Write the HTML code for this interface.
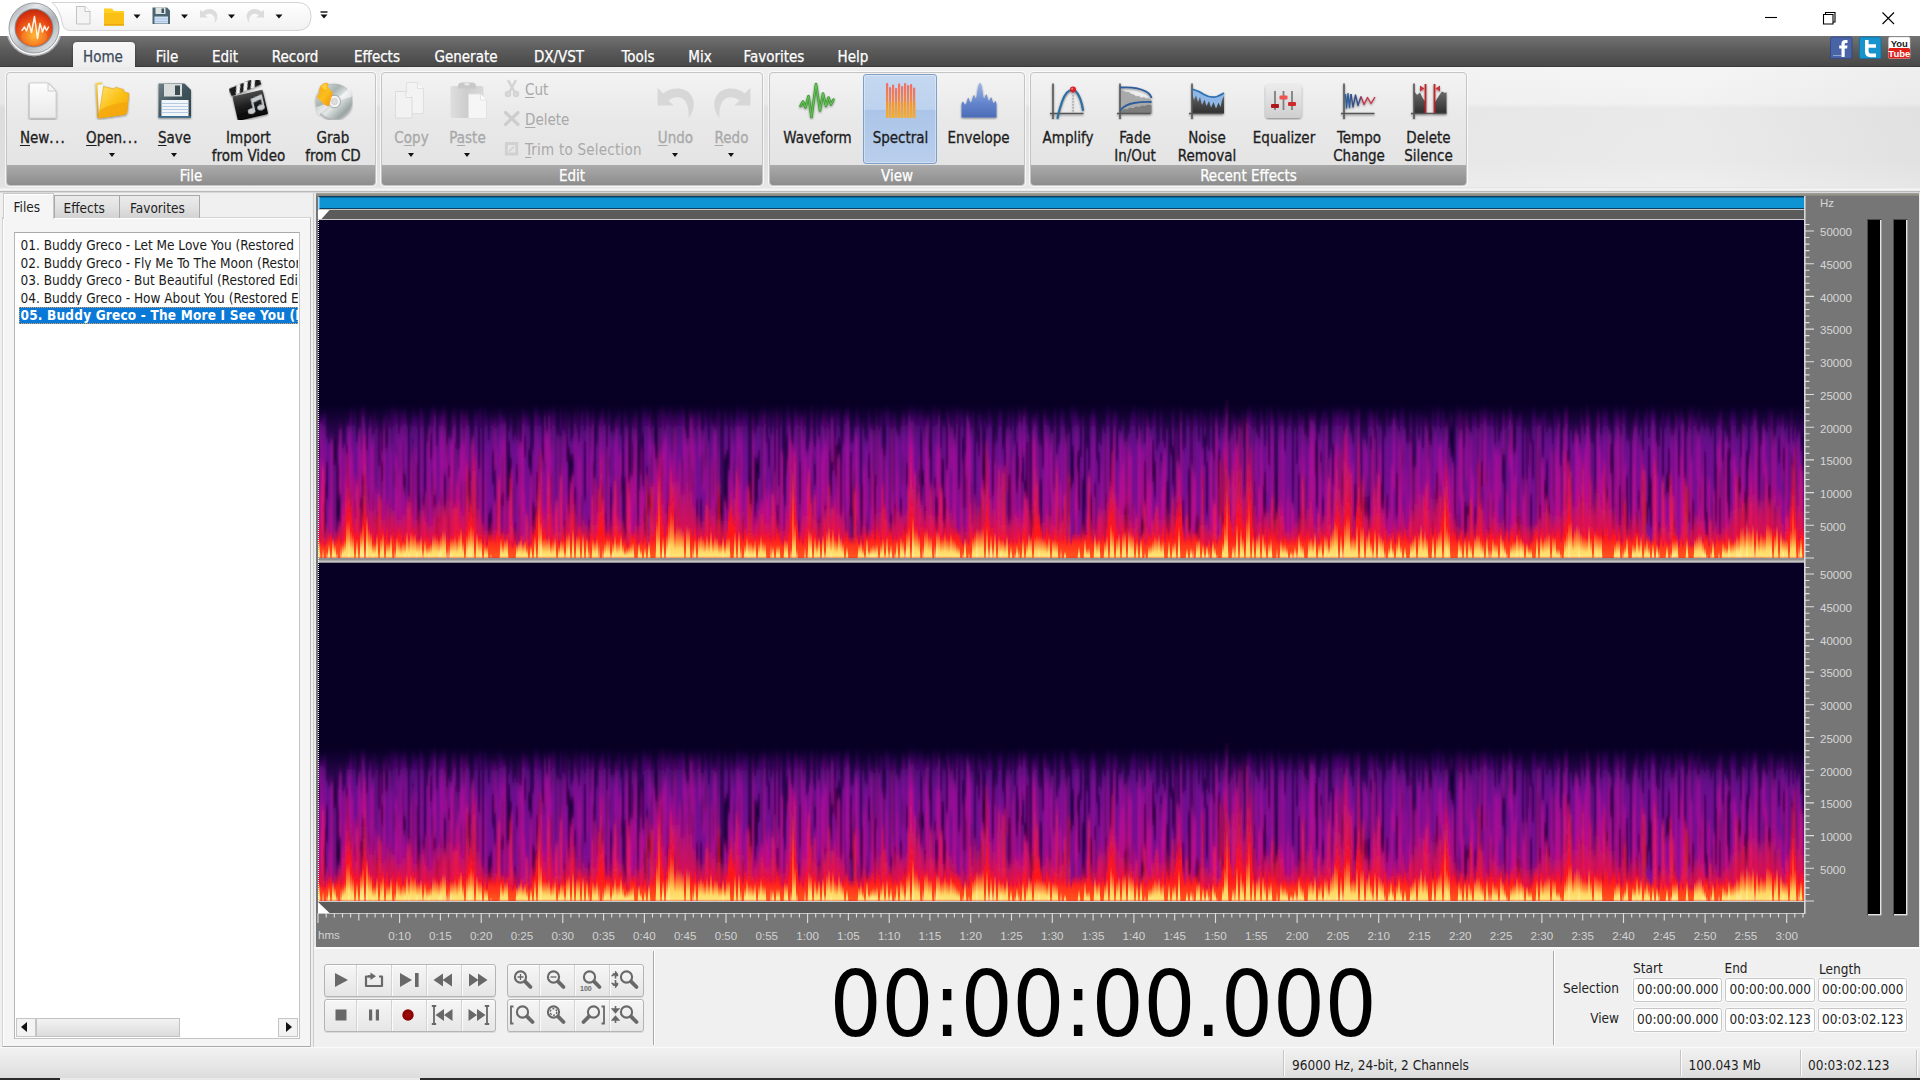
<!DOCTYPE html><html><head><meta charset='utf-8'><title>WavePad</title><style>
*{box-sizing:border-box}
html,body{margin:0;padding:0}
body{width:1920px;height:1080px;overflow:hidden;position:relative;background:#f0f0f0;font-family:'DejaVu Sans Condensed','Liberation Sans',sans-serif;font-size:15px;color:#1e1e1e}
.a{position:absolute}
.t{position:absolute;white-space:nowrap;line-height:1}
.c{transform:translateX(-50%);text-align:center}
.grp{position:absolute;top:72px;height:114px;border:1px solid #c4c4c4;border-radius:4px;background:linear-gradient(#f3f3f3,#e9e9e9 40%,#e2e2e2);overflow:hidden;box-shadow:0 0 0 1px rgba(255,255,255,.7)}
.grp .lb{-webkit-text-stroke:.25px #fff;position:absolute;left:0;right:0;bottom:0;height:20px;background:linear-gradient(#ababab,#8d8d8d);color:#fff;text-align:center;font-size:15px;line-height:22px}
.rl{-webkit-text-stroke:.3px currentColor;position:absolute;white-space:nowrap;line-height:17.5px;font-size:15px;text-align:center;transform:translateX(-50%);color:#1e1e1e}
.dis{color:#a9a9a9}
.arr{position:absolute;width:0;height:0;border-left:3.5px solid transparent;border-right:3.5px solid transparent;border-top:4px solid #111}
u{text-decoration-thickness:1px;text-underline-offset:2px}
</style></head><body>

<svg width='0' height='0' style='position:absolute'><defs>
<linearGradient id='gPage' x1='0' y1='0' x2='0' y2='1'><stop offset='0' stop-color='#fdfdfd'/><stop offset='1' stop-color='#e9e9e9'/></linearGradient>
<linearGradient id='gFold' x1='0' y1='0' x2='1' y2='1'><stop offset='0' stop-color='#ffe36a'/><stop offset='.5' stop-color='#fbc117'/><stop offset='1' stop-color='#f2a30c'/></linearGradient>
<linearGradient id='gFoldB' x1='0' y1='0' x2='0' y2='1'><stop offset='0' stop-color='#f6d25a'/><stop offset='1' stop-color='#d8960f'/></linearGradient>
<linearGradient id='gDisk' x1='0' y1='0' x2='1' y2='1'><stop offset='0' stop-color='#6d7f86'/><stop offset='.5' stop-color='#3f545c'/><stop offset='1' stop-color='#2f444c'/></linearGradient>
<linearGradient id='gClap' x1='0' y1='0' x2='0' y2='1'><stop offset='0' stop-color='#4a4a4a'/><stop offset='.5' stop-color='#1c1c1c'/><stop offset='1' stop-color='#050505'/></linearGradient>
<linearGradient id='gCD' x1='0' y1='0' x2='1' y2='1'><stop offset='0' stop-color='#e8eceb'/><stop offset='.35' stop-color='#a9b5b3'/><stop offset='.55' stop-color='#e3e7e6'/><stop offset='.8' stop-color='#9aa6a4'/><stop offset='1' stop-color='#cfd6d4'/></linearGradient>
<linearGradient id='gFlame' x1='0' y1='0' x2='1' y2='1'><stop offset='0' stop-color='#f6a016'/><stop offset='.5' stop-color='#fbbf1e'/><stop offset='1' stop-color='#f18e0e'/></linearGradient>
<linearGradient id='gSpec' x1='0' y1='0' x2='0' y2='1'><stop offset='0' stop-color='#ee6f66'/><stop offset='.5' stop-color='#f0884a'/><stop offset='1' stop-color='#f4b23a'/></linearGradient>
<linearGradient id='gEnv' x1='0' y1='0' x2='0' y2='1'><stop offset='0' stop-color='#9db4e4'/><stop offset='.6' stop-color='#6384cc'/><stop offset='1' stop-color='#4b6cb8'/></linearGradient>
<linearGradient id='gDark' x1='0' y1='0' x2='0' y2='1'><stop offset='0' stop-color='#6a6a6a'/><stop offset='1' stop-color='#2e2e2e'/></linearGradient>
<linearGradient id='gEq' x1='0' y1='0' x2='0' y2='1'><stop offset='0' stop-color='#ececec'/><stop offset='1' stop-color='#cfcfcf'/></linearGradient>
<linearGradient id='gClip' x1='0' y1='0' x2='1' y2='0'><stop offset='0' stop-color='#dedede'/><stop offset='.5' stop-color='#cdcdcd'/><stop offset='1' stop-color='#d9d9d9'/></linearGradient>
<radialGradient id='gLogo' cx='.5' cy='.7' r='.75'><stop offset='0' stop-color='#ffb52e'/><stop offset='.35' stop-color='#f4701a'/><stop offset='.7' stop-color='#e03c12'/><stop offset='1' stop-color='#b8240a'/></radialGradient>
<linearGradient id='gRing' x1='0' y1='0' x2='1' y2='1'><stop offset='0' stop-color='#8d9399'/><stop offset='.3' stop-color='#e6e8ea'/><stop offset='.6' stop-color='#aeb3b8'/><stop offset='1' stop-color='#f4f4f4'/></linearGradient>
<filter id='sh' x='-20%' y='-20%' width='140%' height='150%'><feGaussianBlur in='SourceAlpha' stdDeviation='1'/><feOffset dy='1.2'/><feComponentTransfer><feFuncA type='linear' slope='.45'/></feComponentTransfer><feMerge><feMergeNode/><feMergeNode in='SourceGraphic'/></feMerge></filter>
</defs></svg>

<div class='a' style='left:0;top:0;width:1920px;height:36px;background:#fff'></div>
<div class='a' style='left:0;top:36px;width:1920px;height:31px;background:linear-gradient(#727272,#5c5c5c 45%,#484848);border-bottom:1px solid #3a3a3a'></div>
<svg class='a' style='left:40px;top:0' width='300' height='36' viewBox='40 0 300 36'><defs><linearGradient id='gQ' x1='0' y1='0' x2='0' y2='1'><stop offset='0' stop-color='#ffffff'/><stop offset='1' stop-color='#f1f1f1'/></linearGradient></defs><path d='M52 2.500H297Q311 2.500 311 16.500Q311 30.500 297 30.500H70Q64 30.500 62.500 24Q60 9 52 2.500z' fill='url(#gQ)' stroke='#d3d3d3' stroke-width='1'/><path d='M76.500 6.500h8.500l5 5v12.500h-13.500z' fill='#f4f4f4' stroke='#c2c2c2'/><path d='M85 6.500v5h5' fill='#fff' stroke='#c2c2c2'/><path d='M104 8.500h8l2 2.500h10v14.500h-20z' fill='#ffcf24'/><path d='M104 13h20v12.500h-20z' fill='#fbc015'/><path d='M104 24h20v1.500h-20z' fill='#e9a90c'/><path d='M152.500 7.500h14.500l3 3v13.500h-17.500z' fill='#4a6470'/><rect x='155.500' y='7.500' width='10' height='6.500' fill='#dfe3e4'/><rect x='161.500' y='8.500' width='2.500' height='4.500' fill='#3f5560'/><rect x='154.500' y='16.500' width='13.500' height='7' fill='#cfe0f2'/><path d='M154.500 19h13.500M154.500 21.500h13.500' stroke='#9fbfe0' stroke-width='.8'/><path d='M200 10v7.500h8l-2.800-2.300q4-2.700 7.500-.3q3.300 2.500 1.800 8q4-4.500 2.500-9q-2-5-8-5q-4 0-6.500 2.800z' fill='#dcdcdc'/><path d='M264 10v7.500h-8l2.800-2.300q-4-2.700-7.500-.3q-3.300 2.500-1.800 8q-4-4.500-2.500-9q2-5 8-5q4 0 6.500 2.800z' fill='#dcdcdc'/><path d='M133.500 14.500h7l-3.500 4zM181 14.500h7l-3.500 4zM228 14.500h7l-3.500 4zM275.500 14.500h7l-3.500 4z' fill='#111'/><path d='M320.500 12h7' stroke='#111' stroke-width='1.400'/><path d='M320.500 14.500h7l-3.500 4z' fill='#111'/></svg>
<svg class='a' style='left:4px;top:0' width='62' height='60' viewBox='4 0 62 60'><circle cx='34' cy='28.500' r='28' fill='#fff' opacity='.5'/><circle cx='34' cy='28.500' r='26.500' fill='#fff' opacity='.9'/><circle cx='34' cy='28' r='25' fill='url(#gRing)' stroke='#8f959b' stroke-width='.9'/><circle cx='34' cy='28' r='19.500' fill='#858c93'/><circle cx='34' cy='28' r='18.500' fill='url(#gLogo)'/><ellipse cx='34' cy='37' rx='13' ry='8' fill='#ffc04a' opacity='.22'/><path d='M22 30.500l2.500-3.500 2 4 2.500-7.500 2.500 9 3-16 3 22 2.500-15 2.500 8.500 2-6 2 4.500 2-3.500' fill='none' stroke='#fff' stroke-width='1.500' stroke-linejoin='round' stroke-linecap='round' opacity='.9'/></svg>
<svg class='a' style='left:1750px;top:0' width='170' height='36' viewBox='1750 0 170 36'><g fill='none' stroke='#000' stroke-width='1.100'><path d='M1765 17.500h12'/><path d='M1823.500 14.500h9.500v9.500h-9.500zM1825.500 14.500v-2h9.500v9.500h-2'/><path d='M1882.500 12.500l11.500 11.500M1894 12.500l-11.500 11.500'/></g></svg>
<svg class='a' style='left:1826px;top:36px' width='90' height='26' viewBox='1826 36 90 26'><rect x='1830.500' y='37' width='21.500' height='21.500' rx='1.500' fill='#4863a6' stroke='#2f4785' stroke-width='.8'/><path d='M1841.500 57v-8.500h-2.300v-3h2.300v-2q0-3.500 3.800-3.500h2.200v3h-1.600q-1.200 0-1.200 1.200v1.300h2.800l-.4 3h-2.400v8.500z' fill='#fff'/><path d='M1833 55.500h8' stroke='#8fa2d0' stroke-width='1'/><rect x='1859.500' y='37' width='21.500' height='21.500' rx='1.500' fill='#1793cd' stroke='#0f6f9f' stroke-width='.8'/><path d='M1865 40h3.600v4.200h7.400v3.600h-7.400v3.200q0 2.600 2.600 2.600h4.800v3.600h-5.600q-5.400 0-5.400-5.400z' fill='#fff'/><rect x='1888.500' y='37' width='21.500' height='21.500' rx='1.500' fill='#fff' stroke='#c9c9c9' stroke-width='.6'/><rect x='1888.500' y='48' width='21.500' height='10.500' rx='1.500' fill='#e0211a'/><text x='1899.300' y='46.500' text-anchor='middle' font-family="'Liberation Sans',sans-serif" font-weight='bold' font-size='9.500' fill='#1a1a1a'>You</text><text x='1899.300' y='57' text-anchor='middle' font-family="'Liberation Sans',sans-serif" font-weight='bold' font-size='9.500' fill='#fff'>Tube</text></svg>
<div class='a' style='left:73px;top:42px;width:62px;height:27px;background:linear-gradient(#f7f7f7,#ededed);border-radius:4px 4px 0 0;box-shadow:0 0 2px rgba(0,0,0,.5)'></div>
<div class='a' style='left:71px;top:67px;width:66px;height:3px;background:#ebebeb'></div>
<div class='t c' style='left:103px;top:50px;font-size:15px;color:#3c4a5c;-webkit-text-stroke:.25px #3c4a5c'>Home</div>
<div class='t c' style='left:167px;top:50px;font-size:15px;color:#fff;-webkit-text-stroke:.25px #fff'>File</div>
<div class='t c' style='left:225px;top:50px;font-size:15px;color:#fff;-webkit-text-stroke:.25px #fff'>Edit</div>
<div class='t c' style='left:295px;top:50px;font-size:15px;color:#fff;-webkit-text-stroke:.25px #fff'>Record</div>
<div class='t c' style='left:377px;top:50px;font-size:15px;color:#fff;-webkit-text-stroke:.25px #fff'>Effects</div>
<div class='t c' style='left:466px;top:50px;font-size:15px;color:#fff;-webkit-text-stroke:.25px #fff'>Generate</div>
<div class='t c' style='left:559px;top:50px;font-size:15px;color:#fff;-webkit-text-stroke:.25px #fff'>DX/VST</div>
<div class='t c' style='left:638px;top:50px;font-size:15px;color:#fff;-webkit-text-stroke:.25px #fff'>Tools</div>
<div class='t c' style='left:700px;top:50px;font-size:15px;color:#fff;-webkit-text-stroke:.25px #fff'>Mix</div>
<div class='t c' style='left:774px;top:50px;font-size:15px;color:#fff;-webkit-text-stroke:.25px #fff'>Favorites</div>
<div class='t c' style='left:853px;top:50px;font-size:15px;color:#fff;-webkit-text-stroke:.25px #fff'>Help</div>
<div class='a' style='left:0;top:67px;width:1920px;height:125px;background:linear-gradient(90deg,rgba(0,0,0,.035),rgba(0,0,0,.01) 60%,rgba(255,255,255,.18) 88%,rgba(0,0,0,.02)),linear-gradient(180deg,#f3f3f3 0,#efefef 29%,#e5e5e5 33%,#e6e6e6 75%,#ececec 100%)'></div>
<div class='a' style='left:0;top:187px;width:1920px;height:6px;background:linear-gradient(#e2e2e2,#f6f6f6 45%,#e9e9e9 62%,#b2b2b2 70%,#c6c6c6 84%,#ededed 100%)'></div>
<div class='grp' style='left:6px;width:370px'><div class='lb'>File</div></div>
<div class='grp' style='left:381px;width:382px'><div class='lb'>Edit</div></div>
<div class='grp' style='left:769px;width:256px'><div class='lb'>View</div></div>
<div class='grp' style='left:1030px;width:437px'><div class='lb'>Recent Effects</div></div>
<div class='a' style='left:863px;top:74px;width:74px;height:90px;border:1px solid #7f9fc9;border-radius:3px;background:linear-gradient(#c5d8f0,#bdd2ee 39%,#abc5e8 40%,#b9ceec 100%);box-shadow:inset 0 0 0 1px rgba(255,255,255,.35)'></div>
<svg class='a' style='left:23px;top:80px' width='40' height='40' viewBox='0 0 40 40' ><g filter='url(#sh)'><path d='M6.500 3h18.500l8 8v27h-26.500z' fill='url(#gPage)' stroke='#c9c9c9' stroke-width='.8'/><path d='M25 3v8h8z' fill='#f6f6f6' stroke='#c4c4c4' stroke-width='.8' stroke-linejoin='round'/></g></svg>
<div class='rl' style='left:43px;top:130px'><u>N</u>ew<span style='letter-spacing:1.3px'>...</span></div>
<svg class='a' style='left:89.5px;top:80px' width='40' height='40' viewBox='0 0 40 40' ><g filter='url(#sh)'><path d='M5.5 3 L12 2.2 L14.5 37 L7.5 38z' fill='url(#gFoldB)'/><path d='M7.5 5 L13 4.3 L15 36 L9 37z' fill='#f5f5f5'/><path d='M13.5 6.5 L24 9 L25.5 7.2 L33.5 9.5 L34 12 L39 13.3 L37 32 Q36.7 34 35 34.4 L9.5 38 Q8.5 38 8.7 36.5z' fill='url(#gFold)' stroke='#e0a21a' stroke-width='.6'/><path d='M10 30 Q22 23 38 22 L37 32 Q36.7 34 35 34.4 L9.5 38 Q8.5 38 8.7 36.5z' fill='#f3a50f' opacity='.75'/></g></svg>
<div class='rl' style='left:112.5px;top:130px'><u>O</u>pen<span style='letter-spacing:1.3px'>...</span></div>
<div class='arr' style='left:109.0px;top:152.5px'></div>
<svg class='a' style='left:154.5px;top:80px' width='40' height='40' viewBox='0 0 40 40' ><g filter='url(#sh)'><path d='M3.5 3.5h26l6.5 6.5v27.5h-32.5z' fill='url(#gDisk)'/><rect x='9' y='4' width='18' height='12.5' fill='#d9dcdc'/><rect x='20' y='5.5' width='5' height='9.5' fill='#3c4c52'/><rect x='6.5' y='20' width='27' height='16' fill='#f2f6fa'/><path d='M6.5 23.5h27M6.5 26.5h27M6.5 29.5h27M6.5 32.5h27' stroke='#b5cbe3' stroke-width='1.2'/><rect x='3.5' y='36' width='32.5' height='1.5' fill='#3b6e93'/></g></svg>
<div class='rl' style='left:174.5px;top:130px'><u>S</u>ave</div>
<div class='arr' style='left:171.0px;top:152.5px'></div>
<svg class='a' style='left:228.5px;top:80px' width='40' height='40' viewBox='0 0 40 40' ><g filter='url(#sh)' transform='rotate(-13 20 22)'><rect x='5' y='13' width='31' height='25' rx='1.5' fill='url(#gClap)'/><g transform='rotate(-9 5 13)'><rect x='4.5' y='4.5' width='32' height='8' rx='1' fill='#1a1a1a'/><path d='M9 12.5l4-8h4l-4 8zM17 12.5l4-8h4l-4 8zM25 12.5l4-8h4l-4 8z' fill='#f2f2f2'/></g><g fill='#c9cdd2'><ellipse cx='20.5' cy='31.5' rx='3.6' ry='2.7'/><ellipse cx='30.5' cy='30' rx='3.6' ry='2.7'/><path d='M22.3 31.5V19.5l11.8-2.2v12.7h-1.8v-8.2l-8.2 1.6v8.1z'/></g></g></svg>
<div class='rl' style='left:248.5px;top:130px'>Import<br>from Video</div>
<svg class='a' style='left:313px;top:80px' width='40' height='40' viewBox='0 0 40 40' ><g filter='url(#sh)'><ellipse cx='21' cy='21.5' rx='18' ry='17.5' fill='url(#gCD)' stroke='#a9b1b0' stroke-width='.6'/><path d='M21 21.5L36 8A18 17.5 0 0 1 38.6 17z' fill='#fff' opacity='.55'/><path d='M21 21.5L6 35A18 17.5 0 0 1 3.6 27z' fill='#fff' opacity='.5'/><ellipse cx='21.5' cy='21.5' rx='6' ry='6.3' fill='#f4f4f4' stroke='#8d9795' stroke-width='.8'/><ellipse cx='21.5' cy='21.5' rx='3' ry='3.2' fill='#dcdcdc' stroke='#b9bfbe' stroke-width='.5'/><path d='M8 5.5Q12 1.5 15.5 3.5Q13.8 6.5 16.5 8.5Q17.3 11 20 12.5L17.5 21Q16.5 24.5 15.5 26.5Q10 24.5 8 21Q4.5 19.5 4 15.5Q6.8 14.5 6 11.5Q5.8 8 8 5.5z' fill='url(#gFlame)'/><path d='M8.5 6Q11 3.5 14 4Q12.5 7 14.5 9.5Q10 10 8.5 6z' fill='#ffd64a' opacity='.8'/></g></svg>
<div class='rl' style='left:333px;top:130px'>Grab<br>from CD</div>
<svg class='a' style='left:391.5px;top:80px' width='40' height='40' viewBox='0 0 40 40' ><g opacity='.9'><path d='M14.5 2.5h11l6 6v25h-17z' fill='#f4f4f4' stroke='#dcdcdc' stroke-width='.9'/><path d='M25.5 2.5v6h6' fill='#f9f9f9' stroke='#dcdcdc' stroke-width='.9'/><path d='M3.5 11.5h10.5l6 6v20.5h-16.5z' fill='#f3f3f3' stroke='#d8d8d8' stroke-width='.9'/><path d='M14 11.5v6h6' fill='#fafafa' stroke='#d8d8d8' stroke-width='.9'/></g></svg>
<div class='rl dis' style='left:411.5px;top:130px'>C<u>o</u>py</div>
<div class='arr' style='left:408.0px;top:152.5px'></div>
<svg class='a' style='left:447.5px;top:80px' width='40' height='40' viewBox='0 0 40 40' ><g><rect x='2.5' y='6' width='33' height='32' rx='2' fill='url(#gClip)'/><path d='M10 6Q10 2.5 14 2.5h10Q28 2.5 28 6v2.5h-18z' fill='#c8c8c8'/><rect x='16.5' y='3.3' width='5' height='2' rx='1' fill='#ececec'/><path d='M20.5 14h12l6 6v18.5h-18z' fill='#f6f6f6' stroke='#e0e0e0' stroke-width='.8'/><path d='M32.5 14v6h6' fill='#fcfcfc' stroke='#e0e0e0' stroke-width='.8'/></g></svg>
<div class='rl dis' style='left:467.5px;top:130px'>P<u>a</u>ste</div>
<div class='arr' style='left:464.0px;top:152.5px'></div>
<svg class='a' style='left:655.5px;top:80px' width='40' height='40' viewBox='0 0 40 40' ><path d='M1.600 8V25.600H17.800L12.300 20.600Q19.500 15 26.500 18.500Q33.500 22.500 32.600 38.100Q39.500 29 37.300 20.500Q34.500 9.800 23 8.600Q13.500 8 7.200 13.600z' fill='#d7d7d7'/></svg>
<div class='rl dis' style='left:675.5px;top:130px'><u>U</u>ndo</div>
<div class='arr' style='left:672.0px;top:152.5px'></div>
<svg class='a' style='left:711.5px;top:80px' width='40' height='40' viewBox='0 0 40 40' ><g transform='translate(40 0) scale(-1 1)'><path d='M1.600 8V25.600H17.800L12.300 20.600Q19.500 15 26.500 18.500Q33.500 22.500 32.600 38.100Q39.500 29 37.300 20.500Q34.500 9.800 23 8.600Q13.500 8 7.200 13.600z' fill='#d7d7d7'/></g></svg>
<div class='rl dis' style='left:731.5px;top:130px'><u>R</u>edo</div>
<div class='arr' style='left:728.0px;top:152.5px'></div>
<svg class='a' style='left:797.5px;top:80px' width='40' height='40' viewBox='0 0 40 40' ><g filter='url(#sh)'><path d='M2.5 26 L5 21.5 L7.5 27.5 L10.5 16 L13.5 37 L18 4 L22 30.5 L25 13.5 L28 26 L30.5 17.5 L33 24.5 L35.5 19.5' fill='none' stroke='#3f9b35' stroke-width='2.6' stroke-linejoin='round' stroke-linecap='round'/><path d='M2.5 26 L5 21.5 L7.5 27.5 L10.5 16 L13.5 37 L18 4 L22 30.5 L25 13.5 L28 26 L30.5 17.5 L33 24.5 L35.5 19.5' fill='none' stroke='#6cc25c' stroke-width='1' stroke-linejoin='round' stroke-linecap='round'/></g></svg>
<div class='rl' style='left:817.5px;top:130px'>Waveform</div>
<svg class='a' style='left:880.5px;top:80px' width='40' height='40' viewBox='0 0 40 40' ><g><rect x='5.0' y='3' width='2.2' height='35' rx='1' fill='url(#gSpec)'/><rect x='8.0' y='7' width='2.2' height='31' rx='1' fill='url(#gSpec)'/><rect x='11.0' y='4.5' width='2.2' height='33.5' rx='1' fill='url(#gSpec)'/><rect x='14.0' y='8' width='2.2' height='30' rx='1' fill='url(#gSpec)'/><rect x='17.0' y='3.5' width='2.2' height='34.5' rx='1' fill='url(#gSpec)'/><rect x='20.0' y='6' width='2.2' height='32' rx='1' fill='url(#gSpec)'/><rect x='23.0' y='3' width='2.2' height='35' rx='1' fill='url(#gSpec)'/><rect x='26.0' y='5' width='2.2' height='33' rx='1' fill='url(#gSpec)'/><rect x='29.0' y='4' width='2.2' height='34' rx='1' fill='url(#gSpec)'/><rect x='32.0' y='7.5' width='2.2' height='30.5' rx='1' fill='url(#gSpec)'/><rect x='5' y='22' width='30' height='16' fill='#f5a623' opacity='.35'/></g></svg>
<div class='rl' style='left:900.5px;top:130px'>Spectral</div>
<svg class='a' style='left:958.5px;top:80px' width='40' height='40' viewBox='0 0 40 40' ><g filter='url(#sh)'><path d='M2.5 37.5V24Q3.5 19.5 5 23Q6.5 27 8 21Q9.2 15 10.5 20.5Q11.8 25.5 13.5 18Q14.8 12.5 16 17.5Q17 21 18 13Q19.5 1.5 21.5 3Q23 5 24 15Q25 21 26.2 16Q27.5 12 28.6 17.5Q29.8 23 31 19Q32.3 15 33.3 20Q34.3 25 35.5 22Q36.8 19 37.5 24V37.5z' fill='url(#gEnv)'/></g></svg>
<div class='rl' style='left:978.5px;top:130px'>Envelope</div>
<svg class='a' style='left:1048px;top:80px' width='40' height='40' viewBox='0 0 40 40' ><g filter='url(#sh)'><path d='M5 3.5V39' stroke='#555' stroke-width='1.6'/><path d='M2 33.5H35.5' stroke='#555' stroke-width='1.6'/><path d='M9.5 38 Q14 18 19 12.5 Q24 7.5 28 11.5 Q33 17 35 30' fill='none' stroke='#2f6f9f' stroke-width='2.2' stroke-linecap='round'/><path d='M25 12V33' stroke='#888' stroke-width='1' stroke-dasharray='1.6 1.4'/><circle cx='25' cy='9.5' r='3' fill='#d8232a'/><circle cx='24.2' cy='8.7' r='1' fill='#f7777a'/></g></svg>
<div class='rl' style='left:1068px;top:130px'>Amplify</div>
<svg class='a' style='left:1115px;top:80px' width='40' height='40' viewBox='0 0 40 40' ><g filter='url(#sh)'><path d='M5 9.5 Q9 10.5 11 12 Q14 11 16 14 Q19 13.5 21 16.5 Q24 15 26 18 Q29 16.5 31 18.5 Q34 17.5 36.5 20 V33.5 H5z' fill='#a9a9a9'/><path d='M5 33.5 V31 Q9 28 12 29.5 Q15 26.5 18 28.5 Q21 25.500 24 27 Q27 24.5 30 26 Q33 24 36.5 25.5 V33.5z' fill='#7d7d7d'/><path d='M5 3.5V39' stroke='#555' stroke-width='1.6'/><path d='M2 33.5H35.5' stroke='#555' stroke-width='1.6'/><path d='M5 7.5 Q22 6.5 31 11.5 Q35.5 14 36.5 18' fill='none' stroke='#2e5d9a' stroke-width='1.8'/><path d='M5 30.5 Q10 24.5 19 23 Q28 21.5 36.5 22' fill='none' stroke='#2e5d9a' stroke-width='1.8'/></g></svg>
<div class='rl' style='left:1135px;top:130px'>Fade<br>In/Out</div>
<svg class='a' style='left:1187px;top:80px' width='40' height='40' viewBox='0 0 40 40' ><g filter='url(#sh)'><path d='M5 9 Q12 11 17 14.5 Q24 18.5 30 16.5 Q34 15 37 13 V33.5 H5z' fill='#8fb8e8'/><path d='M5 33.500 V13 L7 20 L9 15.5 L11 22 L13 17 L15 25 L17.5 19.500 L19.5 26 L22 21 L24 27.5 L26.500 22 L29 28.5 L31.500 22.5 L33.5 27 L35 20 L37 16 V33.5z' fill='url(#gDark)'/><path d='M5 3.5V39' stroke='#555' stroke-width='1.6'/><path d='M2 33.5H35.5' stroke='#555' stroke-width='1.6'/><path d='M5 9 Q12 11 17 14.5 Q24 18.5 30 16.5 Q34 15 37 13' fill='none' stroke='#2e6fb0' stroke-width='1.6'/></g></svg>
<div class='rl' style='left:1207px;top:130px'>Noise<br>Removal</div>
<svg class='a' style='left:1264px;top:80px' width='40' height='40' viewBox='0 0 40 40' ><g filter='url(#sh)'><rect x='1.5' y='4.5' width='36' height='33.500' rx='3.5' fill='url(#gEq)'/><path d='M11 11V30M19.5 11V30M28 11V30' stroke='#808080' stroke-width='1.8'/><rect x='7' y='24' width='8' height='4' rx='1' fill='#b0161a'/><rect x='15.500' y='15.500' width='8' height='4' rx='1' fill='#ee5350'/><rect x='24' y='22' width='8' height='4' rx='1' fill='#d02a2c'/></g></svg>
<div class='rl' style='left:1284px;top:130px'>Equalizer</div>
<svg class='a' style='left:1339px;top:80px' width='40' height='40' viewBox='0 0 40 40' ><g filter='url(#sh)'><path d='M5 3.5V39' stroke='#555' stroke-width='1.6'/><path d='M2 33.5H35.5' stroke='#555' stroke-width='1.6'/><path d='M6.5 14 L7.5 28 L9 13.500 L10.500 27.500 L12 14' fill='none' stroke='#2e5d9a' stroke-width='1.4' stroke-linejoin='round'/><path d='M12 14 L14 27 L16.5 15 L19 25.5 L22 16.500' fill='none' stroke='#3a4e86' stroke-width='1.4' stroke-linejoin='round'/><path d='M22 16.500 L25 24.500 L28.5 17.500 L32 23.500 L36 17' fill='none' stroke='#c03a4a' stroke-width='1.4' stroke-linejoin='round'/></g></svg>
<div class='rl' style='left:1359px;top:130px'>Tempo<br>Change</div>
<svg class='a' style='left:1408.5px;top:80px' width='40' height='40' viewBox='0 0 40 40' ><g filter='url(#sh)'><path d='M5 33.500 V11 L8 15 L11 12.500 L13.500 18 L16.5 22 V33.5z' fill='url(#gDark)'/><path d='M25.500 33.500 V23 L28 19 L30.500 15 L33 11.500 L36 13 L37.500 12 V33.5z' fill='url(#gDark)'/><path d='M5 3.500V39' stroke='#555' stroke-width='1.6'/><path d='M2 33.500H37.500' stroke='#555' stroke-width='1.6'/><path d='M16.5 4V33M25.500 4V33' stroke='#b8262c' stroke-width='1.8'/><path d='M11 5.500l4.500 3-4.500 3zM31 5.500l-4.500 3 4.500 3z' fill='#c8343a'/></g></svg>
<div class='rl' style='left:1428.5px;top:130px'>Delete<br>Silence</div>
<svg class='a' style='left:503px;top:79px' width='18' height='19' viewBox='0 0 18 19' ><g fill='none' stroke='#d3d3d3' stroke-width='2.500' stroke-linecap='round'><path d='M5.500 2L11 12M12.500 2L7 12'/><circle cx='5' cy='15' r='2'/><circle cx='13' cy='15' r='2'/></g></svg>
<div class='t dis' style='left:525px;top:83px'><u>C</u>ut</div>
<svg class='a' style='left:503px;top:110px' width='18' height='17' viewBox='0 0 18 17' ><path d='M2.5 2.500L15 14.500M15 2.500L2.500 14.500' stroke='#cdcdcd' stroke-width='3.200' stroke-linecap='round'/></svg>
<div class='t dis' style='left:525px;top:113px'><u>D</u>elete</div>
<svg class='a' style='left:503px;top:141px' width='18' height='17' viewBox='0 0 18 17' ><g fill='none' stroke='#d0d0d0'><rect x='3.300' y='2.500' width='10.500' height='10.500' stroke-width='2.800'/><path d='M6 10.500L11 5.500' stroke-width='1.500'/><path d='M1.500 14.500H15' stroke-width='1' stroke='#dcdcdc'/></g></svg>
<div class='t dis' style='left:525px;top:143px;letter-spacing:.23px'><u>T</u>rim to Selection</div>
<div class='a' style='left:0;top:193px;width:314px;height:854px;background:#f0f0f0'></div>
<div class='a' style='left:312px;top:193px;width:2px;height:854px;background:linear-gradient(90deg,#fdfdfd,#bdbdbd)'></div>
<div class='a' style='left:2px;top:217px;width:309px;height:830px;background:#f5f5f5;border:1px solid #d2d2d2;border-right-color:#b9b9b9;border-bottom-color:#a9a9a9;box-shadow:inset 1px 1px 0 #fff'></div>
<div class='a' style='left:54px;top:195px;width:66px;height:23px;background:linear-gradient(#ebebeb,#e2e2e2 50%,#d2d2d2);border:1px solid #a9a9a9;border-bottom:none'></div>
<div class='a' style='left:120px;top:195px;width:80px;height:23px;background:linear-gradient(#ebebeb,#e2e2e2 50%,#d2d2d2);border:1px solid #a9a9a9;border-left:none;border-bottom:none'></div>
<div class='a' style='left:3px;top:193px;width:51px;height:26px;background:#f5f5f5;border:1px solid #c9c9c9;border-bottom:none;box-shadow:inset 1px 1px 0 #fff'></div>
<div class='t' style='left:13.500px;top:200.500px;font-size:13.500px'>Files</div>
<div class='t' style='left:63.500px;top:201.700px;font-size:13.500px'>Effects</div>
<div class='t' style='left:130px;top:201.700px;font-size:13.500px'>Favorites</div>
<div class='a' style='left:14px;top:232px;width:286px;height:807px;background:#fff;border:1px solid #c3c3c3;border-top-color:#a9a9a9;border-left-color:#b5b5b5;overflow:hidden'></div>
<div class='t' style='left:20.500px;top:239.0px;font-size:13.500px;width:277.500px;overflow:hidden;color:#1a1a1a'>01. Buddy Greco - Let Me Love You (Restored Edit)</div>
<div class='t' style='left:20.500px;top:256.5px;font-size:13.500px;width:277.500px;overflow:hidden;color:#1a1a1a'>02. Buddy Greco - Fly Me To The Moon (Restored Edit)</div>
<div class='t' style='left:20.500px;top:274.0px;font-size:13.500px;width:277.500px;overflow:hidden;color:#1a1a1a'>03. Buddy Greco - But Beautiful (Restored Edit)</div>
<div class='t' style='left:20.500px;top:291.5px;font-size:13.500px;width:277.500px;overflow:hidden;color:#1a1a1a'>04. Buddy Greco - How About You (Restored Edit)</div>
<div class='a' style='left:19px;top:307px;width:279px;height:17px;background:#0a78d7;outline:1px dotted #e0a060;outline-offset:-1px'></div>
<div class='t' style='left:20.500px;top:309px;font-size:13.500px;width:277.500px;overflow:hidden;color:#fff;font-weight:bold;letter-spacing:.2px'>05. Buddy Greco - The More I See You (Restored Edit)</div>
<div class='a' style='left:15px;top:1017px;width:284px;height:21px;background:#fff'></div>
<div class='a' style='left:16px;top:1018px;width:20px;height:19px;background:#f3f3f3;border:1px solid #c6c6c6'></div>
<div class='a' style='left:278px;top:1018px;width:20px;height:19px;background:#f3f3f3;border:1px solid #c6c6c6'></div>
<div class='a' style='left:36px;top:1018px;width:144px;height:19px;background:linear-gradient(#f3f3f3,#dcdcdc);border:1px solid #c2c2c2'></div>
<div class='a' style='left:21px;top:1022px;width:0;height:0;border-top:5px solid transparent;border-bottom:5px solid transparent;border-right:6px solid #111'></div>
<div class='a' style='left:286px;top:1022px;width:0;height:0;border-top:5px solid transparent;border-bottom:5px solid transparent;border-left:6px solid #111'></div>
<div class='a' style='left:314px;top:193px;width:1606px;height:755px;background:#e9e9e9'></div>
<div class='a' style='left:316px;top:194px;width:1603px;height:753px;background:#767676'></div>
<div class='a' style='left:316px;top:193px;width:1603px;height:3px;background:linear-gradient(#a3a39b,#84847c)'></div>
<svg class='a' style='left:316px;top:193px' width='1603' height='754' viewBox='316 193 1603 754'><defs>
<linearGradient id='spHaze' gradientUnits='userSpaceOnUse' x1='0' y1='185' x2='0' y2='338'><stop offset='0' stop-color='#4a0a7a' stop-opacity='0'/><stop offset='.2' stop-color='#5c0c84' stop-opacity='.5'/><stop offset='.7' stop-color='#6c0e88' stop-opacity='.6'/><stop offset='.9' stop-color='#a01070' stop-opacity='.75'/><stop offset='1' stop-color='#e01030' stop-opacity='1'/></linearGradient>
<linearGradient id='spDim' gradientUnits='userSpaceOnUse' x1='0' y1='185' x2='0' y2='338'><stop offset='0' stop-color='#5a0c8c' stop-opacity='0'/><stop offset='.1' stop-color='#6a0c94' stop-opacity='.45'/><stop offset='.28' stop-color='#7a0e9c' stop-opacity='.82'/><stop offset='1' stop-color='#8c1096' stop-opacity='.9'/></linearGradient>
<linearGradient id='spMag' gradientUnits='userSpaceOnUse' x1='0' y1='185' x2='0' y2='338'><stop offset='0' stop-color='#900c98' stop-opacity='.15'/><stop offset='.25' stop-color='#a80c9c' stop-opacity='.8'/><stop offset='.8' stop-color='#c81088' stop-opacity='.95'/><stop offset='1' stop-color='#e81850' stop-opacity='1'/></linearGradient>
<linearGradient id='spHot' gradientUnits='userSpaceOnUse' x1='0' y1='185' x2='0' y2='338'><stop offset='0' stop-color='#c0148a' stop-opacity='.3'/><stop offset='.4' stop-color='#e0185a' stop-opacity='.85'/><stop offset='.75' stop-color='#ff2020' stop-opacity='1'/><stop offset='1' stop-color='#ff4020'/></linearGradient>
<linearGradient id='spGlow' gradientUnits='userSpaceOnUse' x1='0' y1='230' x2='0' y2='338'><stop offset='0' stop-color='#c01078' stop-opacity='.25'/><stop offset='.6' stop-color='#e0104a' stop-opacity='.6'/><stop offset='1' stop-color='#ff1428' stop-opacity='.85'/></linearGradient>
<linearGradient id='spRed' gradientUnits='userSpaceOnUse' x1='0' y1='240' x2='0' y2='338'><stop offset='0' stop-color='#d01060' stop-opacity='.6'/><stop offset='.45' stop-color='#f01030'/><stop offset='.8' stop-color='#ff1a1a'/><stop offset='1' stop-color='#ff5a1c'/></linearGradient>
<linearGradient id='spYel' gradientUnits='userSpaceOnUse' x1='0' y1='290' x2='0' y2='338'><stop offset='0' stop-color='#ff8a2a'/><stop offset='.6' stop-color='#ffc04a'/><stop offset='1' stop-color='#ffe878'/></linearGradient>
<filter id='spBlur' x='0' y='0' width='100%' height='100%' filterUnits='objectBoundingBox'><feGaussianBlur stdDeviation='0.8 4'/></filter>
<filter id='spBlur1' x='0' y='0' width='100%' height='100%'><feGaussianBlur stdDeviation='0.35 0.9'/></filter>
<filter id='spBlur2' x='0' y='0' width='100%' height='100%'><feGaussianBlur stdDeviation='1.5 4'/></filter>
<clipPath id='spClip'><rect width='1486' height='338'/></clipPath></defs><rect x='319' y='196' width='1486' height='13' fill='#0b3f60'/><rect x='319' y='197.500' width='1486' height='10.500' fill='#0e93d3'/><rect x='318' y='197' width='1.5' height='12' fill='#9fdcff'/><rect x='318' y='209' width='1487' height='11' fill='#c9c9c9'/><rect x='318' y='210' width='1486' height='9' fill='#5b5b5b'/><path d='M318 210h11.500l-8 9h-3.500z' fill='#fff'/><rect x='318' y='901' width='1487' height='13' fill='#c9c9c9'/><rect x='318' y='902' width='1486' height='11' fill='#5b5b5b'/><path d='M318 902v11h11.500z' fill='#fff'/><rect x='318' y='558' width='1487' height='5' fill='#8e8e8e'/><rect x='318' y='560.500' width='1487' height='1.500' fill='#c4c4c4'/><g id='spec' transform='translate(318 220)' clip-path='url(#spClip)'><rect width='1486' height='338' fill='#070024'/><rect y='185' width='1486' height='153' fill='url(#spHaze)'/><g filter='url(#spBlur)'><path fill='url(#spDim)' d='M0 193h2V338h-2zM2 203h2V338h-2zM4 197h2V338h-2zM6 194h2V338h-2zM8 218h2V338h-2zM10 223h2V338h-2zM12 219h2V338h-2zM16 220h2V338h-2zM20 225h2V338h-2zM24 228h2V338h-2zM26 224h2V338h-2zM28 204h2V338h-2zM30 205h2V338h-2zM32 188h2V338h-2zM34 206h2V338h-2zM36 190h2V338h-2zM38 222h2V338h-2zM40 208h2V338h-2zM44 196h2V338h-2zM46 190h2V338h-2zM48 230h2V338h-2zM50 208h2V338h-2zM52 197h2V338h-2zM54 214h2V338h-2zM58 203h2V338h-2zM60 227h2V338h-2zM64 231h2V338h-2zM66 231h2V338h-2zM68 193h2V338h-2zM70 204h2V338h-2zM72 230h2V338h-2zM74 186h2V338h-2zM76 186h2V338h-2zM78 193h2V338h-2zM80 213h2V338h-2zM82 192h2V338h-2zM84 192h2V338h-2zM86 188h2V338h-2zM88 204h2V338h-2zM92 205h2V338h-2zM94 190h2V338h-2zM96 198h2V338h-2zM98 196h2V338h-2zM102 190h2V338h-2zM104 193h2V338h-2zM108 222h2V338h-2zM112 190h2V338h-2zM114 186h2V338h-2zM116 189h2V338h-2zM118 226h2V338h-2zM120 194h2V338h-2zM122 194h2V338h-2zM124 187h2V338h-2zM126 218h2V338h-2zM128 229h2V338h-2zM130 217h2V338h-2zM132 219h2V338h-2zM134 216h2V338h-2zM136 202h2V338h-2zM138 229h2V338h-2zM142 191h2V338h-2zM144 223h2V338h-2zM148 199h2V338h-2zM150 205h2V338h-2zM154 218h2V338h-2zM156 193h2V338h-2zM158 196h2V338h-2zM160 191h2V338h-2zM162 187h2V338h-2zM166 189h2V338h-2zM168 200h2V338h-2zM170 220h2V338h-2zM172 197h2V338h-2zM174 203h2V338h-2zM178 205h2V338h-2zM180 188h2V338h-2zM182 196h2V338h-2zM184 198h2V338h-2zM186 203h2V338h-2zM190 211h2V338h-2zM192 199h2V338h-2zM194 220h2V338h-2zM196 216h2V338h-2zM198 220h2V338h-2zM200 222h2V338h-2zM202 227h2V338h-2zM204 204h2V338h-2zM206 196h2V338h-2zM208 195h2V338h-2zM210 202h2V338h-2zM214 230h2V338h-2zM216 187h2V338h-2zM218 186h2V338h-2zM220 195h2V338h-2zM222 200h2V338h-2zM224 218h2V338h-2zM226 194h2V338h-2zM228 211h2V338h-2zM230 190h2V338h-2zM232 230h2V338h-2zM234 193h2V338h-2zM236 186h2V338h-2zM240 216h2V338h-2zM242 186h2V338h-2zM244 210h2V338h-2zM246 216h2V338h-2zM248 214h2V338h-2zM250 196h2V338h-2zM252 221h2V338h-2zM254 218h2V338h-2zM256 201h2V338h-2zM258 213h2V338h-2zM260 222h2V338h-2zM262 193h2V338h-2zM264 187h2V338h-2zM266 210h2V338h-2zM268 186h2V338h-2zM270 198h2V338h-2zM272 231h2V338h-2zM274 190h2V338h-2zM278 224h2V338h-2zM280 201h2V338h-2zM284 189h2V338h-2zM286 203h2V338h-2zM290 189h2V338h-2zM292 212h2V338h-2zM294 212h2V338h-2zM296 219h2V338h-2zM298 208h2V338h-2zM300 192h2V338h-2zM302 215h2V338h-2zM306 194h2V338h-2zM308 207h2V338h-2zM310 222h2V338h-2zM314 199h2V338h-2zM316 214h2V338h-2zM324 189h2V338h-2zM326 189h2V338h-2zM328 192h2V338h-2zM330 199h2V338h-2zM332 220h2V338h-2zM334 204h2V338h-2zM336 216h2V338h-2zM338 207h2V338h-2zM340 189h2V338h-2zM344 186h2V338h-2zM346 215h2V338h-2zM348 199h2V338h-2zM350 187h2V338h-2zM352 190h2V338h-2zM354 212h2V338h-2zM358 187h2V338h-2zM360 195h2V338h-2zM362 188h2V338h-2zM364 187h2V338h-2zM366 220h2V338h-2zM368 218h2V338h-2zM372 198h2V338h-2zM374 224h2V338h-2zM376 220h2V338h-2zM378 189h2V338h-2zM380 196h2V338h-2zM382 210h2V338h-2zM384 221h2V338h-2zM386 189h2V338h-2zM388 200h2V338h-2zM392 191h2V338h-2zM394 205h2V338h-2zM396 211h2V338h-2zM400 187h2V338h-2zM406 191h2V338h-2zM408 202h2V338h-2zM410 213h2V338h-2zM412 194h2V338h-2zM414 222h2V338h-2zM416 202h2V338h-2zM418 186h2V338h-2zM420 187h2V338h-2zM422 219h2V338h-2zM424 190h2V338h-2zM426 194h2V338h-2zM428 192h2V338h-2zM434 225h2V338h-2zM436 213h2V338h-2zM438 205h2V338h-2zM440 199h2V338h-2zM442 190h2V338h-2zM446 188h2V338h-2zM448 223h2V338h-2zM450 193h2V338h-2zM452 214h2V338h-2zM454 189h2V338h-2zM462 190h2V338h-2zM464 211h2V338h-2zM468 188h2V338h-2zM470 186h2V338h-2zM472 224h2V338h-2zM474 224h2V338h-2zM476 187h2V338h-2zM478 196h2V338h-2zM482 194h2V338h-2zM484 218h2V338h-2zM486 190h2V338h-2zM488 231h2V338h-2zM490 229h2V338h-2zM492 186h2V338h-2zM494 222h2V338h-2zM496 227h2V338h-2zM498 189h2V338h-2zM500 221h2V338h-2zM502 198h2V338h-2zM504 200h2V338h-2zM506 224h2V338h-2zM508 189h2V338h-2zM512 190h2V338h-2zM514 197h2V338h-2zM516 191h2V338h-2zM518 194h2V338h-2zM520 189h2V338h-2zM522 218h2V338h-2zM524 225h2V338h-2zM526 193h2V338h-2zM528 194h2V338h-2zM530 200h2V338h-2zM532 223h2V338h-2zM534 222h2V338h-2zM536 207h2V338h-2zM538 186h2V338h-2zM540 203h2V338h-2zM544 206h2V338h-2zM546 218h2V338h-2zM548 221h2V338h-2zM550 193h2V338h-2zM552 209h2V338h-2zM556 210h2V338h-2zM558 204h2V338h-2zM560 210h2V338h-2zM562 194h2V338h-2zM566 192h2V338h-2zM568 186h2V338h-2zM570 192h2V338h-2zM574 197h2V338h-2zM576 197h2V338h-2zM578 213h2V338h-2zM580 216h2V338h-2zM582 206h2V338h-2zM584 193h2V338h-2zM586 196h2V338h-2zM588 205h2V338h-2zM590 186h2V338h-2zM592 186h2V338h-2zM594 189h2V338h-2zM596 187h2V338h-2zM598 198h2V338h-2zM600 191h2V338h-2zM602 189h2V338h-2zM604 193h2V338h-2zM606 220h2V338h-2zM608 196h2V338h-2zM610 197h2V338h-2zM614 186h2V338h-2zM616 188h2V338h-2zM618 202h2V338h-2zM620 195h2V338h-2zM624 201h2V338h-2zM626 206h2V338h-2zM628 186h2V338h-2zM630 194h2V338h-2zM632 227h2V338h-2zM634 186h2V338h-2zM636 225h2V338h-2zM638 192h2V338h-2zM640 194h2V338h-2zM642 189h2V338h-2zM644 194h2V338h-2zM648 194h2V338h-2zM650 194h2V338h-2zM652 217h2V338h-2zM654 191h2V338h-2zM658 222h2V338h-2zM660 195h2V338h-2zM662 199h2V338h-2zM664 230h2V338h-2zM666 200h2V338h-2zM668 208h2V338h-2zM670 187h2V338h-2zM672 200h2V338h-2zM674 227h2V338h-2zM678 221h2V338h-2zM680 193h2V338h-2zM682 189h2V338h-2zM684 208h2V338h-2zM688 207h2V338h-2zM690 193h2V338h-2zM694 191h2V338h-2zM696 223h2V338h-2zM698 201h2V338h-2zM700 189h2V338h-2zM702 202h2V338h-2zM704 196h2V338h-2zM706 194h2V338h-2zM708 189h2V338h-2zM714 219h2V338h-2zM716 199h2V338h-2zM718 193h2V338h-2zM722 225h2V338h-2zM724 212h2V338h-2zM726 197h2V338h-2zM728 202h2V338h-2zM730 203h2V338h-2zM732 230h2V338h-2zM736 186h2V338h-2zM740 224h2V338h-2zM742 193h2V338h-2zM744 191h2V338h-2zM750 213h2V338h-2zM752 186h2V338h-2zM754 186h2V338h-2zM756 188h2V338h-2zM758 191h2V338h-2zM760 202h2V338h-2zM762 221h2V338h-2zM764 198h2V338h-2zM768 228h2V338h-2zM770 224h2V338h-2zM772 196h2V338h-2zM774 187h2V338h-2zM776 197h2V338h-2zM778 221h2V338h-2zM780 223h2V338h-2zM782 225h2V338h-2zM784 207h2V338h-2zM788 189h2V338h-2zM790 186h2V338h-2zM792 218h2V338h-2zM794 197h2V338h-2zM796 188h2V338h-2zM798 197h2V338h-2zM800 211h2V338h-2zM802 211h2V338h-2zM804 203h2V338h-2zM806 226h2V338h-2zM810 213h2V338h-2zM812 197h2V338h-2zM814 186h2V338h-2zM816 186h2V338h-2zM818 219h2V338h-2zM820 191h2V338h-2zM822 226h2V338h-2zM824 186h2V338h-2zM826 223h2V338h-2zM828 207h2V338h-2zM830 203h2V338h-2zM832 209h2V338h-2zM834 195h2V338h-2zM836 189h2V338h-2zM838 230h2V338h-2zM840 224h2V338h-2zM842 186h2V338h-2zM844 221h2V338h-2zM846 211h2V338h-2zM848 209h2V338h-2zM852 218h2V338h-2zM854 189h2V338h-2zM862 202h2V338h-2zM864 230h2V338h-2zM866 228h2V338h-2zM868 194h2V338h-2zM870 199h2V338h-2zM876 190h2V338h-2zM878 199h2V338h-2zM880 221h2V338h-2zM882 192h2V338h-2zM884 228h2V338h-2zM886 198h2V338h-2zM888 226h2V338h-2zM890 230h2V338h-2zM892 191h2V338h-2zM896 198h2V338h-2zM898 186h2V338h-2zM900 219h2V338h-2zM902 200h2V338h-2zM904 218h2V338h-2zM906 188h2V338h-2zM908 191h2V338h-2zM910 221h2V338h-2zM912 218h2V338h-2zM914 230h2V338h-2zM916 199h2V338h-2zM918 224h2V338h-2zM920 210h2V338h-2zM922 221h2V338h-2zM924 228h2V338h-2zM928 215h2V338h-2zM930 186h2V338h-2zM932 188h2V338h-2zM936 194h2V338h-2zM938 215h2V338h-2zM940 218h2V338h-2zM942 186h2V338h-2zM944 203h2V338h-2zM946 226h2V338h-2zM948 190h2V338h-2zM950 209h2V338h-2zM952 191h2V338h-2zM954 200h2V338h-2zM960 190h2V338h-2zM962 201h2V338h-2zM964 197h2V338h-2zM966 231h2V338h-2zM968 207h2V338h-2zM970 197h2V338h-2zM972 194h2V338h-2zM976 206h2V338h-2zM978 215h2V338h-2zM980 193h2V338h-2zM982 202h2V338h-2zM984 224h2V338h-2zM986 214h2V338h-2zM988 217h2V338h-2zM990 229h2V338h-2zM992 196h2V338h-2zM994 199h2V338h-2zM996 197h2V338h-2zM998 214h2V338h-2zM1000 214h2V338h-2zM1002 202h2V338h-2zM1004 196h2V338h-2zM1006 187h2V338h-2zM1008 197h2V338h-2zM1012 229h2V338h-2zM1014 189h2V338h-2zM1016 192h2V338h-2zM1018 194h2V338h-2zM1020 191h2V338h-2zM1022 187h2V338h-2zM1024 187h2V338h-2zM1026 211h2V338h-2zM1028 194h2V338h-2zM1030 191h2V338h-2zM1032 213h2V338h-2zM1034 223h2V338h-2zM1036 186h2V338h-2zM1040 187h2V338h-2zM1044 218h2V338h-2zM1046 220h2V338h-2zM1048 229h2V338h-2zM1050 191h2V338h-2zM1052 191h2V338h-2zM1054 230h2V338h-2zM1058 191h2V338h-2zM1060 206h2V338h-2zM1062 203h2V338h-2zM1064 219h2V338h-2zM1066 217h2V338h-2zM1068 186h2V338h-2zM1070 207h2V338h-2zM1072 202h2V338h-2zM1074 198h2V338h-2zM1076 189h2V338h-2zM1078 200h2V338h-2zM1080 229h2V338h-2zM1082 191h2V338h-2zM1084 186h2V338h-2zM1086 209h2V338h-2zM1088 203h2V338h-2zM1090 223h2V338h-2zM1092 192h2V338h-2zM1098 195h2V338h-2zM1100 223h2V338h-2zM1102 196h2V338h-2zM1104 228h2V338h-2zM1106 198h2V338h-2zM1112 222h2V338h-2zM1114 187h2V338h-2zM1116 208h2V338h-2zM1118 186h2V338h-2zM1120 186h2V338h-2zM1122 209h2V338h-2zM1124 186h2V338h-2zM1126 220h2V338h-2zM1128 205h2V338h-2zM1130 228h2V338h-2zM1132 196h2V338h-2zM1134 231h2V338h-2zM1138 186h2V338h-2zM1140 218h2V338h-2zM1142 214h2V338h-2zM1146 227h2V338h-2zM1148 199h2V338h-2zM1150 209h2V338h-2zM1152 197h2V338h-2zM1154 195h2V338h-2zM1156 195h2V338h-2zM1158 208h2V338h-2zM1160 208h2V338h-2zM1162 188h2V338h-2zM1164 204h2V338h-2zM1166 194h2V338h-2zM1168 186h2V338h-2zM1170 203h2V338h-2zM1172 187h2V338h-2zM1174 196h2V338h-2zM1176 224h2V338h-2zM1178 193h2V338h-2zM1180 221h2V338h-2zM1182 211h2V338h-2zM1184 191h2V338h-2zM1188 199h2V338h-2zM1190 200h2V338h-2zM1192 192h2V338h-2zM1194 227h2V338h-2zM1196 214h2V338h-2zM1198 201h2V338h-2zM1200 197h2V338h-2zM1202 195h2V338h-2zM1206 208h2V338h-2zM1210 221h2V338h-2zM1212 223h2V338h-2zM1214 189h2V338h-2zM1216 189h2V338h-2zM1220 205h2V338h-2zM1222 198h2V338h-2zM1224 199h2V338h-2zM1226 192h2V338h-2zM1228 212h2V338h-2zM1230 204h2V338h-2zM1232 207h2V338h-2zM1234 221h2V338h-2zM1236 186h2V338h-2zM1238 214h2V338h-2zM1240 196h2V338h-2zM1244 230h2V338h-2zM1248 189h2V338h-2zM1250 222h2V338h-2zM1252 210h2V338h-2zM1254 223h2V338h-2zM1256 214h2V338h-2zM1258 221h2V338h-2zM1260 223h2V338h-2zM1262 225h2V338h-2zM1264 204h2V338h-2zM1266 214h2V338h-2zM1268 206h2V338h-2zM1274 223h2V338h-2zM1278 210h2V338h-2zM1280 196h2V338h-2zM1282 215h2V338h-2zM1284 186h2V338h-2zM1286 192h2V338h-2zM1288 187h2V338h-2zM1292 214h2V338h-2zM1296 187h2V338h-2zM1298 186h2V338h-2zM1300 220h2V338h-2zM1304 187h2V338h-2zM1306 188h2V338h-2zM1308 220h2V338h-2zM1310 221h2V338h-2zM1314 220h2V338h-2zM1316 207h2V338h-2zM1318 187h2V338h-2zM1320 215h2V338h-2zM1322 206h2V338h-2zM1324 230h2V338h-2zM1326 197h2V338h-2zM1328 186h2V338h-2zM1330 218h2V338h-2zM1332 189h2V338h-2zM1334 186h2V338h-2zM1336 191h2V338h-2zM1338 215h2V338h-2zM1340 226h2V338h-2zM1342 204h2V338h-2zM1344 191h2V338h-2zM1346 208h2V338h-2zM1348 197h2V338h-2zM1350 191h2V338h-2zM1352 218h2V338h-2zM1354 215h2V338h-2zM1356 209h2V338h-2zM1358 197h2V338h-2zM1360 200h2V338h-2zM1362 189h2V338h-2zM1364 203h2V338h-2zM1368 212h2V338h-2zM1370 199h2V338h-2zM1374 186h2V338h-2zM1376 201h2V338h-2zM1378 212h2V338h-2zM1380 187h2V338h-2zM1382 202h2V338h-2zM1384 204h2V338h-2zM1386 209h2V338h-2zM1388 200h2V338h-2zM1390 207h2V338h-2zM1392 216h2V338h-2zM1394 208h2V338h-2zM1398 202h2V338h-2zM1400 198h2V338h-2zM1406 211h2V338h-2zM1408 216h2V338h-2zM1410 222h2V338h-2zM1412 195h2V338h-2zM1414 188h2V338h-2zM1416 194h2V338h-2zM1418 217h2V338h-2zM1420 213h2V338h-2zM1424 193h2V338h-2zM1426 205h2V338h-2zM1428 187h2V338h-2zM1430 225h2V338h-2zM1432 204h2V338h-2zM1434 193h2V338h-2zM1436 192h2V338h-2zM1438 210h2V338h-2zM1442 225h2V338h-2zM1444 206h2V338h-2zM1446 210h2V338h-2zM1448 212h2V338h-2zM1450 186h2V338h-2zM1454 225h2V338h-2zM1458 201h2V338h-2zM1460 198h2V338h-2zM1462 206h2V338h-2zM1464 196h2V338h-2zM1466 210h2V338h-2zM1468 202h2V338h-2zM1470 223h2V338h-2zM1472 206h2V338h-2zM1474 221h2V338h-2zM1476 206h2V338h-2zM1480 211h2V338h-2zM1482 231h2V338h-2zM1484 204h2V338h-2z'/><path fill='#0c022e' opacity='.85' d='M0 220h2v19h-2zM2 298h2v52h-2zM6 266h2v50h-2zM8 242h2v37h-2zM14 283h2v17h-2zM16 215h2v30h-2zM18 277h2v25h-2zM20 244h2v58h-2zM26 290h2v34h-2zM28 225h2v55h-2zM30 268h2v46h-2zM32 256h2v50h-2zM34 257h2v70h-2zM36 281h2v17h-2zM38 261h2v59h-2zM40 250h2v16h-2zM42 278h2v44h-2zM44 253h2v51h-2zM50 270h2v16h-2zM54 273h2v38h-2zM56 305h2v15h-2zM58 295h2v34h-2zM60 207h2v39h-2zM62 237h2v22h-2zM64 242h2v20h-2zM68 204h2v24h-2zM70 289h2v32h-2zM74 305h2v25h-2zM76 248h2v19h-2zM78 226h2v47h-2zM84 224h2v48h-2zM86 253h2v24h-2zM92 272h2v32h-2zM94 219h2v75h-2zM98 243h2v69h-2zM100 276h2v65h-2zM104 277h2v68h-2zM106 221h2v65h-2zM108 274h2v47h-2zM110 288h2v34h-2zM112 214h2v25h-2zM114 252h2v40h-2zM116 264h2v24h-2zM118 297h2v40h-2zM120 296h2v44h-2zM122 248h2v56h-2zM126 255h2v50h-2zM128 208h2v28h-2zM130 245h2v75h-2zM132 268h2v35h-2zM134 268h2v59h-2zM136 222h2v70h-2zM138 301h2v26h-2zM140 273h2v49h-2zM142 262h2v29h-2zM146 285h2v39h-2zM150 251h2v33h-2zM156 281h2v41h-2zM158 255h2v44h-2zM160 197h2v52h-2zM164 260h2v23h-2zM170 293h2v47h-2zM172 289h2v58h-2zM174 231h2v33h-2zM176 221h2v27h-2zM178 281h2v36h-2zM180 283h2v21h-2zM182 277h2v64h-2zM184 237h2v49h-2zM186 303h2v68h-2zM188 277h2v46h-2zM190 221h2v56h-2zM192 238h2v40h-2zM194 264h2v34h-2zM196 303h2v42h-2zM198 244h2v20h-2zM200 285h2v36h-2zM202 243h2v45h-2zM206 215h2v22h-2zM210 229h2v19h-2zM212 227h2v57h-2zM214 282h2v33h-2zM216 287h2v58h-2zM218 252h2v52h-2zM220 235h2v18h-2zM224 220h2v20h-2zM226 227h2v21h-2zM228 274h2v30h-2zM232 252h2v57h-2zM242 211h2v72h-2zM246 300h2v57h-2zM248 216h2v26h-2zM250 227h2v69h-2zM252 234h2v70h-2zM254 234h2v64h-2zM256 267h2v57h-2zM262 275h2v42h-2zM266 221h2v59h-2zM270 300h2v60h-2zM274 242h2v70h-2zM276 203h2v26h-2zM278 262h2v60h-2zM280 298h2v37h-2zM284 261h2v44h-2zM286 293h2v51h-2zM290 235h2v20h-2zM292 267h2v58h-2zM296 254h2v69h-2zM298 289h2v58h-2zM300 265h2v31h-2zM302 255h2v19h-2zM304 227h2v24h-2zM306 257h2v63h-2zM308 298h2v64h-2zM310 211h2v71h-2zM314 222h2v33h-2zM318 262h2v22h-2zM320 223h2v29h-2zM324 213h2v53h-2zM326 288h2v74h-2zM328 246h2v70h-2zM330 273h2v17h-2zM332 235h2v64h-2zM336 206h2v60h-2zM338 200h2v55h-2zM340 252h2v49h-2zM342 215h2v74h-2zM344 242h2v52h-2zM348 285h2v34h-2zM350 266h2v63h-2zM352 281h2v34h-2zM354 209h2v25h-2zM356 207h2v56h-2zM358 284h2v66h-2zM360 276h2v46h-2zM364 236h2v40h-2zM370 210h2v70h-2zM372 292h2v38h-2zM374 210h2v60h-2zM378 280h2v32h-2zM382 279h2v29h-2zM384 233h2v30h-2zM386 220h2v27h-2zM390 289h2v24h-2zM394 246h2v31h-2zM396 238h2v24h-2zM398 272h2v55h-2zM400 273h2v26h-2zM402 279h2v24h-2zM406 235h2v72h-2zM408 230h2v59h-2zM410 215h2v35h-2zM414 240h2v25h-2zM418 288h2v62h-2zM420 233h2v38h-2zM424 299h2v53h-2zM428 281h2v58h-2zM430 256h2v48h-2zM432 244h2v49h-2zM434 229h2v57h-2zM436 237h2v72h-2zM438 238h2v45h-2zM440 230h2v29h-2zM444 265h2v74h-2zM446 260h2v60h-2zM450 218h2v29h-2zM454 248h2v25h-2zM456 290h2v47h-2zM460 272h2v63h-2zM464 206h2v69h-2zM466 288h2v70h-2zM468 214h2v40h-2zM470 299h2v30h-2zM474 292h2v55h-2zM480 204h2v22h-2zM482 242h2v42h-2zM490 282h2v50h-2zM492 259h2v62h-2zM494 233h2v15h-2zM496 244h2v21h-2zM500 299h2v57h-2zM504 270h2v47h-2zM506 243h2v49h-2zM512 230h2v45h-2zM514 220h2v30h-2zM516 195h2v61h-2zM518 225h2v42h-2zM520 217h2v71h-2zM522 222h2v75h-2zM528 298h2v72h-2zM530 289h2v62h-2zM532 232h2v64h-2zM534 265h2v64h-2zM536 252h2v56h-2zM538 292h2v38h-2zM540 269h2v26h-2zM542 226h2v19h-2zM544 264h2v57h-2zM548 293h2v39h-2zM550 234h2v24h-2zM552 253h2v35h-2zM554 260h2v19h-2zM556 255h2v73h-2zM558 209h2v57h-2zM564 266h2v64h-2zM566 200h2v36h-2zM572 281h2v66h-2zM574 201h2v73h-2zM576 284h2v22h-2zM582 278h2v39h-2zM584 235h2v28h-2zM586 305h2v73h-2zM588 243h2v23h-2zM590 303h2v71h-2zM594 202h2v23h-2zM598 270h2v30h-2zM600 250h2v15h-2zM602 211h2v70h-2zM604 250h2v16h-2zM606 263h2v38h-2zM610 211h2v27h-2zM612 222h2v40h-2zM616 258h2v63h-2zM618 257h2v55h-2zM624 239h2v63h-2zM626 277h2v71h-2zM628 198h2v68h-2zM636 300h2v20h-2zM640 198h2v71h-2zM642 291h2v40h-2zM644 217h2v71h-2zM646 305h2v62h-2zM648 247h2v41h-2zM650 280h2v45h-2zM652 261h2v48h-2zM656 266h2v60h-2zM660 207h2v29h-2zM662 277h2v34h-2zM664 232h2v28h-2zM666 208h2v67h-2zM668 302h2v74h-2zM674 207h2v69h-2zM680 292h2v15h-2zM684 201h2v28h-2zM686 250h2v54h-2zM688 244h2v28h-2zM690 255h2v50h-2zM692 232h2v69h-2zM694 277h2v66h-2zM698 223h2v50h-2zM700 236h2v22h-2zM702 253h2v36h-2zM704 229h2v33h-2zM706 260h2v39h-2zM708 222h2v68h-2zM710 284h2v70h-2zM712 269h2v66h-2zM714 290h2v40h-2zM718 268h2v71h-2zM722 259h2v66h-2zM724 198h2v50h-2zM728 256h2v49h-2zM732 281h2v24h-2zM734 211h2v67h-2zM740 289h2v67h-2zM744 289h2v55h-2zM746 206h2v69h-2zM750 262h2v36h-2zM752 198h2v70h-2zM754 226h2v37h-2zM756 300h2v19h-2zM758 233h2v48h-2zM760 230h2v60h-2zM762 201h2v36h-2zM764 259h2v60h-2zM766 216h2v69h-2zM768 299h2v33h-2zM770 217h2v71h-2zM772 275h2v49h-2zM776 263h2v69h-2zM778 218h2v22h-2zM780 232h2v31h-2zM786 234h2v39h-2zM788 274h2v39h-2zM790 272h2v45h-2zM792 219h2v52h-2zM794 204h2v49h-2zM798 204h2v37h-2zM802 276h2v23h-2zM806 288h2v52h-2zM808 262h2v56h-2zM812 253h2v36h-2zM814 283h2v24h-2zM820 284h2v55h-2zM822 283h2v61h-2zM824 291h2v25h-2zM826 241h2v74h-2zM828 228h2v48h-2zM832 230h2v16h-2zM834 220h2v42h-2zM836 241h2v36h-2zM842 233h2v21h-2zM844 291h2v73h-2zM846 211h2v26h-2zM848 261h2v63h-2zM850 298h2v56h-2zM852 202h2v33h-2zM854 226h2v39h-2zM856 290h2v35h-2zM858 267h2v15h-2zM862 234h2v70h-2zM864 280h2v29h-2zM870 249h2v62h-2zM872 302h2v46h-2zM874 226h2v45h-2zM878 296h2v36h-2zM880 300h2v42h-2zM884 254h2v57h-2zM886 215h2v30h-2zM888 242h2v53h-2zM892 287h2v71h-2zM896 198h2v42h-2zM898 236h2v25h-2zM900 229h2v68h-2zM902 301h2v41h-2zM904 238h2v70h-2zM906 242h2v40h-2zM910 280h2v48h-2zM912 221h2v42h-2zM914 239h2v35h-2zM920 251h2v26h-2zM922 207h2v53h-2zM926 196h2v24h-2zM930 214h2v69h-2zM936 261h2v74h-2zM942 248h2v21h-2zM944 266h2v66h-2zM946 252h2v64h-2zM950 204h2v41h-2zM952 301h2v32h-2zM954 280h2v73h-2zM958 252h2v51h-2zM960 300h2v58h-2zM964 240h2v47h-2zM974 239h2v30h-2zM978 220h2v24h-2zM980 253h2v69h-2zM982 288h2v56h-2zM984 213h2v55h-2zM986 256h2v55h-2zM992 262h2v50h-2zM996 220h2v35h-2zM998 218h2v69h-2zM1000 299h2v39h-2zM1002 232h2v25h-2zM1004 277h2v25h-2zM1006 197h2v66h-2zM1010 303h2v15h-2zM1012 271h2v24h-2zM1014 225h2v39h-2zM1018 238h2v21h-2zM1022 238h2v58h-2zM1024 206h2v74h-2zM1026 305h2v58h-2zM1030 270h2v35h-2zM1032 293h2v59h-2zM1036 264h2v36h-2zM1042 268h2v58h-2zM1044 285h2v16h-2zM1046 277h2v30h-2zM1048 258h2v41h-2zM1050 276h2v48h-2zM1052 216h2v63h-2zM1054 223h2v62h-2zM1058 211h2v68h-2zM1062 263h2v71h-2zM1064 217h2v72h-2zM1066 290h2v65h-2zM1068 275h2v24h-2zM1078 253h2v43h-2zM1080 205h2v61h-2zM1082 227h2v56h-2zM1084 229h2v18h-2zM1088 201h2v22h-2zM1092 214h2v53h-2zM1094 235h2v27h-2zM1096 290h2v58h-2zM1100 281h2v30h-2zM1110 211h2v51h-2zM1112 206h2v19h-2zM1114 301h2v62h-2zM1116 271h2v39h-2zM1118 253h2v51h-2zM1120 259h2v53h-2zM1122 276h2v70h-2zM1126 198h2v19h-2zM1128 225h2v35h-2zM1132 204h2v33h-2zM1134 201h2v41h-2zM1136 266h2v28h-2zM1138 294h2v42h-2zM1142 294h2v63h-2zM1144 197h2v45h-2zM1146 282h2v42h-2zM1148 287h2v43h-2zM1150 282h2v49h-2zM1152 198h2v48h-2zM1156 287h2v50h-2zM1158 215h2v39h-2zM1160 252h2v75h-2zM1162 242h2v47h-2zM1164 206h2v60h-2zM1168 249h2v15h-2zM1170 276h2v41h-2zM1172 304h2v26h-2zM1174 278h2v48h-2zM1184 227h2v36h-2zM1186 270h2v32h-2zM1188 298h2v69h-2zM1190 209h2v15h-2zM1192 217h2v16h-2zM1194 205h2v29h-2zM1196 202h2v30h-2zM1198 266h2v54h-2zM1200 296h2v41h-2zM1204 242h2v27h-2zM1206 279h2v44h-2zM1210 217h2v29h-2zM1212 275h2v62h-2zM1214 220h2v39h-2zM1218 207h2v72h-2zM1220 229h2v69h-2zM1222 285h2v52h-2zM1224 202h2v52h-2zM1226 260h2v19h-2zM1228 240h2v53h-2zM1230 285h2v61h-2zM1234 226h2v56h-2zM1238 273h2v42h-2zM1242 238h2v17h-2zM1244 301h2v51h-2zM1248 231h2v58h-2zM1250 226h2v62h-2zM1252 258h2v39h-2zM1258 295h2v28h-2zM1262 277h2v57h-2zM1266 282h2v47h-2zM1270 291h2v46h-2zM1272 251h2v51h-2zM1276 295h2v66h-2zM1280 270h2v49h-2zM1282 293h2v46h-2zM1284 303h2v41h-2zM1286 256h2v16h-2zM1288 269h2v34h-2zM1290 289h2v60h-2zM1292 224h2v64h-2zM1294 292h2v71h-2zM1296 238h2v33h-2zM1300 266h2v47h-2zM1302 251h2v47h-2zM1304 273h2v40h-2zM1306 260h2v51h-2zM1308 255h2v67h-2zM1312 301h2v73h-2zM1318 295h2v44h-2zM1320 271h2v18h-2zM1322 218h2v54h-2zM1324 260h2v55h-2zM1326 303h2v64h-2zM1328 282h2v21h-2zM1330 226h2v62h-2zM1332 258h2v49h-2zM1338 210h2v46h-2zM1340 303h2v73h-2zM1344 202h2v56h-2zM1346 270h2v29h-2zM1348 254h2v18h-2zM1350 228h2v49h-2zM1356 299h2v51h-2zM1360 208h2v48h-2zM1366 212h2v71h-2zM1370 268h2v34h-2zM1372 261h2v51h-2zM1374 280h2v40h-2zM1380 200h2v18h-2zM1382 263h2v23h-2zM1386 232h2v68h-2zM1388 292h2v44h-2zM1390 276h2v69h-2zM1394 281h2v35h-2zM1398 245h2v57h-2zM1400 258h2v58h-2zM1404 297h2v40h-2zM1408 231h2v52h-2zM1410 229h2v69h-2zM1412 205h2v34h-2zM1418 296h2v68h-2zM1420 257h2v74h-2zM1422 264h2v45h-2zM1424 196h2v23h-2zM1426 272h2v41h-2zM1428 231h2v69h-2zM1430 221h2v28h-2zM1432 280h2v62h-2zM1434 295h2v26h-2zM1436 208h2v30h-2zM1438 237h2v60h-2zM1440 228h2v24h-2zM1442 303h2v53h-2zM1444 235h2v67h-2zM1450 265h2v46h-2zM1452 264h2v55h-2zM1460 218h2v25h-2zM1462 273h2v58h-2zM1464 228h2v22h-2zM1466 223h2v56h-2zM1468 286h2v71h-2zM1472 230h2v66h-2zM1474 239h2v49h-2zM1482 293h2v36h-2zM1484 209h2v42h-2z'/><path fill='url(#spMag)' d='M0 272h2V318h-2zM2 206h1V338h-1zM2 201h2V311h-2zM5 247h1V338h-1zM6 201h1V284h-1zM11 284h1V338h-1zM13 220h2V329h-2zM21 208h2V274h-2zM23 208h1V338h-1zM23 231h1V338h-1zM24 285h2V338h-2zM27 261h1V312h-1zM26 227h1V338h-1zM29 282h1V338h-1zM30 210h2V338h-2zM30 283h1V338h-1zM32 194h1V269h-1zM33 233h2V305h-2zM35 257h2V338h-2zM39 266h1V338h-1zM39 268h2V335h-2zM40 214h2V299h-2zM42 190h1V240h-1zM42 230h2V278h-2zM44 188h2V255h-2zM46 213h2V257h-2zM46 221h2V265h-2zM51 201h1V307h-1zM53 223h2V329h-2zM53 262h2V338h-2zM54 259h1V302h-1zM57 269h1V338h-1zM56 192h1V317h-1zM62 211h1V334h-1zM65 199h2V338h-2zM66 289h1V338h-1zM66 235h1V338h-1zM70 282h1V338h-1zM73 293h2V338h-2zM72 188h1V285h-1zM77 235h2V338h-2zM79 190h1V293h-1zM81 253h2V338h-2zM81 287h1V338h-1zM82 204h1V270h-1zM84 205h1V338h-1zM86 267h1V338h-1zM87 196h1V255h-1zM89 277h2V338h-2zM91 293h1V338h-1zM92 242h2V325h-2zM93 233h1V322h-1zM95 225h1V300h-1zM97 278h2V338h-2zM98 232h1V314h-1zM102 189h1V275h-1zM104 281h1V338h-1zM105 286h1V338h-1zM107 273h2V338h-2zM106 295h2V338h-2zM110 206h2V338h-2zM113 272h1V338h-1zM115 233h1V336h-1zM116 190h2V275h-2zM120 285h1V338h-1zM123 207h1V275h-1zM122 207h1V338h-1zM124 195h1V338h-1zM126 190h2V252h-2zM129 224h1V302h-1zM131 257h1V298h-1zM132 227h1V338h-1zM132 221h2V312h-2zM135 224h1V304h-1zM134 193h2V338h-2zM137 188h1V290h-1zM138 263h2V338h-2zM141 229h1V338h-1zM140 249h2V338h-2zM143 193h2V257h-2zM142 224h1V338h-1zM145 223h2V338h-2zM144 219h1V325h-1zM146 194h2V262h-2zM149 189h1V338h-1zM149 195h1V261h-1zM153 224h2V272h-2zM154 263h1V338h-1zM158 230h1V338h-1zM161 250h1V338h-1zM163 252h1V296h-1zM163 234h1V338h-1zM167 235h1V338h-1zM176 281h2V331h-2zM176 198h2V250h-2zM179 227h1V338h-1zM181 281h2V338h-2zM182 217h1V337h-1zM183 198h1V272h-1zM185 219h2V273h-2zM186 201h2V336h-2zM189 281h2V338h-2zM193 249h2V338h-2zM200 199h1V321h-1zM202 222h2V338h-2zM202 282h1V338h-1zM204 192h2V293h-2zM205 273h2V338h-2zM212 255h2V338h-2zM217 194h1V283h-1zM218 288h1V338h-1zM218 280h1V338h-1zM220 214h1V254h-1zM225 251h1V338h-1zM224 291h2V338h-2zM226 194h2V243h-2zM226 286h1V338h-1zM229 212h2V300h-2zM228 211h1V338h-1zM230 194h2V338h-2zM231 197h2V280h-2zM232 258h1V338h-1zM234 189h1V315h-1zM236 291h2V338h-2zM239 214h1V319h-1zM243 226h1V305h-1zM243 217h1V293h-1zM244 245h1V320h-1zM247 189h1V287h-1zM248 276h1V338h-1zM252 263h2V324h-2zM253 277h2V338h-2zM254 255h2V338h-2zM256 190h1V242h-1zM259 189h1V270h-1zM261 239h2V328h-2zM262 217h1V330h-1zM269 191h1V272h-1zM273 203h2V338h-2zM276 258h2V338h-2zM279 293h1V338h-1zM278 264h1V338h-1zM282 196h2V271h-2zM283 285h1V338h-1zM285 234h1V335h-1zM286 205h1V326h-1zM289 227h2V338h-2zM290 205h1V338h-1zM294 285h2V338h-2zM297 238h1V319h-1zM297 201h2V338h-2zM299 270h1V337h-1zM301 233h2V338h-2zM309 204h1V313h-1zM308 220h1V338h-1zM311 275h1V338h-1zM312 256h2V338h-2zM314 209h1V315h-1zM317 194h2V338h-2zM316 241h2V287h-2zM321 270h1V338h-1zM322 254h1V338h-1zM323 229h1V338h-1zM324 269h2V338h-2zM331 200h1V244h-1zM332 188h1V283h-1zM335 225h2V276h-2zM337 238h2V338h-2zM339 249h2V304h-2zM338 260h1V338h-1zM341 230h1V330h-1zM343 189h1V241h-1zM344 254h1V338h-1zM344 226h2V338h-2zM346 189h1V306h-1zM347 217h1V258h-1zM348 195h1V338h-1zM351 223h1V327h-1zM351 235h2V338h-2zM353 245h1V317h-1zM355 195h2V293h-2zM356 207h2V290h-2zM359 258h1V338h-1zM358 268h1V338h-1zM361 241h2V338h-2zM365 194h2V338h-2zM365 225h1V338h-1zM367 209h1V253h-1zM369 221h1V338h-1zM369 224h2V327h-2zM371 191h2V232h-2zM372 226h2V333h-2zM373 195h2V247h-2zM375 195h2V265h-2zM376 230h1V338h-1zM381 193h2V238h-2zM385 210h1V257h-1zM385 217h2V270h-2zM389 243h2V317h-2zM390 221h1V323h-1zM393 242h2V338h-2zM396 207h2V333h-2zM398 194h1V283h-1zM400 231h1V338h-1zM406 282h2V338h-2zM411 259h1V338h-1zM413 239h2V338h-2zM414 204h1V286h-1zM417 274h2V338h-2zM419 206h2V308h-2zM421 261h1V338h-1zM420 208h1V338h-1zM422 202h2V294h-2zM422 267h1V338h-1zM426 272h1V338h-1zM428 285h1V333h-1zM428 267h2V338h-2zM434 196h2V338h-2zM437 297h2V338h-2zM442 285h2V338h-2zM443 282h2V338h-2zM445 193h2V299h-2zM446 267h2V338h-2zM448 279h2V338h-2zM450 269h2V318h-2zM455 252h2V313h-2zM455 213h1V338h-1zM457 280h1V338h-1zM458 190h2V285h-2zM460 266h1V338h-1zM462 232h2V319h-2zM464 234h1V338h-1zM467 286h2V338h-2zM469 240h2V329h-2zM471 202h2V248h-2zM473 280h1V338h-1zM475 233h2V300h-2zM477 276h1V338h-1zM477 190h1V267h-1zM480 195h1V301h-1zM483 198h2V338h-2zM484 199h1V240h-1zM487 234h2V338h-2zM486 207h1V331h-1zM488 266h2V328h-2zM488 289h1V338h-1zM491 221h2V303h-2zM494 189h1V247h-1zM499 217h2V285h-2zM499 233h1V311h-1zM500 224h1V288h-1zM503 233h2V296h-2zM505 204h1V315h-1zM505 190h2V259h-2zM506 221h2V285h-2zM509 208h1V307h-1zM509 203h2V338h-2zM513 196h2V242h-2zM516 217h1V338h-1zM516 295h2V338h-2zM519 238h2V338h-2zM520 235h2V338h-2zM524 243h1V326h-1zM526 196h1V239h-1zM528 221h1V277h-1zM529 189h2V338h-2zM534 238h1V291h-1zM537 214h2V333h-2zM539 216h1V300h-1zM540 268h2V338h-2zM545 248h2V332h-2zM548 230h1V305h-1zM553 207h2V336h-2zM555 255h1V338h-1zM558 190h1V323h-1zM560 210h1V293h-1zM563 229h2V338h-2zM567 296h2V338h-2zM569 250h1V338h-1zM568 229h1V293h-1zM573 206h2V294h-2zM575 288h1V338h-1zM578 211h1V320h-1zM578 251h2V298h-2zM580 296h1V338h-1zM582 297h2V338h-2zM585 195h1V338h-1zM588 294h1V338h-1zM590 194h2V315h-2zM593 201h1V303h-1zM592 204h2V286h-2zM595 269h1V338h-1zM594 200h2V330h-2zM599 276h2V338h-2zM599 297h1V338h-1zM601 260h1V338h-1zM601 236h1V338h-1zM602 291h2V338h-2zM607 201h2V287h-2zM608 207h1V309h-1zM609 232h2V338h-2zM610 198h1V309h-1zM613 297h2V338h-2zM615 268h1V338h-1zM616 268h1V338h-1zM618 227h2V277h-2zM621 208h1V338h-1zM620 191h2V338h-2zM622 228h1V338h-1zM623 272h2V338h-2zM628 250h2V338h-2zM630 220h1V338h-1zM630 196h1V238h-1zM632 207h2V249h-2zM635 218h2V306h-2zM637 290h1V338h-1zM638 189h1V288h-1zM642 291h2V338h-2zM642 264h1V338h-1zM644 241h1V303h-1zM647 234h1V316h-1zM648 194h2V256h-2zM649 200h2V322h-2zM651 203h2V315h-2zM652 234h1V338h-1zM656 275h1V338h-1zM663 223h1V287h-1zM669 289h1V338h-1zM669 272h1V338h-1zM670 239h2V338h-2zM676 224h1V338h-1zM677 243h1V338h-1zM678 270h1V338h-1zM681 281h2V326h-2zM682 240h1V280h-1zM684 288h2V328h-2zM688 217h2V272h-2zM692 210h1V338h-1zM695 229h1V275h-1zM694 239h2V338h-2zM697 263h1V338h-1zM698 295h2V338h-2zM701 189h1V338h-1zM702 194h1V312h-1zM704 295h2V338h-2zM705 189h2V237h-2zM706 273h2V338h-2zM708 279h2V338h-2zM710 245h1V338h-1zM710 214h1V259h-1zM714 198h2V293h-2zM716 205h1V310h-1zM719 249h2V322h-2zM719 267h1V338h-1zM720 222h1V315h-1zM726 262h1V338h-1zM726 192h1V275h-1zM728 217h2V308h-2zM732 224h1V269h-1zM733 213h2V320h-2zM735 269h2V338h-2zM738 234h2V338h-2zM741 294h1V338h-1zM741 265h2V338h-2zM743 220h1V297h-1zM742 291h2V338h-2zM744 295h1V338h-1zM747 223h1V318h-1zM746 206h1V338h-1zM748 215h1V338h-1zM757 268h1V338h-1zM759 251h1V294h-1zM758 205h1V335h-1zM768 293h2V338h-2zM771 250h1V338h-1zM770 291h2V338h-2zM775 196h1V338h-1zM776 277h1V338h-1zM781 296h2V338h-2zM780 295h2V338h-2zM783 247h1V337h-1zM786 213h1V303h-1zM789 276h2V338h-2zM789 212h1V295h-1zM791 266h2V336h-2zM791 282h1V336h-1zM795 207h2V338h-2zM800 277h1V338h-1zM801 253h2V338h-2zM802 253h1V338h-1zM802 218h2V338h-2zM804 243h2V321h-2zM806 221h2V287h-2zM809 219h1V284h-1zM810 230h2V285h-2zM812 235h2V317h-2zM815 285h2V338h-2zM820 223h2V307h-2zM821 209h2V338h-2zM824 228h2V299h-2zM828 195h2V335h-2zM829 237h1V334h-1zM830 264h2V312h-2zM830 259h1V338h-1zM832 218h2V315h-2zM839 287h2V338h-2zM839 242h1V336h-1zM843 269h2V338h-2zM843 241h1V338h-1zM845 246h2V338h-2zM846 228h2V282h-2zM846 268h1V312h-1zM857 276h1V338h-1zM858 210h1V338h-1zM859 241h2V283h-2zM861 247h1V338h-1zM862 189h2V308h-2zM869 275h1V338h-1zM873 244h2V338h-2zM874 252h2V338h-2zM874 197h1V280h-1zM876 255h2V302h-2zM883 232h1V338h-1zM893 232h2V315h-2zM892 236h1V326h-1zM894 282h2V338h-2zM897 198h2V338h-2zM899 205h1V308h-1zM905 198h1V293h-1zM907 211h1V254h-1zM913 214h1V266h-1zM914 194h1V280h-1zM914 235h2V338h-2zM916 208h2V299h-2zM923 205h2V256h-2zM924 195h1V308h-1zM926 274h1V324h-1zM929 193h2V338h-2zM934 200h1V284h-1zM936 229h1V312h-1zM938 213h1V276h-1zM941 271h1V337h-1zM940 267h2V338h-2zM943 201h1V281h-1zM942 227h2V313h-2zM944 245h1V296h-1zM946 297h2V338h-2zM949 292h1V338h-1zM949 222h1V272h-1zM953 189h1V324h-1zM955 200h1V295h-1zM961 216h1V338h-1zM962 287h2V338h-2zM964 207h2V310h-2zM969 280h1V338h-1zM970 271h1V338h-1zM973 283h2V338h-2zM974 294h1V338h-1zM974 289h2V338h-2zM982 236h1V338h-1zM984 198h2V298h-2zM986 238h1V338h-1zM991 195h2V317h-2zM993 201h2V308h-2zM995 205h1V278h-1zM996 190h1V338h-1zM1001 220h1V330h-1zM1002 242h1V300h-1zM1007 206h2V338h-2zM1007 227h2V284h-2zM1008 204h1V306h-1zM1011 238h2V338h-2zM1016 235h2V310h-2zM1017 248h2V338h-2zM1019 192h1V304h-1zM1019 293h1V338h-1zM1024 200h1V252h-1zM1025 240h1V290h-1zM1027 195h2V337h-2zM1026 226h1V338h-1zM1028 276h2V338h-2zM1028 256h2V338h-2zM1030 229h1V330h-1zM1032 217h1V338h-1zM1034 244h2V299h-2zM1039 193h2V302h-2zM1041 231h1V278h-1zM1046 297h2V338h-2zM1046 223h1V270h-1zM1048 224h1V325h-1zM1053 229h1V338h-1zM1054 195h2V337h-2zM1056 219h1V328h-1zM1058 199h1V335h-1zM1059 253h1V338h-1zM1061 230h2V338h-2zM1063 287h1V336h-1zM1065 291h2V338h-2zM1067 276h1V338h-1zM1070 295h2V338h-2zM1070 289h1V338h-1zM1073 246h2V338h-2zM1073 247h1V338h-1zM1075 196h2V269h-2zM1080 211h2V338h-2zM1082 225h2V306h-2zM1085 209h1V275h-1zM1088 250h1V338h-1zM1091 280h1V338h-1zM1092 211h1V338h-1zM1092 222h2V338h-2zM1095 247h1V338h-1zM1097 247h2V320h-2zM1098 268h1V320h-1zM1100 219h2V310h-2zM1103 273h1V314h-1zM1105 229h1V310h-1zM1107 264h1V311h-1zM1108 204h2V309h-2zM1109 253h2V338h-2zM1111 221h1V295h-1zM1110 242h2V338h-2zM1117 213h1V338h-1zM1116 296h1V338h-1zM1119 283h1V338h-1zM1120 276h1V338h-1zM1120 227h2V315h-2zM1122 223h2V264h-2zM1125 251h1V306h-1zM1124 239h1V338h-1zM1127 207h2V338h-2zM1127 252h2V338h-2zM1128 279h2V338h-2zM1130 250h1V338h-1zM1130 253h2V300h-2zM1132 265h1V338h-1zM1134 247h2V338h-2zM1138 246h1V314h-1zM1141 190h2V279h-2zM1143 210h2V323h-2zM1145 275h1V338h-1zM1144 195h1V323h-1zM1147 194h1V258h-1zM1149 189h1V262h-1zM1149 295h2V338h-2zM1152 212h2V338h-2zM1154 256h2V338h-2zM1158 193h1V252h-1zM1162 192h1V307h-1zM1162 249h1V338h-1zM1165 189h2V267h-2zM1167 202h1V323h-1zM1169 248h1V338h-1zM1171 239h1V307h-1zM1172 272h2V338h-2zM1175 207h1V288h-1zM1175 290h2V338h-2zM1177 231h1V338h-1zM1178 231h2V338h-2zM1181 232h2V278h-2zM1185 194h2V235h-2zM1188 274h2V338h-2zM1189 272h1V338h-1zM1191 188h2V247h-2zM1193 211h2V338h-2zM1194 198h1V265h-1zM1194 283h2V338h-2zM1196 257h2V338h-2zM1198 230h1V338h-1zM1205 276h2V338h-2zM1204 259h1V303h-1zM1207 260h2V338h-2zM1210 211h1V329h-1zM1219 202h2V338h-2zM1219 274h1V338h-1zM1223 240h2V338h-2zM1223 290h1V338h-1zM1224 281h2V331h-2zM1225 237h1V338h-1zM1231 293h1V338h-1zM1233 230h2V293h-2zM1237 232h2V338h-2zM1239 200h2V330h-2zM1241 245h2V338h-2zM1245 208h2V338h-2zM1246 191h2V320h-2zM1248 189h1V273h-1zM1249 245h2V308h-2zM1250 258h2V338h-2zM1257 209h2V338h-2zM1259 214h2V336h-2zM1258 258h1V320h-1zM1261 236h2V338h-2zM1261 263h2V338h-2zM1263 193h1V242h-1zM1265 268h2V323h-2zM1266 265h2V338h-2zM1266 228h2V338h-2zM1268 215h1V325h-1zM1268 188h2V338h-2zM1270 198h2V335h-2zM1272 219h1V338h-1zM1275 293h2V338h-2zM1279 191h2V313h-2zM1280 207h1V278h-1zM1281 229h2V338h-2zM1283 255h2V311h-2zM1285 239h1V299h-1zM1286 215h1V307h-1zM1289 278h2V338h-2zM1290 209h2V338h-2zM1292 254h2V330h-2zM1296 220h2V284h-2zM1296 220h2V281h-2zM1299 200h2V338h-2zM1300 197h2V263h-2zM1303 215h2V312h-2zM1304 199h1V307h-1zM1306 244h2V332h-2zM1311 292h1V338h-1zM1315 243h1V302h-1zM1314 210h1V338h-1zM1316 201h2V338h-2zM1316 237h2V338h-2zM1322 223h2V289h-2zM1334 193h1V290h-1zM1335 201h1V338h-1zM1337 223h2V338h-2zM1338 254h2V338h-2zM1338 293h2V338h-2zM1345 266h1V338h-1zM1346 276h2V338h-2zM1351 271h1V318h-1zM1353 258h1V338h-1zM1353 207h1V338h-1zM1357 189h1V317h-1zM1358 220h1V331h-1zM1362 258h2V338h-2zM1362 235h2V307h-2zM1364 200h2V321h-2zM1366 292h1V338h-1zM1371 190h1V292h-1zM1372 193h1V323h-1zM1373 238h1V317h-1zM1378 198h1V258h-1zM1380 213h2V338h-2zM1381 211h1V338h-1zM1383 256h2V338h-2zM1385 238h1V334h-1zM1390 260h2V328h-2zM1395 270h2V334h-2zM1399 224h2V338h-2zM1401 221h1V278h-1zM1403 204h1V332h-1zM1402 192h2V251h-2zM1404 241h1V338h-1zM1406 259h2V337h-2zM1407 220h2V320h-2zM1408 283h2V338h-2zM1413 203h1V250h-1zM1415 237h2V300h-2zM1416 237h2V338h-2zM1421 273h2V331h-2zM1423 237h1V287h-1zM1424 203h2V298h-2zM1431 235h2V338h-2zM1433 282h1V338h-1zM1434 275h1V338h-1zM1434 250h1V338h-1zM1437 192h2V338h-2zM1436 201h2V315h-2zM1439 218h1V336h-1zM1441 285h2V326h-2zM1444 218h1V330h-1zM1445 204h2V255h-2zM1447 243h2V338h-2zM1453 192h2V338h-2zM1453 244h1V338h-1zM1456 216h2V287h-2zM1460 269h1V338h-1zM1462 274h2V338h-2zM1464 197h1V260h-1zM1467 221h2V327h-2zM1468 230h1V338h-1zM1469 293h2V338h-2zM1473 189h1V308h-1zM1479 218h2V338h-2zM1484 261h1V338h-1z'/><path fill='url(#spHot)' d='M4 244h1.5V338h-1.5zM28 233h1.5V338h-1.5zM38 260h1.5V338h-1.5zM46 219h1.5V338h-1.5zM60 274h1.5V338h-1.5zM62 279h1.5V338h-1.5zM90 282h1.5V338h-1.5zM126 291h1.5V338h-1.5zM136 287h1.5V338h-1.5zM138 287h1.5V338h-1.5zM148 243h1.5V338h-1.5zM154 217h1.5V338h-1.5zM156 239h1.5V338h-1.5zM180 259h1.5V338h-1.5zM192 258h1.5V338h-1.5zM208 295h1.5V338h-1.5zM220 338L221 232L222 338zM222 232h1.5V338h-1.5zM230 256h1.5V338h-1.5zM238 281h1.5V338h-1.5zM242 257h1.5V338h-1.5zM252 299h1.5V338h-1.5zM254 294h1.5V338h-1.5zM274 277h1.5V338h-1.5zM280 269h1.5V338h-1.5zM282 234h1.5V338h-1.5zM284 280h1.5V338h-1.5zM296 261h1.5V338h-1.5zM298 299h1.5V338h-1.5zM310 262h1.5V338h-1.5zM328 255h1.5V338h-1.5zM332 265h1.5V338h-1.5zM334 267h1.5V338h-1.5zM340 258h1.5V338h-1.5zM340 338L341 209L342 338zM342 236h1.5V338h-1.5zM352 251h1.5V338h-1.5zM354 266h1.5V338h-1.5zM358 297h1.5V338h-1.5zM388 286h1.5V338h-1.5zM400 263h1.5V338h-1.5zM418 252h1.5V338h-1.5zM430 267h1.5V338h-1.5zM432 284h1.5V338h-1.5zM444 300h1.5V338h-1.5zM454 274h1.5V338h-1.5zM472 221h1.5V338h-1.5zM474 338L475 197L476 338zM476 231h1.5V338h-1.5zM490 251h1.5V338h-1.5zM492 282h1.5V338h-1.5zM496 275h1.5V338h-1.5zM506 299h1.5V338h-1.5zM510 265h1.5V338h-1.5zM514 288h1.5V338h-1.5zM536 270h1.5V338h-1.5zM564 265h1.5V338h-1.5zM566 287h1.5V338h-1.5zM590 268h1.5V338h-1.5zM592 225h1.5V338h-1.5zM596 253h1.5V338h-1.5zM612 266h1.5V338h-1.5zM622 268h1.5V338h-1.5zM652 284h1.5V338h-1.5zM664 267h1.5V338h-1.5zM668 222h1.5V338h-1.5zM680 248h1.5V338h-1.5zM684 252h1.5V338h-1.5zM686 246h1.5V338h-1.5zM706 278h1.5V338h-1.5zM716 218h1.5V338h-1.5zM718 264h1.5V338h-1.5zM738 248h1.5V338h-1.5zM742 304h1.5V338h-1.5zM746 275h1.5V338h-1.5zM750 255h1.5V338h-1.5zM770 257h1.5V338h-1.5zM794 231h1.5V338h-1.5zM796 280h1.5V338h-1.5zM818 298h1.5V338h-1.5zM826 284h1.5V338h-1.5zM834 301h1.5V338h-1.5zM838 287h1.5V338h-1.5zM854 277h1.5V338h-1.5zM868 296h1.5V338h-1.5zM884 250h1.5V338h-1.5zM896 284h1.5V338h-1.5zM902 240h1.5V338h-1.5zM906 229h1.5V338h-1.5zM908 180h1.5V338h-1.5zM908 338L909 215L910 338zM910 257h1.5V338h-1.5zM914 250h1.5V338h-1.5zM918 226h1.5V338h-1.5zM920 202h1.5V338h-1.5zM922 248h1.5V338h-1.5zM928 203h1.5V338h-1.5zM930 245h1.5V338h-1.5zM930 338L931 233L932 338zM932 228h1.5V338h-1.5zM954 278h1.5V338h-1.5zM958 294h1.5V338h-1.5zM984 258h1.5V338h-1.5zM1000 294h1.5V338h-1.5zM1010 258h1.5V338h-1.5zM1018 224h1.5V338h-1.5zM1022 232h1.5V338h-1.5zM1026 214h1.5V338h-1.5zM1028 208h1.5V338h-1.5zM1030 247h1.5V338h-1.5zM1032 253h1.5V338h-1.5zM1040 221h1.5V338h-1.5zM1044 259h1.5V338h-1.5zM1056 268h1.5V338h-1.5zM1058 297h1.5V338h-1.5zM1060 255h1.5V338h-1.5zM1092 302h1.5V338h-1.5zM1106 277h1.5V338h-1.5zM1108 264h1.5V338h-1.5zM1122 276h1.5V338h-1.5zM1126 338L1127 223L1128 338zM1128 242h1.5V338h-1.5zM1130 293h1.5V338h-1.5zM1152 279h1.5V338h-1.5zM1160 244h1.5V338h-1.5zM1162 284h1.5V338h-1.5zM1218 309h1.5V338h-1.5zM1228 279h1.5V338h-1.5zM1246 233h1.5V338h-1.5zM1250 241h1.5V338h-1.5zM1252 251h1.5V338h-1.5zM1264 244h1.5V338h-1.5zM1272 258h1.5V338h-1.5zM1286 246h1.5V338h-1.5zM1306 281h1.5V338h-1.5zM1324 247h1.5V338h-1.5zM1326 251h1.5V338h-1.5zM1336 241h1.5V338h-1.5zM1344 260h1.5V338h-1.5zM1352 255h1.5V338h-1.5zM1354 276h1.5V338h-1.5zM1366 258h1.5V338h-1.5zM1368 266h1.5V338h-1.5zM1392 301h1.5V338h-1.5zM1418 253h1.5V338h-1.5zM1424 283h1.5V338h-1.5zM1432 281h1.5V338h-1.5zM1450 285h1.5V338h-1.5zM1468 297h1.5V338h-1.5zM1474 245h1.5V338h-1.5zM1474 338L1475 244L1476 338zM1476 227h1.5V338h-1.5zM1482 247h1.5V338h-1.5z'/></g><path fill='url(#spGlow)' filter='url(#spBlur2)' d='M-4 338L1 295L6 338zM0 338L5 316L10 338zM4 338L9 302L14 338zM8 338L13 319L18 338zM12 338L17 309L22 338zM16 338L21 303L26 338zM20 338L25 288L30 338zM24 338L29 252L34 338zM28 338L33 242L38 338zM32 338L37 293L42 338zM36 338L41 279L46 338zM40 338L45 263L50 338zM44 338L49 247L54 338zM48 338L53 285L58 338zM52 338L57 279L62 338zM56 338L61 290L66 338zM60 338L65 294L70 338zM64 338L69 275L74 338zM68 338L73 279L78 338zM72 338L77 285L82 338zM76 338L81 295L86 338zM80 338L85 288L90 338zM84 338L89 279L94 338zM88 338L93 272L98 338zM92 338L97 296L102 338zM96 338L101 283L106 338zM100 338L105 283L110 338zM104 338L109 298L114 338zM108 338L113 303L118 338zM112 338L117 276L122 338zM116 338L121 272L126 338zM120 338L125 275L130 338zM124 338L129 270L134 338zM128 338L133 270L138 338zM132 338L137 279L142 338zM136 338L141 270L146 338zM140 338L145 291L150 338zM144 338L149 265L154 338zM148 338L153 235L158 338zM152 338L157 271L162 338zM156 338L161 281L166 338zM160 338L165 299L170 338zM164 338L169 308L174 338zM168 338L173 299L178 338zM172 338L177 307L182 338zM176 338L181 306L186 338zM180 338L185 310L190 338zM184 338L189 312L194 338zM188 338L193 303L198 338zM192 338L197 305L202 338zM196 338L201 324L206 338zM200 338L205 315L210 338zM204 338L209 320L214 338zM208 338L213 302L218 338zM212 338L217 289L222 338zM216 338L221 238L226 338zM220 338L225 293L230 338zM224 338L229 287L234 338zM228 338L233 276L238 338zM232 338L237 311L242 338zM236 338L241 309L246 338zM240 338L245 303L250 338zM244 338L249 277L254 338zM248 338L253 259L258 338zM252 338L257 274L262 338zM256 338L261 302L266 338zM260 338L265 294L270 338zM264 338L269 301L274 338zM268 338L273 298L278 338zM272 338L277 300L282 338zM276 338L281 284L286 338zM280 338L285 281L290 338zM284 338L289 309L294 338zM288 338L293 296L298 338zM292 338L297 302L302 338zM296 338L301 296L306 338zM300 338L305 296L310 338zM304 338L309 312L314 338zM308 338L313 320L318 338zM312 338L317 303L322 338zM316 338L321 302L326 338zM320 338L325 298L330 338zM324 338L329 314L334 338zM328 338L333 310L338 338zM332 338L337 291L342 338zM336 338L341 236L346 338zM340 338L345 274L350 338zM344 338L349 286L354 338zM348 338L353 232L358 338zM352 338L357 241L362 338zM356 338L361 238L366 338zM360 338L365 262L370 338zM364 338L369 242L374 338zM368 338L373 258L378 338zM372 338L377 280L382 338zM376 338L381 290L386 338zM380 338L385 297L390 338zM384 338L389 276L394 338zM388 338L393 281L398 338zM392 338L397 289L402 338zM396 338L401 294L406 338zM400 338L405 297L410 338zM404 338L409 297L414 338zM408 338L413 261L418 338zM412 338L417 267L422 338zM416 338L421 284L426 338zM420 338L425 284L430 338zM424 338L429 305L434 338zM428 338L433 311L438 338zM432 338L437 300L442 338zM436 338L441 282L446 338zM440 338L445 287L450 338zM444 338L449 300L454 338zM448 338L453 290L458 338zM452 338L457 283L462 338zM456 338L461 301L466 338zM460 338L465 308L470 338zM464 338L469 297L474 338zM468 338L473 258L478 338zM472 338L477 264L482 338zM476 338L481 313L486 338zM480 338L485 288L490 338zM484 338L489 291L494 338zM488 338L493 274L498 338zM492 338L497 294L502 338zM496 338L501 298L506 338zM500 338L505 278L510 338zM504 338L509 280L514 338zM508 338L513 280L518 338zM512 338L517 268L522 338zM516 338L521 287L526 338zM520 338L525 283L530 338zM524 338L529 308L534 338zM528 338L533 316L538 338zM532 338L537 316L542 338zM536 338L541 317L546 338zM540 338L545 303L550 338zM544 338L549 303L554 338zM548 338L553 307L558 338zM552 338L557 287L562 338zM556 338L561 284L566 338zM560 338L565 280L570 338zM564 338L569 294L574 338zM568 338L573 298L578 338zM572 338L577 280L582 338zM576 338L581 284L586 338zM580 338L585 288L590 338zM584 338L589 284L594 338zM588 338L593 234L598 338zM592 338L597 255L602 338zM596 338L601 260L606 338zM600 338L605 275L610 338zM604 338L609 283L614 338zM608 338L613 288L618 338zM612 338L617 289L622 338zM616 338L621 290L626 338zM620 338L625 295L630 338zM624 338L629 282L634 338zM628 338L633 286L638 338zM632 338L637 296L642 338zM636 338L641 312L646 338zM640 338L645 302L650 338zM644 338L649 309L654 338zM648 338L653 298L658 338zM652 338L657 273L662 338zM656 338L661 279L666 338zM660 338L665 257L670 338zM664 338L669 244L674 338zM668 338L673 268L678 338zM672 338L677 281L682 338zM676 338L681 296L686 338zM680 338L685 300L690 338zM684 338L689 291L694 338zM688 338L693 296L698 338zM692 338L697 288L702 338zM696 338L701 292L706 338zM700 338L705 298L710 338zM704 338L709 278L714 338zM708 338L713 282L718 338zM712 338L717 268L722 338zM716 338L721 286L726 338zM720 338L725 298L730 338zM724 338L729 287L734 338zM728 338L733 290L738 338zM732 338L737 302L742 338zM736 338L741 306L746 338zM740 338L745 295L750 338zM744 338L749 317L754 338zM748 338L753 315L758 338zM752 338L757 322L762 338zM756 338L761 316L766 338zM760 338L765 300L770 338zM764 338L769 313L774 338zM768 338L773 295L778 338zM772 338L777 307L782 338zM776 338L781 278L786 338zM780 338L785 282L790 338zM784 338L789 273L794 338zM788 338L793 236L798 338zM792 338L797 259L802 338zM796 338L801 280L806 338zM800 338L805 288L810 338zM804 338L809 272L814 338zM808 338L813 296L818 338zM812 338L817 305L822 338zM816 338L821 314L826 338zM820 338L825 310L830 338zM824 338L829 305L834 338zM828 338L833 315L838 338zM832 338L837 286L842 338zM836 338L841 294L846 338zM840 338L845 294L850 338zM844 338L849 281L854 338zM848 338L853 286L858 338zM852 338L857 291L862 338zM856 338L861 242L866 338zM860 338L865 299L870 338zM864 338L869 318L874 338zM868 338L873 305L878 338zM872 338L877 313L882 338zM876 338L881 294L886 338zM880 338L885 300L890 338zM884 338L889 299L894 338zM888 338L893 307L898 338zM892 338L897 311L902 338zM896 338L901 313L906 338zM900 338L905 304L910 338zM904 338L909 255L914 338zM908 338L913 305L918 338zM912 338L917 302L922 338zM916 338L921 243L926 338zM920 338L925 268L930 338zM924 338L929 241L934 338zM928 338L933 231L938 338zM932 338L937 277L942 338zM936 338L941 298L946 338zM940 338L945 283L950 338zM944 338L949 286L954 338zM948 338L953 282L958 338zM952 338L957 296L962 338zM956 338L961 277L966 338zM960 338L965 290L970 338zM964 338L969 310L974 338zM968 338L973 309L978 338zM972 338L977 298L982 338zM976 338L981 292L986 338zM980 338L985 293L990 338zM984 338L989 280L994 338zM988 338L993 272L998 338zM992 338L997 303L1002 338zM996 338L1001 305L1006 338zM1000 338L1005 289L1010 338zM1004 338L1009 289L1014 338zM1008 338L1013 301L1018 338zM1012 338L1017 253L1022 338zM1016 338L1021 254L1026 338zM1020 338L1025 277L1030 338zM1024 338L1029 236L1034 338zM1028 338L1033 278L1038 338zM1032 338L1037 291L1042 338zM1036 338L1041 252L1046 338zM1040 338L1045 280L1050 338zM1044 338L1049 288L1054 338zM1048 338L1053 290L1058 338zM1052 338L1057 276L1062 338zM1056 338L1061 286L1066 338zM1060 338L1065 283L1070 338zM1064 338L1069 306L1074 338zM1068 338L1073 311L1078 338zM1072 338L1077 293L1082 338zM1076 338L1081 307L1086 338zM1080 338L1085 284L1090 338zM1084 338L1089 306L1094 338zM1088 338L1093 285L1098 338zM1092 338L1097 274L1102 338zM1096 338L1101 261L1106 338zM1100 338L1105 263L1110 338zM1104 338L1109 283L1114 338zM1108 338L1113 266L1118 338zM1112 338L1117 267L1122 338zM1116 338L1121 264L1126 338zM1120 338L1125 243L1130 338zM1124 338L1129 250L1134 338zM1128 338L1133 286L1138 338zM1132 338L1137 294L1142 338zM1136 338L1141 304L1146 338zM1140 338L1145 307L1150 338zM1144 338L1149 308L1154 338zM1148 338L1153 307L1158 338zM1152 338L1157 298L1162 338zM1156 338L1161 278L1166 338zM1160 338L1165 280L1170 338zM1164 338L1169 307L1174 338zM1168 338L1173 291L1178 338zM1172 338L1177 292L1182 338zM1176 338L1181 298L1186 338zM1180 338L1185 295L1190 338zM1184 338L1189 309L1194 338zM1188 338L1193 301L1198 338zM1192 338L1197 298L1202 338zM1196 338L1201 286L1206 338zM1200 338L1205 300L1210 338zM1204 338L1209 304L1214 338zM1208 338L1213 302L1218 338zM1212 338L1217 300L1222 338zM1216 338L1221 295L1226 338zM1220 338L1225 285L1230 338zM1224 338L1229 281L1234 338zM1228 338L1233 287L1238 338zM1232 338L1237 289L1242 338zM1236 338L1241 290L1246 338zM1240 338L1245 283L1250 338zM1244 338L1249 265L1254 338zM1248 338L1253 263L1258 338zM1252 338L1257 278L1262 338zM1256 338L1261 263L1266 338zM1260 338L1265 271L1270 338zM1264 338L1269 273L1274 338zM1268 338L1273 280L1278 338zM1272 338L1277 260L1282 338zM1276 338L1281 259L1286 338zM1280 338L1285 282L1290 338zM1284 338L1289 273L1294 338zM1288 338L1293 280L1298 338zM1292 338L1297 278L1302 338zM1296 338L1301 300L1306 338zM1300 338L1305 289L1310 338zM1304 338L1309 306L1314 338zM1308 338L1313 294L1318 338zM1312 338L1317 290L1322 338zM1316 338L1321 283L1326 338zM1320 338L1325 313L1330 338zM1324 338L1329 323L1334 338zM1328 338L1333 324L1338 338zM1332 338L1337 323L1342 338zM1336 338L1341 302L1346 338zM1340 338L1345 305L1350 338zM1344 338L1349 300L1354 338zM1348 338L1353 309L1358 338zM1352 338L1357 305L1362 338zM1356 338L1361 317L1366 338zM1360 338L1365 301L1370 338zM1364 338L1369 317L1374 338zM1368 338L1373 306L1378 338zM1372 338L1377 290L1382 338zM1376 338L1381 291L1386 338zM1380 338L1385 297L1390 338zM1384 338L1389 313L1394 338zM1388 338L1393 316L1398 338zM1392 338L1397 302L1402 338zM1396 338L1401 312L1406 338zM1400 338L1405 305L1410 338zM1404 338L1409 300L1414 338zM1408 338L1413 284L1418 338zM1412 338L1417 281L1422 338zM1416 338L1421 279L1426 338zM1420 338L1425 272L1430 338zM1424 338L1429 267L1434 338zM1428 338L1433 246L1438 338zM1432 338L1437 262L1442 338zM1436 338L1441 269L1446 338zM1440 338L1445 270L1450 338zM1444 338L1449 246L1454 338zM1448 338L1453 268L1458 338zM1452 338L1457 264L1462 338zM1456 338L1461 277L1466 338zM1460 338L1465 300L1470 338zM1464 338L1469 310L1474 338zM1468 338L1473 259L1478 338zM1472 338L1477 263L1482 338zM1476 338L1481 277L1486 338zM1480 338L1485 284L1490 338z'/><g filter='url(#spBlur1)'><path fill='url(#spRed)' d='M-1.5 338L1 315L3.5 338zM0.5 338L3 320L5.5 338zM2.5 338L5 322L7.5 338zM4.5 338L7 323L9.5 338zM6.5 338L9 317L11.5 338zM8.5 338L11 313L13.5 338zM10.5 338L13 311L15.5 338zM12.5 338L15 322L17.5 338zM14.5 338L17 318L19.5 338zM16.5 338L19 316L21.5 338zM18.5 338L21 312L23.5 338zM20.5 338L23 320L25.5 338zM22.5 338L25 317L27.5 338zM24.5 338L27 304L29.5 338zM26.5 338L29 273L31.5 338zM28.5 338L31 265L33.5 338zM30.5 338L33 278L35.5 338zM32.5 338L35 302L37.5 338zM34.5 338L37 310L39.5 338zM36.5 338L39 311L41.5 338zM38.5 338L41 308L43.5 338zM40.5 338L43 306L45.5 338zM42.5 338L45 291L47.5 338zM44.5 338L47 281L49.5 338zM46.5 338L49 293L51.5 338zM48.5 338L51 302L53.5 338zM50.5 338L53 311L55.5 338zM52.5 338L55 311L57.5 338zM54.5 338L57 318L59.5 338zM56.5 338L59 311L61.5 338zM58.5 338L61 310L63.5 338zM60.5 338L63 310L65.5 338zM62.5 338L65 306L67.5 338zM64.5 338L67 314L69.5 338zM66.5 338L69 307L71.5 338zM68.5 338L71 319L73.5 338zM70.5 338L73 313L75.5 338zM72.5 338L75 309L77.5 338zM74.5 338L77 316L79.5 338zM76.5 338L79 311L81.5 338zM78.5 338L81 306L83.5 338zM80.5 338L83 310L85.5 338zM82.5 338L85 319L87.5 338zM84.5 338L87 310L89.5 338zM86.5 338L89 312L91.5 338zM88.5 338L91 317L93.5 338zM90.5 338L93 308L95.5 338zM92.5 338L95 306L97.5 338zM94.5 338L97 312L99.5 338zM96.5 338L99 318L101.5 338zM98.5 338L101 318L103.5 338zM100.5 338L103 318L105.5 338zM102.5 338L105 317L107.5 338zM104.5 338L107 317L109.5 338zM106.5 338L109 315L111.5 338zM108.5 338L111 317L113.5 338zM110.5 338L113 320L115.5 338zM112.5 338L115 320L117.5 338zM114.5 338L117 311L119.5 338zM116.5 338L119 313L121.5 338zM118.5 338L121 316L123.5 338zM120.5 338L123 314L125.5 338zM122.5 338L125 312L127.5 338zM124.5 338L127 315L129.5 338zM126.5 338L129 315L131.5 338zM128.5 338L131 317L133.5 338zM130.5 338L133 313L135.5 338zM132.5 338L135 316L137.5 338zM134.5 338L137 311L139.5 338zM136.5 338L139 310L141.5 338zM138.5 338L141 307L143.5 338zM140.5 338L143 306L145.5 338zM142.5 338L145 310L147.5 338zM144.5 338L147 311L149.5 338zM146.5 338L149 304L151.5 338zM148.5 338L151 286L153.5 338zM150.5 338L153 275L155.5 338zM152.5 338L155 293L157.5 338zM154.5 338L157 304L159.5 338zM156.5 338L159 316L161.5 338zM158.5 338L161 311L163.5 338zM160.5 338L163 312L165.5 338zM162.5 338L165 321L167.5 338zM164.5 338L167 313L169.5 338zM166.5 338L169 325L171.5 338zM168.5 338L171 313L173.5 338zM170.5 338L173 312L175.5 338zM172.5 338L175 313L177.5 338zM174.5 338L177 316L179.5 338zM176.5 338L179 309L181.5 338zM178.5 338L181 316L183.5 338zM180.5 338L183 312L185.5 338zM182.5 338L185 310L187.5 338zM184.5 338L187 321L189.5 338zM186.5 338L189 313L191.5 338zM188.5 338L191 322L193.5 338zM190.5 338L193 323L195.5 338zM192.5 338L195 325L197.5 338zM194.5 338L197 320L199.5 338zM196.5 338L199 324L201.5 338zM198.5 338L201 324L203.5 338zM200.5 338L203 314L205.5 338zM202.5 338L205 326L207.5 338zM204.5 338L207 321L209.5 338zM206.5 338L209 317L211.5 338zM208.5 338L211 324L213.5 338zM210.5 338L213 322L215.5 338zM212.5 338L215 312L217.5 338zM214.5 338L217 306L219.5 338zM216.5 338L219 290L221.5 338zM218.5 338L221 285L223.5 338zM220.5 338L223 291L225.5 338zM222.5 338L225 307L227.5 338zM224.5 338L227 306L229.5 338zM226.5 338L229 318L231.5 338zM228.5 338L231 314L233.5 338zM230.5 338L233 318L235.5 338zM232.5 338L235 313L237.5 338zM234.5 338L237 320L239.5 338zM236.5 338L239 315L241.5 338zM238.5 338L241 322L243.5 338zM240.5 338L243 319L245.5 338zM242.5 338L245 312L247.5 338zM244.5 338L247 317L249.5 338zM246.5 338L249 308L251.5 338zM248.5 338L251 311L253.5 338zM250.5 338L253 314L255.5 338zM252.5 338L255 304L257.5 338zM254.5 338L257 317L259.5 338zM256.5 338L259 314L261.5 338zM258.5 338L261 306L263.5 338zM260.5 338L263 308L265.5 338zM262.5 338L265 319L267.5 338zM264.5 338L267 311L269.5 338zM266.5 338L269 315L271.5 338zM268.5 338L271 319L273.5 338zM270.5 338L273 311L275.5 338zM272.5 338L275 313L277.5 338zM274.5 338L277 319L279.5 338zM276.5 338L279 309L281.5 338zM278.5 338L281 291L283.5 338zM280.5 338L283 285L285.5 338zM282.5 338L285 294L287.5 338zM284.5 338L287 312L289.5 338zM286.5 338L289 311L291.5 338zM288.5 338L291 310L293.5 338zM290.5 338L293 313L295.5 338zM292.5 338L295 319L297.5 338zM294.5 338L297 308L299.5 338zM296.5 338L299 308L301.5 338zM298.5 338L301 310L303.5 338zM300.5 338L303 309L305.5 338zM302.5 338L305 318L307.5 338zM304.5 338L307 318L309.5 338zM306.5 338L309 325L311.5 338zM308.5 338L311 326L313.5 338zM310.5 338L313 311L315.5 338zM312.5 338L315 311L317.5 338zM314.5 338L317 312L319.5 338zM316.5 338L319 323L321.5 338zM318.5 338L321 323L323.5 338zM320.5 338L323 318L325.5 338zM322.5 338L325 321L327.5 338zM324.5 338L327 315L329.5 338zM326.5 338L329 326L331.5 338zM328.5 338L331 324L333.5 338zM330.5 338L333 313L335.5 338zM332.5 338L335 319L337.5 338zM334.5 338L337 307L339.5 338zM336.5 338L339 290L341.5 338zM338.5 338L341 274L343.5 338zM340.5 338L343 276L345.5 338zM342.5 338L345 301L347.5 338zM344.5 338L347 314L349.5 338zM346.5 338L349 302L351.5 338zM348.5 338L351 277L353.5 338zM350.5 338L353 276L355.5 338zM352.5 338L355 272L357.5 338zM354.5 338L357 307L359.5 338zM356.5 338L359 311L361.5 338zM358.5 338L361 305L363.5 338zM360.5 338L363 314L365.5 338zM362.5 338L365 312L367.5 338zM364.5 338L367 301L369.5 338zM366.5 338L369 315L371.5 338zM368.5 338L371 309L373.5 338zM370.5 338L373 306L375.5 338zM372.5 338L375 313L377.5 338zM374.5 338L377 306L379.5 338zM376.5 338L379 316L381.5 338zM378.5 338L381 315L383.5 338zM380.5 338L383 311L385.5 338zM382.5 338L385 314L387.5 338zM384.5 338L387 311L389.5 338zM386.5 338L389 314L391.5 338zM388.5 338L391 316L393.5 338zM390.5 338L393 304L395.5 338zM392.5 338L395 316L397.5 338zM394.5 338L397 311L399.5 338zM396.5 338L399 318L401.5 338zM398.5 338L401 318L403.5 338zM400.5 338L403 321L405.5 338zM402.5 338L405 316L407.5 338zM404.5 338L407 320L409.5 338zM406.5 338L409 310L411.5 338zM408.5 338L411 285L413.5 338zM410.5 338L413 277L415.5 338zM412.5 338L415 291L417.5 338zM414.5 338L417 296L419.5 338zM416.5 338L419 316L421.5 338zM418.5 338L421 309L423.5 338zM420.5 338L423 310L425.5 338zM422.5 338L425 316L427.5 338zM424.5 338L427 307L429.5 338zM426.5 338L429 311L431.5 338zM428.5 338L431 310L433.5 338zM430.5 338L433 314L435.5 338zM432.5 338L435 313L437.5 338zM434.5 338L437 315L439.5 338zM436.5 338L439 311L441.5 338zM438.5 338L441 313L443.5 338zM440.5 338L443 312L445.5 338zM442.5 338L445 310L447.5 338zM444.5 338L447 312L449.5 338zM446.5 338L449 313L451.5 338zM448.5 338L451 311L453.5 338zM450.5 338L453 316L455.5 338zM452.5 338L455 314L457.5 338zM454.5 338L457 313L459.5 338zM456.5 338L459 306L461.5 338zM458.5 338L461 311L463.5 338zM460.5 338L463 319L465.5 338zM462.5 338L465 321L467.5 338zM464.5 338L467 314L469.5 338zM466.5 338L469 320L471.5 338zM468.5 338L471 310L473.5 338zM470.5 338L473 287L475.5 338zM472.5 338L475 268L477.5 338zM474.5 338L477 277L479.5 338zM476.5 338L479 296L481.5 338zM478.5 338L481 317L483.5 338zM480.5 338L483 314L485.5 338zM482.5 338L485 322L487.5 338zM484.5 338L487 312L489.5 338zM486.5 338L489 306L491.5 338zM488.5 338L491 316L493.5 338zM490.5 338L493 309L495.5 338zM492.5 338L495 307L497.5 338zM494.5 338L497 310L499.5 338zM496.5 338L499 315L501.5 338zM498.5 338L501 316L503.5 338zM500.5 338L503 320L505.5 338zM502.5 338L505 315L507.5 338zM504.5 338L507 308L509.5 338zM506.5 338L509 312L511.5 338zM508.5 338L511 309L513.5 338zM510.5 338L513 307L515.5 338zM512.5 338L515 304L517.5 338zM514.5 338L517 314L519.5 338zM516.5 338L519 315L521.5 338zM518.5 338L521 307L523.5 338zM520.5 338L523 319L525.5 338zM522.5 338L525 317L527.5 338zM524.5 338L527 312L529.5 338zM526.5 338L529 311L531.5 338zM528.5 338L531 317L533.5 338zM530.5 338L533 317L535.5 338zM532.5 338L535 317L537.5 338zM534.5 338L537 318L539.5 338zM536.5 338L539 313L541.5 338zM538.5 338L541 323L543.5 338zM540.5 338L543 314L545.5 338zM542.5 338L545 323L547.5 338zM544.5 338L547 312L549.5 338zM546.5 338L549 314L551.5 338zM548.5 338L551 313L553.5 338zM550.5 338L553 311L555.5 338zM552.5 338L555 308L557.5 338zM554.5 338L557 317L559.5 338zM556.5 338L559 307L561.5 338zM558.5 338L561 309L563.5 338zM560.5 338L563 318L565.5 338zM562.5 338L565 307L567.5 338zM564.5 338L567 317L569.5 338zM566.5 338L569 313L571.5 338zM568.5 338L571 309L573.5 338zM570.5 338L573 308L575.5 338zM572.5 338L575 317L577.5 338zM574.5 338L577 314L579.5 338zM576.5 338L579 316L581.5 338zM578.5 338L581 311L583.5 338zM580.5 338L583 315L585.5 338zM582.5 338L585 307L587.5 338zM584.5 338L587 308L589.5 338zM586.5 338L589 305L591.5 338zM588.5 338L591 290L593.5 338zM590.5 338L593 276L595.5 338zM592.5 338L595 279L597.5 338zM594.5 338L597 304L599.5 338zM596.5 338L599 302L601.5 338zM598.5 338L601 315L603.5 338zM600.5 338L603 305L605.5 338zM602.5 338L605 304L607.5 338zM604.5 338L607 306L609.5 338zM606.5 338L609 305L611.5 338zM608.5 338L611 310L613.5 338zM610.5 338L613 314L615.5 338zM612.5 338L615 310L617.5 338zM614.5 338L617 306L619.5 338zM616.5 338L619 313L621.5 338zM618.5 338L621 306L623.5 338zM620.5 338L623 315L625.5 338zM622.5 338L625 313L627.5 338zM624.5 338L627 305L629.5 338zM626.5 338L629 313L631.5 338zM628.5 338L631 311L633.5 338zM630.5 338L633 305L635.5 338zM632.5 338L635 307L637.5 338zM634.5 338L637 308L639.5 338zM636.5 338L639 308L641.5 338zM638.5 338L641 310L643.5 338zM640.5 338L643 318L645.5 338zM642.5 338L645 322L647.5 338zM644.5 338L647 323L649.5 338zM646.5 338L649 316L651.5 338zM648.5 338L651 321L653.5 338zM650.5 338L653 308L655.5 338zM652.5 338L655 311L657.5 338zM654.5 338L657 308L659.5 338zM656.5 338L659 309L661.5 338zM658.5 338L661 306L663.5 338zM660.5 338L663 312L665.5 338zM662.5 338L665 303L667.5 338zM664.5 338L667 299L669.5 338zM666.5 338L669 276L671.5 338zM668.5 338L671 296L673.5 338zM670.5 338L673 305L675.5 338zM672.5 338L675 305L677.5 338zM674.5 338L677 315L679.5 338zM676.5 338L679 319L681.5 338zM678.5 338L681 310L683.5 338zM680.5 338L683 313L685.5 338zM682.5 338L685 318L687.5 338zM684.5 338L687 321L689.5 338zM686.5 338L689 312L691.5 338zM688.5 338L691 321L693.5 338zM690.5 338L693 316L695.5 338zM692.5 338L695 321L697.5 338zM694.5 338L697 317L699.5 338zM696.5 338L699 321L701.5 338zM698.5 338L701 309L703.5 338zM700.5 338L703 320L705.5 338zM702.5 338L705 308L707.5 338zM704.5 338L707 306L709.5 338zM706.5 338L709 316L711.5 338zM708.5 338L711 319L713.5 338zM710.5 338L713 313L715.5 338zM712.5 338L715 305L717.5 338zM714.5 338L717 292L719.5 338zM716.5 338L719 290L721.5 338zM718.5 338L721 291L723.5 338zM720.5 338L723 304L725.5 338zM722.5 338L725 318L727.5 338zM724.5 338L727 313L729.5 338zM726.5 338L729 306L731.5 338zM728.5 338L731 311L733.5 338zM730.5 338L733 313L735.5 338zM732.5 338L735 319L737.5 338zM734.5 338L737 307L739.5 338zM736.5 338L739 314L741.5 338zM738.5 338L741 315L743.5 338zM740.5 338L743 316L745.5 338zM742.5 338L745 316L747.5 338zM744.5 338L747 314L749.5 338zM746.5 338L749 321L751.5 338zM748.5 338L751 314L753.5 338zM750.5 338L753 321L755.5 338zM752.5 338L755 313L757.5 338zM754.5 338L757 312L759.5 338zM756.5 338L759 313L761.5 338zM758.5 338L761 312L763.5 338zM760.5 338L763 315L765.5 338zM762.5 338L765 312L767.5 338zM764.5 338L767 313L769.5 338zM766.5 338L769 313L771.5 338zM768.5 338L771 310L773.5 338zM770.5 338L773 314L775.5 338zM772.5 338L775 318L777.5 338zM774.5 338L777 317L779.5 338zM776.5 338L779 315L781.5 338zM778.5 338L781 317L783.5 338zM780.5 338L783 316L785.5 338zM782.5 338L785 313L787.5 338zM784.5 338L787 317L789.5 338zM786.5 338L789 305L791.5 338zM788.5 338L791 282L793.5 338zM790.5 338L793 267L795.5 338zM792.5 338L795 281L797.5 338zM794.5 338L797 299L799.5 338zM796.5 338L799 306L801.5 338zM798.5 338L801 316L803.5 338zM800.5 338L803 312L805.5 338zM802.5 338L805 303L807.5 338zM804.5 338L807 313L809.5 338zM806.5 338L809 306L811.5 338zM808.5 338L811 315L813.5 338zM810.5 338L813 306L815.5 338zM812.5 338L815 311L817.5 338zM814.5 338L817 317L819.5 338zM816.5 338L819 311L821.5 338zM818.5 338L821 323L823.5 338zM820.5 338L823 316L825.5 338zM822.5 338L825 312L827.5 338zM824.5 338L827 321L829.5 338zM826.5 338L829 319L831.5 338zM828.5 338L831 309L833.5 338zM830.5 338L833 312L835.5 338zM832.5 338L835 310L837.5 338zM834.5 338L837 311L839.5 338zM836.5 338L839 313L841.5 338zM838.5 338L841 319L843.5 338zM840.5 338L843 312L845.5 338zM842.5 338L845 305L847.5 338zM844.5 338L847 319L849.5 338zM846.5 338L849 306L851.5 338zM848.5 338L851 309L853.5 338zM850.5 338L853 306L855.5 338zM852.5 338L855 312L857.5 338zM854.5 338L857 300L859.5 338zM856.5 338L859 280L861.5 338zM858.5 338L861 274L863.5 338zM860.5 338L863 276L865.5 338zM862.5 338L865 310L867.5 338zM864.5 338L867 317L869.5 338zM866.5 338L869 312L871.5 338zM868.5 338L871 310L873.5 338zM870.5 338L873 317L875.5 338zM872.5 338L875 312L877.5 338zM874.5 338L877 310L879.5 338zM876.5 338L879 312L881.5 338zM878.5 338L881 319L883.5 338zM880.5 338L883 318L885.5 338zM882.5 338L885 320L887.5 338zM884.5 338L887 323L889.5 338zM886.5 338L889 326L891.5 338zM888.5 338L891 319L893.5 338zM890.5 338L893 325L895.5 338zM892.5 338L895 320L897.5 338zM894.5 338L897 316L899.5 338zM896.5 338L899 321L901.5 338zM898.5 338L901 314L903.5 338zM900.5 338L903 316L905.5 338zM902.5 338L905 299L907.5 338zM904.5 338L907 278L909.5 338zM906.5 338L909 279L911.5 338zM908.5 338L911 273L913.5 338zM910.5 338L913 297L915.5 338zM912.5 338L915 312L917.5 338zM914.5 338L917 296L919.5 338zM916.5 338L919 277L921.5 338zM918.5 338L921 274L923.5 338zM920.5 338L923 279L925.5 338zM922.5 338L925 296L927.5 338zM924.5 338L927 299L929.5 338zM926.5 338L929 283L931.5 338zM928.5 338L931 253L933.5 338zM930.5 338L933 269L935.5 338zM932.5 338L935 306L937.5 338zM934.5 338L937 315L939.5 338zM936.5 338L939 316L941.5 338zM938.5 338L941 318L943.5 338zM940.5 338L943 307L945.5 338zM942.5 338L945 312L947.5 338zM944.5 338L947 307L949.5 338zM946.5 338L949 318L951.5 338zM948.5 338L951 307L953.5 338zM950.5 338L953 309L955.5 338zM952.5 338L955 310L957.5 338zM954.5 338L957 310L959.5 338zM956.5 338L959 317L961.5 338zM958.5 338L961 318L963.5 338zM960.5 338L963 317L965.5 338zM962.5 338L965 315L967.5 338zM964.5 338L967 312L969.5 338zM966.5 338L969 318L971.5 338zM968.5 338L971 318L973.5 338zM970.5 338L973 317L975.5 338zM972.5 338L975 317L977.5 338zM974.5 338L977 317L979.5 338zM976.5 338L979 314L981.5 338zM978.5 338L981 311L983.5 338zM980.5 338L983 308L985.5 338zM982.5 338L985 315L987.5 338zM984.5 338L987 314L989.5 338zM986.5 338L989 308L991.5 338zM988.5 338L991 308L993.5 338zM990.5 338L993 317L995.5 338zM992.5 338L995 311L997.5 338zM994.5 338L997 318L999.5 338zM996.5 338L999 318L1001.5 338zM998.5 338L1001 319L1003.5 338zM1000.5 338L1003 309L1005.5 338zM1002.5 338L1005 311L1007.5 338zM1004.5 338L1007 319L1009.5 338zM1006.5 338L1009 309L1011.5 338zM1008.5 338L1011 316L1013.5 338zM1010.5 338L1013 314L1015.5 338zM1012.5 338L1015 309L1017.5 338zM1014.5 338L1017 293L1019.5 338zM1016.5 338L1019 276L1021.5 338zM1018.5 338L1021 286L1023.5 338zM1020.5 338L1023 303L1025.5 338zM1022.5 338L1025 299L1027.5 338zM1024.5 338L1027 282L1029.5 338zM1026.5 338L1029 272L1031.5 338zM1028.5 338L1031 272L1033.5 338zM1030.5 338L1033 307L1035.5 338zM1032.5 338L1035 314L1037.5 338zM1034.5 338L1037 311L1039.5 338zM1036.5 338L1039 279L1041.5 338zM1038.5 338L1041 279L1043.5 338zM1040.5 338L1043 285L1045.5 338zM1042.5 338L1045 308L1047.5 338zM1044.5 338L1047 310L1049.5 338zM1046.5 338L1049 317L1051.5 338zM1048.5 338L1051 305L1053.5 338zM1050.5 338L1053 305L1055.5 338zM1052.5 338L1055 304L1057.5 338zM1054.5 338L1057 307L1059.5 338zM1056.5 338L1059 311L1061.5 338zM1058.5 338L1061 312L1063.5 338zM1060.5 338L1063 316L1065.5 338zM1062.5 338L1065 317L1067.5 338zM1064.5 338L1067 308L1069.5 338zM1066.5 338L1069 318L1071.5 338zM1068.5 338L1071 315L1073.5 338zM1070.5 338L1073 315L1075.5 338zM1072.5 338L1075 310L1077.5 338zM1074.5 338L1077 321L1079.5 338zM1076.5 338L1079 311L1081.5 338zM1078.5 338L1081 309L1083.5 338zM1080.5 338L1083 309L1085.5 338zM1082.5 338L1085 313L1087.5 338zM1084.5 338L1087 307L1089.5 338zM1086.5 338L1089 315L1091.5 338zM1088.5 338L1091 318L1093.5 338zM1090.5 338L1093 320L1095.5 338zM1092.5 338L1095 314L1097.5 338zM1094.5 338L1097 314L1099.5 338zM1096.5 338L1099 309L1101.5 338zM1098.5 338L1101 310L1103.5 338zM1100.5 338L1103 309L1105.5 338zM1102.5 338L1105 306L1107.5 338zM1104.5 338L1107 318L1109.5 338zM1106.5 338L1109 315L1111.5 338zM1108.5 338L1111 313L1113.5 338zM1110.5 338L1113 305L1115.5 338zM1112.5 338L1115 313L1117.5 338zM1114.5 338L1117 303L1119.5 338zM1116.5 338L1119 311L1121.5 338zM1118.5 338L1121 310L1123.5 338zM1120.5 338L1123 293L1125.5 338zM1122.5 338L1125 285L1127.5 338zM1124.5 338L1127 272L1129.5 338zM1126.5 338L1129 275L1131.5 338zM1128.5 338L1131 300L1133.5 338zM1130.5 338L1133 310L1135.5 338zM1132.5 338L1135 308L1137.5 338zM1134.5 338L1137 310L1139.5 338zM1136.5 338L1139 316L1141.5 338zM1138.5 338L1141 314L1143.5 338zM1140.5 338L1143 308L1145.5 338zM1142.5 338L1145 318L1147.5 338zM1144.5 338L1147 315L1149.5 338zM1146.5 338L1149 311L1151.5 338zM1148.5 338L1151 319L1153.5 338zM1150.5 338L1153 310L1155.5 338zM1152.5 338L1155 313L1157.5 338zM1154.5 338L1157 317L1159.5 338zM1156.5 338L1159 306L1161.5 338zM1158.5 338L1161 315L1163.5 338zM1160.5 338L1163 306L1165.5 338zM1162.5 338L1165 311L1167.5 338zM1164.5 338L1167 317L1169.5 338zM1166.5 338L1169 311L1171.5 338zM1168.5 338L1171 312L1173.5 338zM1170.5 338L1173 307L1175.5 338zM1172.5 338L1175 311L1177.5 338zM1174.5 338L1177 316L1179.5 338zM1176.5 338L1179 313L1181.5 338zM1178.5 338L1181 310L1183.5 338zM1180.5 338L1183 306L1185.5 338zM1182.5 338L1185 318L1187.5 338zM1184.5 338L1187 315L1189.5 338zM1186.5 338L1189 307L1191.5 338zM1188.5 338L1191 319L1193.5 338zM1190.5 338L1193 307L1195.5 338zM1192.5 338L1195 308L1197.5 338zM1194.5 338L1197 319L1199.5 338zM1196.5 338L1199 312L1201.5 338zM1198.5 338L1201 307L1203.5 338zM1200.5 338L1203 313L1205.5 338zM1202.5 338L1205 320L1207.5 338zM1204.5 338L1207 322L1209.5 338zM1206.5 338L1209 322L1211.5 338zM1208.5 338L1211 323L1213.5 338zM1210.5 338L1213 320L1215.5 338zM1212.5 338L1215 317L1217.5 338zM1214.5 338L1217 307L1219.5 338zM1216.5 338L1219 309L1221.5 338zM1218.5 338L1221 318L1223.5 338zM1220.5 338L1223 307L1225.5 338zM1222.5 338L1225 311L1227.5 338zM1224.5 338L1227 319L1229.5 338zM1226.5 338L1229 309L1231.5 338zM1228.5 338L1231 312L1233.5 338zM1230.5 338L1233 310L1235.5 338zM1232.5 338L1235 307L1237.5 338zM1234.5 338L1237 314L1239.5 338zM1236.5 338L1239 309L1241.5 338zM1238.5 338L1241 308L1243.5 338zM1240.5 338L1243 317L1245.5 338zM1242.5 338L1245 311L1247.5 338zM1244.5 338L1247 298L1249.5 338zM1246.5 338L1249 293L1251.5 338zM1248.5 338L1251 277L1253.5 338zM1250.5 338L1253 296L1255.5 338zM1252.5 338L1255 308L1257.5 338zM1254.5 338L1257 308L1259.5 338zM1256.5 338L1259 307L1261.5 338zM1258.5 338L1261 315L1263.5 338zM1260.5 338L1263 310L1265.5 338zM1262.5 338L1265 313L1267.5 338zM1264.5 338L1267 306L1269.5 338zM1266.5 338L1269 315L1271.5 338zM1268.5 338L1271 310L1273.5 338zM1270.5 338L1273 304L1275.5 338zM1272.5 338L1275 306L1277.5 338zM1274.5 338L1277 309L1279.5 338zM1276.5 338L1279 304L1281.5 338zM1278.5 338L1281 308L1283.5 338zM1280.5 338L1283 306L1285.5 338zM1282.5 338L1285 315L1287.5 338zM1284.5 338L1287 306L1289.5 338zM1286.5 338L1289 306L1291.5 338zM1288.5 338L1291 316L1293.5 338zM1290.5 338L1293 314L1295.5 338zM1292.5 338L1295 306L1297.5 338zM1294.5 338L1297 307L1299.5 338zM1296.5 338L1299 319L1301.5 338zM1298.5 338L1301 308L1303.5 338zM1300.5 338L1303 321L1305.5 338zM1302.5 338L1305 319L1307.5 338zM1304.5 338L1307 313L1309.5 338zM1306.5 338L1309 315L1311.5 338zM1308.5 338L1311 313L1313.5 338zM1310.5 338L1313 316L1315.5 338zM1312.5 338L1315 315L1317.5 338zM1314.5 338L1317 310L1319.5 338zM1316.5 338L1319 309L1321.5 338zM1318.5 338L1321 311L1323.5 338zM1320.5 338L1323 321L1325.5 338zM1322.5 338L1325 312L1327.5 338zM1324.5 338L1327 319L1329.5 338zM1326.5 338L1329 312L1331.5 338zM1328.5 338L1331 314L1333.5 338zM1330.5 338L1333 319L1335.5 338zM1332.5 338L1335 317L1337.5 338zM1334.5 338L1337 312L1339.5 338zM1336.5 338L1339 323L1341.5 338zM1338.5 338L1341 326L1343.5 338zM1340.5 338L1343 315L1345.5 338zM1342.5 338L1345 324L1347.5 338zM1344.5 338L1347 318L1349.5 338zM1346.5 338L1349 320L1351.5 338zM1348.5 338L1351 322L1353.5 338zM1350.5 338L1353 321L1355.5 338zM1352.5 338L1355 311L1357.5 338zM1354.5 338L1357 311L1359.5 338zM1356.5 338L1359 314L1361.5 338zM1358.5 338L1361 325L1363.5 338zM1360.5 338L1363 316L1365.5 338zM1362.5 338L1365 324L1367.5 338zM1364.5 338L1367 318L1369.5 338zM1366.5 338L1369 315L1371.5 338zM1368.5 338L1371 323L1373.5 338zM1370.5 338L1373 324L1375.5 338zM1372.5 338L1375 324L1377.5 338zM1374.5 338L1377 319L1379.5 338zM1376.5 338L1379 316L1381.5 338zM1378.5 338L1381 320L1383.5 338zM1380.5 338L1383 318L1385.5 338zM1382.5 338L1385 319L1387.5 338zM1384.5 338L1387 312L1389.5 338zM1386.5 338L1389 313L1391.5 338zM1388.5 338L1391 325L1393.5 338zM1390.5 338L1393 318L1395.5 338zM1392.5 338L1395 319L1397.5 338zM1394.5 338L1397 324L1399.5 338zM1396.5 338L1399 312L1401.5 338zM1398.5 338L1401 319L1403.5 338zM1400.5 338L1403 318L1405.5 338zM1402.5 338L1405 317L1407.5 338zM1404.5 338L1407 319L1409.5 338zM1406.5 338L1409 313L1411.5 338zM1408.5 338L1411 318L1413.5 338zM1410.5 338L1413 316L1415.5 338zM1412.5 338L1415 319L1417.5 338zM1414.5 338L1417 318L1419.5 338zM1416.5 338L1419 315L1421.5 338zM1418.5 338L1421 311L1423.5 338zM1420.5 338L1423 305L1425.5 338zM1422.5 338L1425 314L1427.5 338zM1424.5 338L1427 303L1429.5 338zM1426.5 338L1429 313L1431.5 338zM1428.5 338L1431 305L1433.5 338zM1430.5 338L1433 311L1435.5 338zM1432.5 338L1435 308L1437.5 338zM1434.5 338L1437 306L1439.5 338zM1436.5 338L1439 311L1441.5 338zM1438.5 338L1441 312L1443.5 338zM1440.5 338L1443 312L1445.5 338zM1442.5 338L1445 312L1447.5 338zM1444.5 338L1447 311L1449.5 338zM1446.5 338L1449 302L1451.5 338zM1448.5 338L1451 302L1453.5 338zM1450.5 338L1453 305L1455.5 338zM1452.5 338L1455 307L1457.5 338zM1454.5 338L1457 306L1459.5 338zM1456.5 338L1459 307L1461.5 338zM1458.5 338L1461 312L1463.5 338zM1460.5 338L1463 316L1465.5 338zM1462.5 338L1465 314L1467.5 338zM1464.5 338L1467 321L1469.5 338zM1466.5 338L1469 309L1471.5 338zM1468.5 338L1471 308L1473.5 338zM1470.5 338L1473 279L1475.5 338zM1472.5 338L1475 264L1477.5 338zM1474.5 338L1477 287L1479.5 338zM1476.5 338L1479 305L1481.5 338zM1478.5 338L1481 318L1483.5 338zM1480.5 338L1483 308L1485.5 338zM1482.5 338L1485 308L1487.5 338z'/><path fill='url(#spYel)' d='M-0.4 338L1 320L2.4 338zM9.6 338L11 324L12.4 338zM13.6 338L15 318L16.4 338zM15.6 338L17 325L18.4 338zM23.6 338L25 324L26.4 338zM25.6 338L27 320L28.4 338zM27.6 338L29 300L30.4 338zM29.6 338L31 299L32.4 338zM31.6 338L33 310L34.4 338zM33.6 338L35 315L36.4 338zM37.6 338L39 320L40.4 338zM41.6 338L43 311L44.4 338zM43.6 338L45 305L46.4 338zM47.6 338L49 296L50.4 338zM49.6 338L51 309L52.4 338zM51.6 338L53 312L54.4 338zM53.6 338L55 324L56.4 338zM55.6 338L57 324L58.4 338zM57.6 338L59 315L60.4 338zM61.6 338L63 318L64.4 338zM63.6 338L65 313L66.4 338zM67.6 338L69 323L70.4 338zM69.6 338L71 323L72.4 338zM71.6 338L73 315L74.4 338zM77.6 338L79 317L80.4 338zM79.6 338L81 321L82.4 338zM81.6 338L83 325L84.4 338zM83.6 338L85 322L86.4 338zM85.6 338L87 323L88.4 338zM87.6 338L89 311L90.4 338zM89.6 338L91 319L92.4 338zM91.6 338L93 312L94.4 338zM93.6 338L95 315L96.4 338zM95.6 338L97 314L98.4 338zM97.6 338L99 320L100.4 338zM99.6 338L101 320L102.4 338zM101.6 338L103 316L104.4 338zM105.6 338L107 320L108.4 338zM107.6 338L109 327L110.4 338zM109.6 338L111 326L112.4 338zM111.6 338L113 324L114.4 338zM113.6 338L115 315L116.4 338zM115.6 338L117 316L118.4 338zM117.6 338L119 318L120.4 338zM119.6 338L121 320L122.4 338zM121.6 338L123 316L124.4 338zM123.6 338L125 310L126.4 338zM125.6 338L127 311L128.4 338zM131.6 338L133 319L134.4 338zM133.6 338L135 318L136.4 338zM135.6 338L137 316L138.4 338zM137.6 338L139 320L140.4 338zM139.6 338L141 314L142.4 338zM141.6 338L143 308L144.4 338zM143.6 338L145 322L146.4 338zM147.6 338L149 315L150.4 338zM149.6 338L151 309L152.4 338zM151.6 338L153 304L154.4 338zM153.6 338L155 308L156.4 338zM157.6 338L159 312L160.4 338zM159.6 338L161 319L162.4 338zM161.6 338L163 319L164.4 338zM165.6 338L167 326L168.4 338zM167.6 338L169 327L170.4 338zM181.6 338L183 319L184.4 338zM183.6 338L185 325L186.4 338zM185.6 338L187 319L188.4 338zM187.6 338L189 319L190.4 338zM197.6 338L199 324L200.4 338zM199.6 338L201 320L202.4 338zM201.6 338L203 320L204.4 338zM203.6 338L205 323L206.4 338zM205.6 338L207 321L208.4 338zM207.6 338L209 328L210.4 338zM211.6 338L213 326L214.4 338zM215.6 338L217 316L218.4 338zM219.6 338L221 304L222.4 338zM220.3 338L221 274L221.7 338zM221.6 338L223 302L224.4 338zM223.6 338L225 318L226.4 338zM225.6 338L227 318L228.4 338zM227.6 338L229 318L230.4 338zM229.6 338L231 317L232.4 338zM231.6 338L233 325L234.4 338zM233.6 338L235 322L236.4 338zM235.6 338L237 317L238.4 338zM239.6 338L241 327L242.4 338zM241.6 338L243 320L244.4 338zM243.6 338L245 322L246.4 338zM247.6 338L249 315L250.4 338zM249.6 338L251 312L252.4 338zM253.6 338L255 309L256.4 338zM257.6 338L259 315L260.4 338zM259.6 338L261 316L262.4 338zM263.6 338L265 313L266.4 338zM267.6 338L269 318L270.4 338zM273.6 338L275 319L276.4 338zM275.6 338L277 322L278.4 338zM277.6 338L279 318L280.4 338zM285.6 338L287 323L288.4 338zM287.6 338L289 319L290.4 338zM289.6 338L291 320L292.4 338zM293.6 338L295 323L296.4 338zM295.6 338L297 315L298.4 338zM297.6 338L299 323L300.4 338zM299.6 338L301 322L302.4 338zM301.6 338L303 315L304.4 338zM303.6 338L305 325L306.4 338zM305.6 338L307 331L308.4 338zM307.6 338L309 329L310.4 338zM309.6 338L311 327L312.4 338zM311.6 338L313 325L314.4 338zM313.6 338L315 323L316.4 338zM319.6 338L321 322L322.4 338zM321.6 338L323 330L324.4 338zM325.6 338L327 328L328.4 338zM329.6 338L331 321L332.4 338zM337.6 338L339 301L340.4 338zM339.6 338L341 302L342.4 338zM340.3 338L341 261L341.7 338zM343.6 338L345 317L346.4 338zM347.6 338L349 314L350.4 338zM349.6 338L351 301L352.4 338zM351.6 338L353 291L354.4 338zM353.6 338L355 294L356.4 338zM355.6 338L357 311L358.4 338zM357.6 338L359 305L360.4 338zM359.6 338L361 306L362.4 338zM361.6 338L363 306L364.4 338zM363.6 338L365 309L366.4 338zM367.6 338L369 305L370.4 338zM369.6 338L371 307L372.4 338zM375.6 338L377 319L378.4 338zM379.6 338L381 317L382.4 338zM381.6 338L383 315L384.4 338zM383.6 338L385 318L386.4 338zM385.6 338L387 322L388.4 338zM387.6 338L389 315L390.4 338zM389.6 338L391 321L392.4 338zM391.6 338L393 311L394.4 338zM393.6 338L395 322L396.4 338zM395.6 338L397 317L398.4 338zM397.6 338L399 317L400.4 338zM399.6 338L401 324L402.4 338zM401.6 338L403 324L404.4 338zM403.6 338L405 317L406.4 338zM405.6 338L407 326L408.4 338zM407.6 338L409 318L410.4 338zM409.6 338L411 317L412.4 338zM415.6 338L417 312L418.4 338zM419.6 338L421 311L422.4 338zM425.6 338L427 325L428.4 338zM427.6 338L429 316L430.4 338zM429.6 338L431 322L432.4 338zM431.6 338L433 322L434.4 338zM433.6 338L435 325L436.4 338zM435.6 338L437 320L438.4 338zM439.6 338L441 323L442.4 338zM441.6 338L443 316L444.4 338zM443.6 338L445 322L446.4 338zM445.6 338L447 323L448.4 338zM453.6 338L455 327L456.4 338zM457.6 338L459 326L460.4 338zM459.6 338L461 326L462.4 338zM465.6 338L467 320L468.4 338zM467.6 338L469 320L470.4 338zM473.6 338L475 303L476.4 338zM474.3 338L475 254L475.7 338zM475.6 338L477 303L478.4 338zM489.6 338L491 309L492.4 338zM491.6 338L493 312L494.4 338zM495.6 338L497 317L498.4 338zM497.6 338L499 325L500.4 338zM499.6 338L501 317L502.4 338zM503.6 338L505 315L506.4 338zM507.6 338L509 311L510.4 338zM509.6 338L511 306L512.4 338zM511.6 338L513 317L514.4 338zM513.6 338L515 309L516.4 338zM515.6 338L517 318L518.4 338zM517.6 338L519 321L520.4 338zM519.6 338L521 312L522.4 338zM521.6 338L523 317L524.4 338zM523.6 338L525 323L526.4 338zM527.6 338L529 327L530.4 338zM539.6 338L541 324L542.4 338zM541.6 338L543 322L544.4 338zM543.6 338L545 329L546.4 338zM547.6 338L549 318L550.4 338zM549.6 338L551 331L552.4 338zM551.6 338L553 327L554.4 338zM553.6 338L555 325L556.4 338zM555.6 338L557 326L558.4 338zM557.6 338L559 324L560.4 338zM561.6 338L563 325L564.4 338zM563.6 338L565 319L566.4 338zM567.6 338L569 317L570.4 338zM571.6 338L573 325L574.4 338zM577.6 338L579 321L580.4 338zM581.6 338L583 317L584.4 338zM583.6 338L585 321L586.4 338zM587.6 338L589 312L590.4 338zM589.6 338L591 308L592.4 338zM593.6 338L595 296L596.4 338zM595.6 338L597 309L598.4 338zM597.6 338L599 310L600.4 338zM599.6 338L601 315L602.4 338zM605.6 338L607 311L608.4 338zM607.6 338L609 310L610.4 338zM609.6 338L611 316L612.4 338zM611.6 338L613 316L614.4 338zM617.6 338L619 310L620.4 338zM619.6 338L621 312L622.4 338zM621.6 338L623 319L624.4 338zM623.6 338L625 318L626.4 338zM625.6 338L627 314L628.4 338zM627.6 338L629 318L630.4 338zM629.6 338L631 320L632.4 338zM631.6 338L633 314L634.4 338zM633.6 338L635 319L636.4 338zM635.6 338L637 321L638.4 338zM637.6 338L639 325L640.4 338zM639.6 338L641 327L642.4 338zM645.6 338L647 317L648.4 338zM653.6 338L655 318L656.4 338zM655.6 338L657 314L658.4 338zM657.6 338L659 308L660.4 338zM659.6 338L661 310L662.4 338zM661.6 338L663 309L664.4 338zM663.6 338L665 308L666.4 338zM667.6 338L669 307L670.4 338zM671.6 338L673 315L674.4 338zM675.6 338L677 312L678.4 338zM679.6 338L681 317L682.4 338zM681.6 338L683 320L684.4 338zM683.6 338L685 319L686.4 338zM685.6 338L687 323L688.4 338zM687.6 338L689 316L690.4 338zM691.6 338L693 327L694.4 338zM697.6 338L699 325L700.4 338zM703.6 338L705 319L706.4 338zM707.6 338L709 323L710.4 338zM709.6 338L711 313L712.4 338zM711.6 338L713 317L714.4 338zM715.6 338L717 317L718.4 338zM717.6 338L719 315L720.4 338zM719.6 338L721 316L722.4 338zM721.6 338L723 317L724.4 338zM723.6 338L725 317L726.4 338zM725.6 338L727 319L728.4 338zM727.6 338L729 323L730.4 338zM729.6 338L731 317L732.4 338zM733.6 338L735 319L736.4 338zM735.6 338L737 320L738.4 338zM737.6 338L739 322L740.4 338zM745.6 338L747 332L748.4 338zM759.6 338L761 327L762.4 338zM765.6 338L767 319L768.4 338zM767.6 338L769 329L770.4 338zM769.6 338L771 328L772.4 338zM775.6 338L777 314L778.4 338zM777.6 338L779 322L780.4 338zM779.6 338L781 319L782.4 338zM785.6 338L787 322L788.4 338zM787.6 338L789 316L790.4 338zM791.6 338L793 303L794.4 338zM793.6 338L795 310L796.4 338zM797.6 338L799 318L800.4 338zM799.6 338L801 313L802.4 338zM803.6 338L805 313L806.4 338zM805.6 338L807 310L808.4 338zM809.6 338L811 309L812.4 338zM811.6 338L813 313L814.4 338zM813.6 338L815 315L816.4 338zM817.6 338L819 321L820.4 338zM821.6 338L823 319L824.4 338zM829.6 338L831 326L832.4 338zM831.6 338L833 325L834.4 338zM833.6 338L835 321L836.4 338zM835.6 338L837 316L838.4 338zM837.6 338L839 318L840.4 338zM839.6 338L841 314L842.4 338zM841.6 338L843 323L844.4 338zM843.6 338L845 320L846.4 338zM849.6 338L851 321L852.4 338zM853.6 338L855 324L856.4 338zM855.6 338L857 321L858.4 338zM859.6 338L861 306L862.4 338zM867.6 338L869 329L870.4 338zM871.6 338L873 328L874.4 338zM877.6 338L879 321L880.4 338zM879.6 338L881 318L882.4 338zM883.6 338L885 325L886.4 338zM887.6 338L889 325L890.4 338zM893.6 338L895 321L896.4 338zM895.6 338L897 328L898.4 338zM903.6 338L905 323L906.4 338zM905.6 338L907 303L908.4 338zM907.6 338L909 301L910.4 338zM908.3 338L909 264L909.7 338zM913.6 338L915 326L916.4 338zM917.6 338L919 303L920.4 338zM921.6 338L923 308L924.4 338zM923.6 338L925 318L926.4 338zM927.6 338L929 298L930.4 338zM929.6 338L931 290L932.4 338zM930.3 338L931 275L931.7 338zM933.6 338L935 316L936.4 338zM937.6 338L939 316L940.4 338zM939.6 338L941 312L942.4 338zM943.6 338L945 313L946.4 338zM945.6 338L947 322L948.4 338zM949.6 338L951 323L952.4 338zM951.6 338L953 319L954.4 338zM961.6 338L963 320L964.4 338zM963.6 338L965 325L966.4 338zM965.6 338L967 324L968.4 338zM967.6 338L969 328L970.4 338zM971.6 338L973 332L974.4 338zM975.6 338L977 327L978.4 338zM979.6 338L981 314L982.4 338zM981.6 338L983 322L984.4 338zM983.6 338L985 326L986.4 338zM989.6 338L991 320L992.4 338zM991.6 338L993 317L994.4 338zM993.6 338L995 322L996.4 338zM995.6 338L997 312L998.4 338zM999.6 338L1001 324L1002.4 338zM1001.6 338L1003 321L1004.4 338zM1005.6 338L1007 314L1008.4 338zM1007.6 338L1009 317L1010.4 338zM1009.6 338L1011 326L1012.4 338zM1011.6 338L1013 313L1014.4 338zM1013.6 338L1015 308L1016.4 338zM1015.6 338L1017 300L1018.4 338zM1017.6 338L1019 303L1020.4 338zM1021.6 338L1023 314L1024.4 338zM1025.6 338L1027 302L1028.4 338zM1027.6 338L1029 295L1030.4 338zM1029.6 338L1031 297L1032.4 338zM1031.6 338L1033 318L1034.4 338zM1033.6 338L1035 316L1036.4 338zM1035.6 338L1037 318L1038.4 338zM1037.6 338L1039 304L1040.4 338zM1041.6 338L1043 307L1044.4 338zM1043.6 338L1045 306L1046.4 338zM1047.6 338L1049 314L1050.4 338zM1049.6 338L1051 309L1052.4 338zM1051.6 338L1053 322L1054.4 338zM1055.6 338L1057 309L1058.4 338zM1059.6 338L1061 312L1062.4 338zM1061.6 338L1063 315L1064.4 338zM1063.6 338L1065 319L1066.4 338zM1069.6 338L1071 328L1072.4 338zM1071.6 338L1073 318L1074.4 338zM1073.6 338L1075 328L1076.4 338zM1077.6 338L1079 323L1080.4 338zM1079.6 338L1081 315L1082.4 338zM1081.6 338L1083 326L1084.4 338zM1085.6 338L1087 327L1088.4 338zM1091.6 338L1093 322L1094.4 338zM1093.6 338L1095 319L1096.4 338zM1095.6 338L1097 314L1098.4 338zM1099.6 338L1101 314L1102.4 338zM1101.6 338L1103 304L1104.4 338zM1103.6 338L1105 317L1106.4 338zM1105.6 338L1107 310L1108.4 338zM1107.6 338L1109 318L1110.4 338zM1113.6 338L1115 315L1116.4 338zM1117.6 338L1119 316L1120.4 338zM1119.6 338L1121 311L1122.4 338zM1121.6 338L1123 309L1124.4 338zM1125.6 338L1127 304L1128.4 338zM1126.3 338L1127 269L1127.7 338zM1127.6 338L1129 306L1130.4 338zM1129.6 338L1131 312L1132.4 338zM1139.6 338L1141 319L1142.4 338zM1141.6 338L1143 324L1144.4 338zM1145.6 338L1147 319L1148.4 338zM1149.6 338L1151 319L1152.4 338zM1151.6 338L1153 325L1154.4 338zM1155.6 338L1157 316L1158.4 338zM1157.6 338L1159 314L1160.4 338zM1159.6 338L1161 314L1162.4 338zM1161.6 338L1163 320L1164.4 338zM1163.6 338L1165 325L1166.4 338zM1167.6 338L1169 317L1170.4 338zM1173.6 338L1175 319L1176.4 338zM1175.6 338L1177 323L1178.4 338zM1177.6 338L1179 324L1180.4 338zM1181.6 338L1183 314L1184.4 338zM1183.6 338L1185 319L1186.4 338zM1185.6 338L1187 327L1188.4 338zM1191.6 338L1193 325L1194.4 338zM1193.6 338L1195 322L1196.4 338zM1195.6 338L1197 321L1198.4 338zM1197.6 338L1199 314L1200.4 338zM1199.6 338L1201 320L1202.4 338zM1201.6 338L1203 318L1204.4 338zM1203.6 338L1205 321L1206.4 338zM1207.6 338L1209 323L1210.4 338zM1209.6 338L1211 329L1212.4 338zM1211.6 338L1213 329L1214.4 338zM1217.6 338L1219 317L1220.4 338zM1221.6 338L1223 316L1224.4 338zM1223.6 338L1225 321L1226.4 338zM1225.6 338L1227 316L1228.4 338zM1227.6 338L1229 315L1230.4 338zM1229.6 338L1231 313L1232.4 338zM1233.6 338L1235 317L1236.4 338zM1235.6 338L1237 317L1238.4 338zM1237.6 338L1239 329L1240.4 338zM1239.6 338L1241 329L1242.4 338zM1245.6 338L1247 318L1248.4 338zM1247.6 338L1249 311L1250.4 338zM1249.6 338L1251 302L1252.4 338zM1251.6 338L1253 301L1254.4 338zM1253.6 338L1255 316L1256.4 338zM1255.6 338L1257 308L1258.4 338zM1257.6 338L1259 304L1260.4 338zM1259.6 338L1261 306L1262.4 338zM1261.6 338L1263 312L1264.4 338zM1263.6 338L1265 316L1266.4 338zM1265.6 338L1267 317L1268.4 338zM1267.6 338L1269 318L1270.4 338zM1269.6 338L1271 305L1272.4 338zM1271.6 338L1273 318L1274.4 338zM1275.6 338L1277 312L1278.4 338zM1277.6 338L1279 314L1280.4 338zM1279.6 338L1281 316L1282.4 338zM1281.6 338L1283 316L1284.4 338zM1295.6 338L1297 324L1298.4 338zM1297.6 338L1299 320L1300.4 338zM1299.6 338L1301 320L1302.4 338zM1305.6 338L1307 327L1308.4 338zM1307.6 338L1309 317L1310.4 338zM1313.6 338L1315 324L1316.4 338zM1315.6 338L1317 326L1318.4 338zM1317.6 338L1319 314L1320.4 338zM1319.6 338L1321 324L1322.4 338zM1321.6 338L1323 316L1324.4 338zM1325.6 338L1327 325L1328.4 338zM1327.6 338L1329 320L1330.4 338zM1329.6 338L1331 327L1332.4 338zM1333.6 338L1335 324L1336.4 338zM1337.6 338L1339 325L1340.4 338zM1347.6 338L1349 326L1350.4 338zM1353.6 338L1355 321L1356.4 338zM1355.6 338L1357 321L1358.4 338zM1357.6 338L1359 320L1360.4 338zM1367.6 338L1369 320L1370.4 338zM1375.6 338L1377 319L1378.4 338zM1377.6 338L1379 317L1380.4 338zM1379.6 338L1381 314L1382.4 338zM1381.6 338L1383 315L1384.4 338zM1383.6 338L1385 322L1386.4 338zM1385.6 338L1387 328L1388.4 338zM1393.6 338L1395 321L1396.4 338zM1403.6 338L1405 323L1406.4 338zM1405.6 338L1407 326L1408.4 338zM1407.6 338L1409 328L1410.4 338zM1409.6 338L1411 317L1412.4 338zM1411.6 338L1413 324L1414.4 338zM1413.6 338L1415 323L1416.4 338zM1415.6 338L1417 320L1418.4 338zM1417.6 338L1419 315L1420.4 338zM1419.6 338L1421 317L1422.4 338zM1421.6 338L1423 308L1424.4 338zM1423.6 338L1425 306L1426.4 338zM1425.6 338L1427 313L1428.4 338zM1427.6 338L1429 302L1430.4 338zM1429.6 338L1431 308L1432.4 338zM1431.6 338L1433 311L1434.4 338zM1433.6 338L1435 304L1436.4 338zM1437.6 338L1439 308L1440.4 338zM1439.6 338L1441 319L1442.4 338zM1441.6 338L1443 313L1444.4 338zM1443.6 338L1445 316L1446.4 338zM1445.6 338L1447 316L1448.4 338zM1447.6 338L1449 304L1450.4 338zM1449.6 338L1451 305L1452.4 338zM1451.6 338L1453 308L1454.4 338zM1455.6 338L1457 315L1458.4 338zM1457.6 338L1459 305L1460.4 338zM1461.6 338L1463 311L1464.4 338zM1463.6 338L1465 318L1466.4 338zM1465.6 338L1467 318L1468.4 338zM1467.6 338L1469 320L1470.4 338zM1471.6 338L1473 310L1474.4 338zM1473.6 338L1475 304L1476.4 338zM1474.3 338L1475 282L1475.7 338zM1475.6 338L1477 306L1478.4 338zM1481.6 338L1483 318L1484.4 338z'/><path fill='#fff6b0' opacity='.7' d='M4.2 338L5 329L5.8 338zM8.2 338L9 332L9.8 338zM10.2 338L11 332L11.8 338zM18.2 338L19 333L19.8 338zM22.2 338L23 326L23.8 338zM30.2 338L31 321L31.8 338zM42.2 338L43 322L43.8 338zM44.2 338L45 322L45.8 338zM48.2 338L49 320L49.8 338zM54.2 338L55 332L55.8 338zM76.2 338L77 330L77.8 338zM86.2 338L87 331L87.8 338zM90.2 338L91 332L91.8 338zM98.2 338L99 330L99.8 338zM104.2 338L105 329L105.8 338zM110.2 338L111 331L111.8 338zM120.2 338L121 330L121.8 338zM122.2 338L123 326L123.8 338zM128.2 338L129 330L129.8 338zM130.2 338L131 326L131.8 338zM132.2 338L133 329L133.8 338zM150.2 338L151 321L151.8 338zM152.2 338L153 324L153.8 338zM162.2 338L163 329L163.8 338zM172.2 338L173 335L173.8 338zM222.2 338L223 320L223.8 338zM246.2 338L247 332L247.8 338zM250.2 338L251 325L251.8 338zM270.2 338L271 329L271.8 338zM280.2 338L281 324L281.8 338zM284.2 338L285 328L285.8 338zM286.2 338L287 333L287.8 338zM292.2 338L293 332L293.8 338zM294.2 338L295 333L295.8 338zM306.2 338L307 335L307.8 338zM308.2 338L309 334L309.8 338zM344.2 338L345 327L345.8 338zM348.2 338L349 330L349.8 338zM350.2 338L351 317L351.8 338zM374.2 338L375 327L375.8 338zM404.2 338L405 331L405.8 338zM422.2 338L423 327L423.8 338zM428.2 338L429 327L429.8 338zM430.2 338L431 333L431.8 338zM436.2 338L437 331L437.8 338zM452.2 338L453 325L453.8 338zM468.2 338L469 332L469.8 338zM472.2 338L473 329L473.8 338zM478.2 338L479 330L479.8 338zM486.2 338L487 327L487.8 338zM492.2 338L493 324L493.8 338zM504.2 338L505 330L505.8 338zM506.2 338L507 332L507.8 338zM512.2 338L513 330L513.8 338zM546.2 338L547 336L547.8 338zM552.2 338L553 332L553.8 338zM554.2 338L555 332L555.8 338zM556.2 338L557 332L557.8 338zM566.2 338L567 334L567.8 338zM570.2 338L571 330L571.8 338zM572.2 338L573 332L573.8 338zM576.2 338L577 332L577.8 338zM586.2 338L587 329L587.8 338zM588.2 338L589 327L589.8 338zM594.2 338L595 318L595.8 338zM604.2 338L605 326L605.8 338zM616.2 338L617 325L617.8 338zM618.2 338L619 324L619.8 338zM644.2 338L645 333L645.8 338zM650.2 338L651 333L651.8 338zM658.2 338L659 320L659.8 338zM668.2 338L669 328L669.8 338zM670.2 338L671 327L671.8 338zM672.2 338L673 325L673.8 338zM674.2 338L675 327L675.8 338zM682.2 338L683 328L683.8 338zM696.2 338L697 333L697.8 338zM700.2 338L701 330L701.8 338zM720.2 338L721 328L721.8 338zM730.2 338L731 331L731.8 338zM742.2 338L743 329L743.8 338zM746.2 338L747 336L747.8 338zM780.2 338L781 330L781.8 338zM810.2 338L811 321L811.8 338zM826.2 338L827 332L827.8 338zM860.2 338L861 324L861.8 338zM868.2 338L869 335L869.8 338zM872.2 338L873 334L873.8 338zM874.2 338L875 329L875.8 338zM878.2 338L879 333L879.8 338zM886.2 338L887 334L887.8 338zM888.2 338L889 332L889.8 338zM890.2 338L891 331L891.8 338zM896.2 338L897 334L897.8 338zM898.2 338L899 335L899.8 338zM916.2 338L917 324L917.8 338zM952.2 338L953 330L953.8 338zM958.2 338L959 329L959.8 338zM968.2 338L969 334L969.8 338zM972.2 338L973 335L973.8 338zM974.2 338L975 332L975.8 338zM978.2 338L979 331L979.8 338zM1004.2 338L1005 334L1005.8 338zM1006.2 338L1007 324L1007.8 338zM1010.2 338L1011 333L1011.8 338zM1018.2 338L1019 327L1019.8 338zM1022.2 338L1023 329L1023.8 338zM1024.2 338L1025 325L1025.8 338zM1044.2 338L1045 328L1045.8 338zM1054.2 338L1055 329L1055.8 338zM1060.2 338L1061 323L1061.8 338zM1066.2 338L1067 331L1067.8 338zM1072.2 338L1073 328L1073.8 338zM1082.2 338L1083 333L1083.8 338zM1092.2 338L1093 333L1093.8 338zM1114.2 338L1115 327L1115.8 338zM1128.2 338L1129 324L1129.8 338zM1140.2 338L1141 331L1141.8 338zM1162.2 338L1163 331L1163.8 338zM1170.2 338L1171 329L1171.8 338zM1172.2 338L1173 330L1173.8 338zM1182.2 338L1183 330L1183.8 338zM1186.2 338L1187 333L1187.8 338zM1188.2 338L1189 332L1189.8 338zM1198.2 338L1199 330L1199.8 338zM1202.2 338L1203 326L1203.8 338zM1242.2 338L1243 334L1243.8 338zM1250.2 338L1251 318L1251.8 338zM1260.2 338L1261 324L1261.8 338zM1278.2 338L1279 329L1279.8 338zM1282.2 338L1283 331L1283.8 338zM1300.2 338L1301 329L1301.8 338zM1304.2 338L1305 330L1305.8 338zM1314.2 338L1315 331L1315.8 338zM1320.2 338L1321 332L1321.8 338zM1334.2 338L1335 330L1335.8 338zM1338.2 338L1339 331L1339.8 338zM1340.2 338L1341 330L1341.8 338zM1348.2 338L1349 334L1349.8 338zM1352.2 338L1353 333L1353.8 338zM1354.2 338L1355 332L1355.8 338zM1356.2 338L1357 330L1357.8 338zM1384.2 338L1385 331L1385.8 338zM1386.2 338L1387 334L1387.8 338zM1388.2 338L1389 335L1389.8 338zM1392.2 338L1393 331L1393.8 338zM1400.2 338L1401 332L1401.8 338zM1410.2 338L1411 329L1411.8 338zM1418.2 338L1419 328L1419.8 338zM1420.2 338L1421 327L1421.8 338zM1422.2 338L1423 325L1423.8 338zM1428.2 338L1429 319L1429.8 338zM1436.2 338L1437 324L1437.8 338zM1452.2 338L1453 326L1453.8 338zM1464.2 338L1465 326L1465.8 338zM1480.2 338L1481 326L1481.8 338z'/></g></g><use href='#spec' y='343'/><path d='M318.500 220V901' stroke='#fff' stroke-width='1' stroke-dasharray='1 1'/><rect x='1804' y='196' width='1.600' height='718' fill='#d6d6d6'/><path d='M318.0 913v10M326.2 913v4.5M334.3 913v4.5M342.5 913v4.5M350.6 913v4.5M358.8 913v7.5M367.0 913v4.5M375.1 913v4.5M383.3 913v4.5M391.4 913v4.5M399.6 913v10M407.8 913v4.5M415.9 913v4.5M424.1 913v4.5M432.2 913v4.5M440.4 913v7.5M448.5 913v4.5M456.7 913v4.5M464.9 913v4.5M473.0 913v4.5M481.2 913v10M489.3 913v4.5M497.5 913v4.5M505.7 913v4.5M513.8 913v4.5M522.0 913v7.5M530.1 913v4.5M538.3 913v4.5M546.5 913v4.5M554.6 913v4.5M562.8 913v10M570.9 913v4.5M579.1 913v4.5M587.3 913v4.5M595.4 913v4.5M603.6 913v7.5M611.7 913v4.5M619.9 913v4.5M628.1 913v4.5M636.2 913v4.5M644.4 913v10M652.5 913v4.5M660.7 913v4.5M668.9 913v4.5M677.0 913v4.5M685.2 913v7.5M693.3 913v4.5M701.5 913v4.5M709.6 913v4.5M717.8 913v4.5M726.0 913v10M734.1 913v4.5M742.3 913v4.5M750.4 913v4.5M758.6 913v4.5M766.8 913v7.5M774.9 913v4.5M783.1 913v4.5M791.2 913v4.5M799.4 913v4.5M807.6 913v10M815.7 913v4.5M823.9 913v4.5M832.0 913v4.5M840.2 913v4.5M848.4 913v7.5M856.5 913v4.5M864.7 913v4.5M872.8 913v4.5M881.0 913v4.5M889.2 913v10M897.3 913v4.5M905.5 913v4.5M913.6 913v4.5M921.8 913v4.5M929.9 913v7.5M938.1 913v4.5M946.3 913v4.5M954.4 913v4.5M962.6 913v4.5M970.7 913v10M978.9 913v4.5M987.1 913v4.5M995.2 913v4.5M1003.4 913v4.5M1011.5 913v7.5M1019.7 913v4.5M1027.9 913v4.5M1036.0 913v4.5M1044.2 913v4.5M1052.3 913v10M1060.5 913v4.5M1068.7 913v4.5M1076.8 913v4.5M1085.0 913v4.5M1093.1 913v7.5M1101.3 913v4.5M1109.5 913v4.5M1117.6 913v4.5M1125.8 913v4.5M1133.9 913v10M1142.1 913v4.5M1150.3 913v4.5M1158.4 913v4.5M1166.6 913v4.5M1174.7 913v7.5M1182.9 913v4.5M1191.0 913v4.5M1199.2 913v4.5M1207.4 913v4.5M1215.5 913v10M1223.7 913v4.5M1231.8 913v4.5M1240.0 913v4.5M1248.2 913v4.5M1256.3 913v7.5M1264.5 913v4.5M1272.6 913v4.5M1280.8 913v4.5M1289.0 913v4.5M1297.1 913v10M1305.3 913v4.5M1313.4 913v4.5M1321.6 913v4.5M1329.8 913v4.5M1337.9 913v7.5M1346.1 913v4.5M1354.2 913v4.5M1362.4 913v4.5M1370.6 913v4.5M1378.7 913v10M1386.9 913v4.5M1395.0 913v4.5M1403.2 913v4.5M1411.3 913v4.5M1419.5 913v7.5M1427.7 913v4.5M1435.8 913v4.5M1444.0 913v4.5M1452.1 913v4.5M1460.3 913v10M1468.5 913v4.5M1476.6 913v4.5M1484.8 913v4.5M1492.9 913v4.5M1501.1 913v7.5M1509.3 913v4.5M1517.4 913v4.5M1525.6 913v4.5M1533.7 913v4.5M1541.9 913v10M1550.1 913v4.5M1558.2 913v4.5M1566.4 913v4.5M1574.5 913v4.5M1582.7 913v7.5M1590.9 913v4.5M1599.0 913v4.5M1607.2 913v4.5M1615.3 913v4.5M1623.5 913v10M1631.7 913v4.5M1639.8 913v4.5M1648.0 913v4.5M1656.1 913v4.5M1664.3 913v7.5M1672.4 913v4.5M1680.6 913v4.5M1688.8 913v4.5M1696.9 913v4.5M1705.1 913v10M1713.2 913v4.5M1721.4 913v4.5M1729.6 913v4.5M1737.7 913v4.5M1745.9 913v7.5M1754.0 913v4.5M1762.2 913v4.5M1770.4 913v4.5M1778.5 913v4.5M1786.7 913v10M1794.8 913v4.5M1803.0 913v4.5' stroke='#dedede' stroke-width='1.100' fill='none'/><g font-family="'Liberation Sans',sans-serif" font-size='11.600' fill='#d2d2d2'><text x='318' y='939'>hms</text><text x='399.6' y='939.500' text-anchor='middle'>0:10</text><text x='440.4' y='939.500' text-anchor='middle'>0:15</text><text x='481.2' y='939.500' text-anchor='middle'>0:20</text><text x='522.0' y='939.500' text-anchor='middle'>0:25</text><text x='562.8' y='939.500' text-anchor='middle'>0:30</text><text x='603.6' y='939.500' text-anchor='middle'>0:35</text><text x='644.4' y='939.500' text-anchor='middle'>0:40</text><text x='685.2' y='939.500' text-anchor='middle'>0:45</text><text x='726.0' y='939.500' text-anchor='middle'>0:50</text><text x='766.8' y='939.500' text-anchor='middle'>0:55</text><text x='807.6' y='939.500' text-anchor='middle'>1:00</text><text x='848.4' y='939.500' text-anchor='middle'>1:05</text><text x='889.2' y='939.500' text-anchor='middle'>1:10</text><text x='929.9' y='939.500' text-anchor='middle'>1:15</text><text x='970.7' y='939.500' text-anchor='middle'>1:20</text><text x='1011.5' y='939.500' text-anchor='middle'>1:25</text><text x='1052.3' y='939.500' text-anchor='middle'>1:30</text><text x='1093.1' y='939.500' text-anchor='middle'>1:35</text><text x='1133.9' y='939.500' text-anchor='middle'>1:40</text><text x='1174.7' y='939.500' text-anchor='middle'>1:45</text><text x='1215.5' y='939.500' text-anchor='middle'>1:50</text><text x='1256.3' y='939.500' text-anchor='middle'>1:55</text><text x='1297.1' y='939.500' text-anchor='middle'>2:00</text><text x='1337.9' y='939.500' text-anchor='middle'>2:05</text><text x='1378.7' y='939.500' text-anchor='middle'>2:10</text><text x='1419.5' y='939.500' text-anchor='middle'>2:15</text><text x='1460.3' y='939.500' text-anchor='middle'>2:20</text><text x='1501.1' y='939.500' text-anchor='middle'>2:25</text><text x='1541.9' y='939.500' text-anchor='middle'>2:30</text><text x='1582.7' y='939.500' text-anchor='middle'>2:35</text><text x='1623.5' y='939.500' text-anchor='middle'>2:40</text><text x='1664.3' y='939.500' text-anchor='middle'>2:45</text><text x='1705.1' y='939.500' text-anchor='middle'>2:50</text><text x='1745.9' y='939.500' text-anchor='middle'>2:55</text><text x='1786.7' y='939.500' text-anchor='middle'>3:00</text></g><path d='M1805 558.0h9M1805 551.5h4.5M1805 544.9h4.5M1805 538.4h4.5M1805 531.8h4.5M1805 525.3h9M1805 518.8h4.5M1805 512.2h4.5M1805 505.7h4.5M1805 499.1h4.5M1805 492.6h9M1805 486.1h4.5M1805 479.5h4.5M1805 473.0h4.5M1805 466.4h4.5M1805 459.9h9M1805 453.4h4.5M1805 446.8h4.5M1805 440.3h4.5M1805 433.7h4.5M1805 427.2h9M1805 420.7h4.5M1805 414.1h4.5M1805 407.6h4.5M1805 401.0h4.5M1805 394.5h9M1805 388.0h4.5M1805 381.4h4.5M1805 374.9h4.5M1805 368.3h4.5M1805 361.8h9M1805 355.3h4.5M1805 348.7h4.5M1805 342.2h4.5M1805 335.6h4.5M1805 329.1h9M1805 322.6h4.5M1805 316.0h4.5M1805 309.5h4.5M1805 302.9h4.5M1805 296.4h9M1805 289.9h4.5M1805 283.3h4.5M1805 276.8h4.5M1805 270.2h4.5M1805 263.7h9M1805 257.2h4.5M1805 250.6h4.5M1805 244.1h4.5M1805 237.5h4.5M1805 231.0h9M1805 224.5h4.5M1805 901.0h9M1805 894.5h4.5M1805 887.9h4.5M1805 881.4h4.5M1805 874.8h4.5M1805 868.3h9M1805 861.8h4.5M1805 855.2h4.5M1805 848.7h4.5M1805 842.1h4.5M1805 835.6h9M1805 829.1h4.5M1805 822.5h4.5M1805 816.0h4.5M1805 809.4h4.5M1805 802.9h9M1805 796.4h4.5M1805 789.8h4.5M1805 783.3h4.5M1805 776.7h4.5M1805 770.2h9M1805 763.7h4.5M1805 757.1h4.5M1805 750.6h4.5M1805 744.0h4.5M1805 737.5h9M1805 731.0h4.5M1805 724.4h4.5M1805 717.9h4.5M1805 711.3h4.5M1805 704.8h9M1805 698.3h4.5M1805 691.7h4.5M1805 685.2h4.5M1805 678.6h4.5M1805 672.1h9M1805 665.6h4.5M1805 659.0h4.5M1805 652.5h4.5M1805 645.9h4.5M1805 639.4h9M1805 632.9h4.5M1805 626.3h4.5M1805 619.8h4.5M1805 613.2h4.5M1805 606.7h9M1805 600.2h4.5M1805 593.6h4.5M1805 587.1h4.5M1805 580.5h4.5M1805 574.0h9M1805 567.5h4.5' stroke='#dedede' stroke-width='1.100' fill='none'/><g font-family="'Liberation Sans',sans-serif" font-size='11.500' fill='#d6d6d6'><text x='1820' y='206.500'>Hz</text><text x='1820' y='530.6'>5000</text><text x='1820' y='497.9'>10000</text><text x='1820' y='465.2'>15000</text><text x='1820' y='432.5'>20000</text><text x='1820' y='399.8'>25000</text><text x='1820' y='367.1'>30000</text><text x='1820' y='334.4'>35000</text><text x='1820' y='301.7'>40000</text><text x='1820' y='269.0'>45000</text><text x='1820' y='236.3'>50000</text><text x='1820' y='873.6'>5000</text><text x='1820' y='840.9'>10000</text><text x='1820' y='808.2'>15000</text><text x='1820' y='775.5'>20000</text><text x='1820' y='742.8'>25000</text><text x='1820' y='710.1'>30000</text><text x='1820' y='677.4'>35000</text><text x='1820' y='644.7'>40000</text><text x='1820' y='612.0'>45000</text><text x='1820' y='579.3'>50000</text></g><rect x='1867' y='219' width='14.500' height='696.500' fill='#4a4a4a'/><rect x='1868' y='220' width='13.500' height='695.500' fill='#e4e4e4'/><rect x='1868' y='220' width='12' height='694' fill='#000'/><rect x='1893' y='219' width='14.500' height='696.500' fill='#4a4a4a'/><rect x='1894' y='220' width='13.500' height='695.500' fill='#e4e4e4'/><rect x='1894' y='220' width='12' height='694' fill='#000'/></svg>
<div class='a' style='left:314px;top:947px;width:1606px;height:100px;background:#f0f0f0;border-top:2px solid #fbfbfb'></div>
<div class='a' style='left:653px;top:951px;width:2px;height:94px;background:linear-gradient(90deg,#a9a9a9 50%,#fff 50%)'></div>
<div class='a' style='left:1553px;top:951px;width:2px;height:94px;background:linear-gradient(90deg,#a9a9a9 50%,#fff 50%)'></div>
<div class='a' style='left:324px;top:964px;width:171.5px;height:32.500px;border:1px solid #b4b4b4;border-radius:3px;background:linear-gradient(#f6f6f6,#e6e6e6);box-shadow:0 1px 0 #d9d9d9, inset 0 1px 0 #fff'></div>
<div class='a' style='left:355.5px;top:965px;width:2px;height:30.500px;background:linear-gradient(90deg,#d3d3d3 50%,#fbfbfb 50%)'></div>
<div class='a' style='left:390.5px;top:965px;width:2px;height:30.500px;background:linear-gradient(90deg,#d3d3d3 50%,#fbfbfb 50%)'></div>
<div class='a' style='left:425.5px;top:965px;width:2px;height:30.500px;background:linear-gradient(90deg,#d3d3d3 50%,#fbfbfb 50%)'></div>
<div class='a' style='left:460.5px;top:965px;width:2px;height:30.500px;background:linear-gradient(90deg,#d3d3d3 50%,#fbfbfb 50%)'></div>
<div class='a' style='left:506.5px;top:964px;width:137.0px;height:32.500px;border:1px solid #b4b4b4;border-radius:3px;background:linear-gradient(#f6f6f6,#e6e6e6);box-shadow:0 1px 0 #d9d9d9, inset 0 1px 0 #fff'></div>
<div class='a' style='left:539px;top:965px;width:2px;height:30.500px;background:linear-gradient(90deg,#d3d3d3 50%,#fbfbfb 50%)'></div>
<div class='a' style='left:574px;top:965px;width:2px;height:30.500px;background:linear-gradient(90deg,#d3d3d3 50%,#fbfbfb 50%)'></div>
<div class='a' style='left:608.5px;top:965px;width:2px;height:30.500px;background:linear-gradient(90deg,#d3d3d3 50%,#fbfbfb 50%)'></div>
<div class='a' style='left:324px;top:999px;width:171.5px;height:32.500px;border:1px solid #b4b4b4;border-radius:3px;background:linear-gradient(#f6f6f6,#e6e6e6);box-shadow:0 1px 0 #d9d9d9, inset 0 1px 0 #fff'></div>
<div class='a' style='left:355.5px;top:1000px;width:2px;height:30.500px;background:linear-gradient(90deg,#d3d3d3 50%,#fbfbfb 50%)'></div>
<div class='a' style='left:390.5px;top:1000px;width:2px;height:30.500px;background:linear-gradient(90deg,#d3d3d3 50%,#fbfbfb 50%)'></div>
<div class='a' style='left:425.5px;top:1000px;width:2px;height:30.500px;background:linear-gradient(90deg,#d3d3d3 50%,#fbfbfb 50%)'></div>
<div class='a' style='left:460.5px;top:1000px;width:2px;height:30.500px;background:linear-gradient(90deg,#d3d3d3 50%,#fbfbfb 50%)'></div>
<div class='a' style='left:506.5px;top:999px;width:137.0px;height:32.500px;border:1px solid #b4b4b4;border-radius:3px;background:linear-gradient(#f6f6f6,#e6e6e6);box-shadow:0 1px 0 #d9d9d9, inset 0 1px 0 #fff'></div>
<div class='a' style='left:539px;top:1000px;width:2px;height:30.500px;background:linear-gradient(90deg,#d3d3d3 50%,#fbfbfb 50%)'></div>
<div class='a' style='left:574px;top:1000px;width:2px;height:30.500px;background:linear-gradient(90deg,#d3d3d3 50%,#fbfbfb 50%)'></div>
<div class='a' style='left:608.5px;top:1000px;width:2px;height:30.500px;background:linear-gradient(90deg,#d3d3d3 50%,#fbfbfb 50%)'></div>
<svg class='a' style='left:326.0px;top:965.5px' width='30' height='28' viewBox='-15.0 -14.0 30 28' ><path d='M-6-7L7 0L-6 7z' fill='#686868'/></svg>
<svg class='a' style='left:358.5px;top:965.5px' width='30' height='28' viewBox='-15.0 -14.0 30 28' ><g fill='none' stroke='#686868' stroke-width='2.2' stroke-linejoin='round'><path d='M-3-3.500H-8V6H8V-3.500H5'/></g><path d='M-3.500-7.500L2-3.700L-3.500 0z' fill='#686868'/><path d='M-6-3.700H-2' stroke='#686868' stroke-width='2.200'/></svg>
<svg class='a' style='left:393.5px;top:965.5px' width='30' height='28' viewBox='-15.0 -14.0 30 28' ><path d='M-9-7L3 0L-9 7z' fill='#686868'/><rect x='6' y='-7' width='3.600' height='14' fill='#686868'/></svg>
<svg class='a' style='left:428.0px;top:965.5px' width='30' height='28' viewBox='-15.0 -14.0 30 28' ><path d='M0-6.500V6.500L-9.500 0zM9-6.500V6.500L-.5 0z' fill='#686868'/></svg>
<svg class='a' style='left:463.0px;top:965.5px' width='30' height='28' viewBox='-15.0 -14.0 30 28' ><path d='M0-6.500V6.500L9.500 0zM-9-6.500V6.500L.5 0z' fill='#686868'/></svg>
<svg class='a' style='left:325.5px;top:1000.5px' width='30' height='28' viewBox='-15.0 -14.0 30 28' ><rect x='-5.500' y='-5.500' width='11' height='11' fill='#686868'/></svg>
<svg class='a' style='left:358.5px;top:1000.5px' width='30' height='28' viewBox='-15.0 -14.0 30 28' ><rect x='-5' y='-5.500' width='3.200' height='11' fill='#686868'/><rect x='1.800' y='-5.500' width='3.200' height='11' fill='#686868'/></svg>
<svg class='a' style='left:393.0px;top:1000.5px' width='30' height='28' viewBox='-15.0 -14.0 30 28' ><circle r='5.700' fill='#8b0505'/><circle r='3' fill='#a80a0a' opacity='.6'/></svg>
<svg class='a' style='left:428.0px;top:1000.5px' width='30' height='28' viewBox='-15.0 -14.0 30 28' ><path d='M1-6V6L-7.500 0zM9.500-6V6L1 0z' fill='#686868'/><path d='M-9-9V9M-11.200-9H-6.800M-11.200 9H-6.800' stroke='#686868' stroke-width='1.800' fill='none'/></svg>
<svg class='a' style='left:463.0px;top:1000.5px' width='30' height='28' viewBox='-15.0 -14.0 30 28' ><path d='M-1-6V6L7.500 0zM-9.500-6V6L-1 0z' fill='#686868'/><path d='M9-9V9M11.200-9H6.800M11.200 9H6.800' stroke='#686868' stroke-width='1.800' fill='none'/></svg>
<svg class='a' style='left:508.0px;top:965.5px' width='30' height='28' viewBox='-15.0 -14.0 30 28' ><g transform='translate(0 0)'><circle cx='-2.500' cy='-3' r='5.600' fill='none' stroke='#686868' stroke-width='2.100'/><path d='M2.200 1.700L7.500 7' stroke='#686868' stroke-width='3.800' stroke-linecap='round'/></g><path d='M-5.500-3H.5M-2.500-6V0' stroke='#686868' stroke-width='1.300'/></svg>
<svg class='a' style='left:542.0px;top:965.5px' width='30' height='28' viewBox='-15.0 -14.0 30 28' ><g transform='translate(-1 0)'><circle cx='-2.500' cy='-3' r='5.600' fill='none' stroke='#686868' stroke-width='2.100'/><path d='M2.200 1.700L7.500 7' stroke='#686868' stroke-width='3.800' stroke-linecap='round'/></g><path d='M-6.500-3H-.5' stroke='#686868' stroke-width='1.300'/></svg>
<svg class='a' style='left:577.0px;top:965.5px' width='30' height='28' viewBox='-15.0 -14.0 30 28' ><g transform='translate(0 0)'><circle cx='-2.500' cy='-3' r='5.600' fill='none' stroke='#686868' stroke-width='2.100'/><path d='M2.200 1.700L7.500 7' stroke='#686868' stroke-width='3.800' stroke-linecap='round'/></g><text x='-12' y='11' font-size='7' font-weight='bold' font-family="'Liberation Sans',sans-serif" fill='#686868'>100</text></svg>
<svg class='a' style='left:611.0px;top:965.5px' width='30' height='28' viewBox='-15.0 -14.0 30 28' ><g transform='translate(3 0)'><circle cx='-2.500' cy='-3' r='5.600' fill='none' stroke='#686868' stroke-width='2.100'/><path d='M2.200 1.700L7.500 7' stroke='#686868' stroke-width='3.800' stroke-linecap='round'/></g><path d='M-10.500-8l3 3.500h-6zM-10.500 7l3-3.500h-6zM-10.500-5V4' stroke='#686868' stroke-width='1.600' fill='#686868' stroke-dasharray='3.500 1.500'/></svg>
<svg class='a' style='left:508.0px;top:1000.5px' width='30' height='28' viewBox='-15.0 -14.0 30 28' ><g transform='translate(2 0)'><circle cx='-2.500' cy='-3' r='5.600' fill='none' stroke='#686868' stroke-width='2.100'/><path d='M2.200 1.700L7.500 7' stroke='#686868' stroke-width='3.800' stroke-linecap='round'/></g><path d='M-9.500-8.500H-12V8.500H-9.500' fill='none' stroke='#686868' stroke-width='1.800'/></svg>
<svg class='a' style='left:542.0px;top:1000.5px' width='30' height='28' viewBox='-15.0 -14.0 30 28' ><g transform='translate(-1 0)'><circle cx='-2.500' cy='-3' r='5.600' fill='none' stroke='#686868' stroke-width='2.100'/><path d='M2.200 1.700L7.500 7' stroke='#686868' stroke-width='3.800' stroke-linecap='round'/></g><circle cx='-3.500' cy='-3' r='3.300' fill='none' stroke='#686868' stroke-width='1.400' stroke-dasharray='2 1.500'/></svg>
<svg class='a' style='left:577.0px;top:1000.5px' width='30' height='28' viewBox='-15.0 -14.0 30 28' ><g transform='translate(-1 0) scale(-1 1)'><circle cx='-2.500' cy='-3' r='5.600' fill='none' stroke='#686868' stroke-width='2.100'/><path d='M2.200 1.700L7.500 7' stroke='#686868' stroke-width='3.800' stroke-linecap='round'/></g><path d='M9.500-8.500H12V8.500H9.500' fill='none' stroke='#686868' stroke-width='1.800'/></svg>
<svg class='a' style='left:611.0px;top:1000.5px' width='30' height='28' viewBox='-15.0 -14.0 30 28' ><g transform='translate(3 0)'><circle cx='-2.500' cy='-3' r='5.600' fill='none' stroke='#686868' stroke-width='2.100'/><path d='M2.200 1.700L7.500 7' stroke='#686868' stroke-width='3.800' stroke-linecap='round'/></g><path d='M-10.500-2.500l3-3.500h-6zM-10.500 1.500l3 3.500h-6zM-10.500-9V-5M-10.500 5V8' stroke='#686868' stroke-width='1.600' fill='#686868'/></svg>
<div class='t' style='left:829.500px;top:959px;font-size:91.500px;color:#000;letter-spacing:-.500px;font-family:"DejaVu Sans Condensed","Liberation Sans",sans-serif'>00:00:00.000</div>
<div class='t' style='left:1633px;top:961.500px;font-size:13.500px'>Start</div>
<div class='t' style='left:1724.500px;top:961.500px;font-size:13.500px'>End</div>
<div class='t' style='left:1819px;top:963px;font-size:13.500px'>Length</div>
<div class='t' style='left:1519px;width:100px;text-align:right;top:982px;font-size:13.500px'>Selection</div>
<div class='t' style='left:1519px;width:100px;text-align:right;top:1012px;font-size:13.500px'>View</div>
<div class='a' style='left:1632.5px;top:977.5px;width:89.500px;height:24px;background:#fff;border:1px solid #c6c6c6;border-radius:2.500px;box-shadow:0 0 0 1px #f8f8f8'></div>
<div class='t' style='left:1637.0px;top:982.5px;font-size:13.500px'>00:00:00.000</div>
<div class='a' style='left:1725px;top:977.5px;width:89.500px;height:24px;background:#fff;border:1px solid #c6c6c6;border-radius:2.500px;box-shadow:0 0 0 1px #f8f8f8'></div>
<div class='t' style='left:1729.5px;top:982.5px;font-size:13.500px'>00:00:00.000</div>
<div class='a' style='left:1817.5px;top:977.5px;width:89.500px;height:24px;background:#fff;border:1px solid #c6c6c6;border-radius:2.500px;box-shadow:0 0 0 1px #f8f8f8'></div>
<div class='t' style='left:1822.0px;top:982.5px;font-size:13.500px'>00:00:00.000</div>
<div class='a' style='left:1632.5px;top:1007.5px;width:89.500px;height:24px;background:#fff;border:1px solid #c6c6c6;border-radius:2.500px;box-shadow:0 0 0 1px #f8f8f8'></div>
<div class='t' style='left:1637.0px;top:1012.5px;font-size:13.500px'>00:00:00.000</div>
<div class='a' style='left:1725px;top:1007.5px;width:89.500px;height:24px;background:#fff;border:1px solid #c6c6c6;border-radius:2.500px;box-shadow:0 0 0 1px #f8f8f8'></div>
<div class='t' style='left:1729.5px;top:1012.5px;font-size:13.500px'>00:03:02.123</div>
<div class='a' style='left:1817.5px;top:1007.5px;width:89.500px;height:24px;background:#fff;border:1px solid #c6c6c6;border-radius:2.500px;box-shadow:0 0 0 1px #f8f8f8'></div>
<div class='t' style='left:1822.0px;top:1012.5px;font-size:13.500px'>00:03:02.123</div>
<div class='a' style='left:0;top:1047px;width:1920px;height:31px;background:linear-gradient(#f1f1f1,#e6e6e6 60%,#dcdcdc);border-top:1px solid #fafafa'></div>
<div class='a' style='left:1283px;top:1050px;width:2px;height:26px;background:linear-gradient(90deg,#c4c4c4 50%,#fbfbfb 50%)'></div>
<div class='a' style='left:1679.5px;top:1050px;width:2px;height:26px;background:linear-gradient(90deg,#c4c4c4 50%,#fbfbfb 50%)'></div>
<div class='a' style='left:1800px;top:1050px;width:2px;height:26px;background:linear-gradient(90deg,#c4c4c4 50%,#fbfbfb 50%)'></div>
<div class='a' style='left:1915.5px;top:1050px;width:2px;height:26px;background:linear-gradient(90deg,#c4c4c4 50%,#fbfbfb 50%)'></div>
<div class='t' style='left:1292px;top:1059px;font-size:13.500px'>96000 Hz, 24-bit, 2 Channels</div>
<div class='t' style='left:1688.500px;top:1059px;font-size:13.500px'>100.043 Mb</div>
<div class='t' style='left:1808px;top:1059px;font-size:13.500px'>00:03:02.123</div>
<div class='a' style='left:0;top:1077.500px;width:1920px;height:3px;background:#2a2a2a'></div>
<div class='a' style='left:60px;top:1077.500px;width:360px;height:3px;background:#e8e8e8'></div>
</body></html>
